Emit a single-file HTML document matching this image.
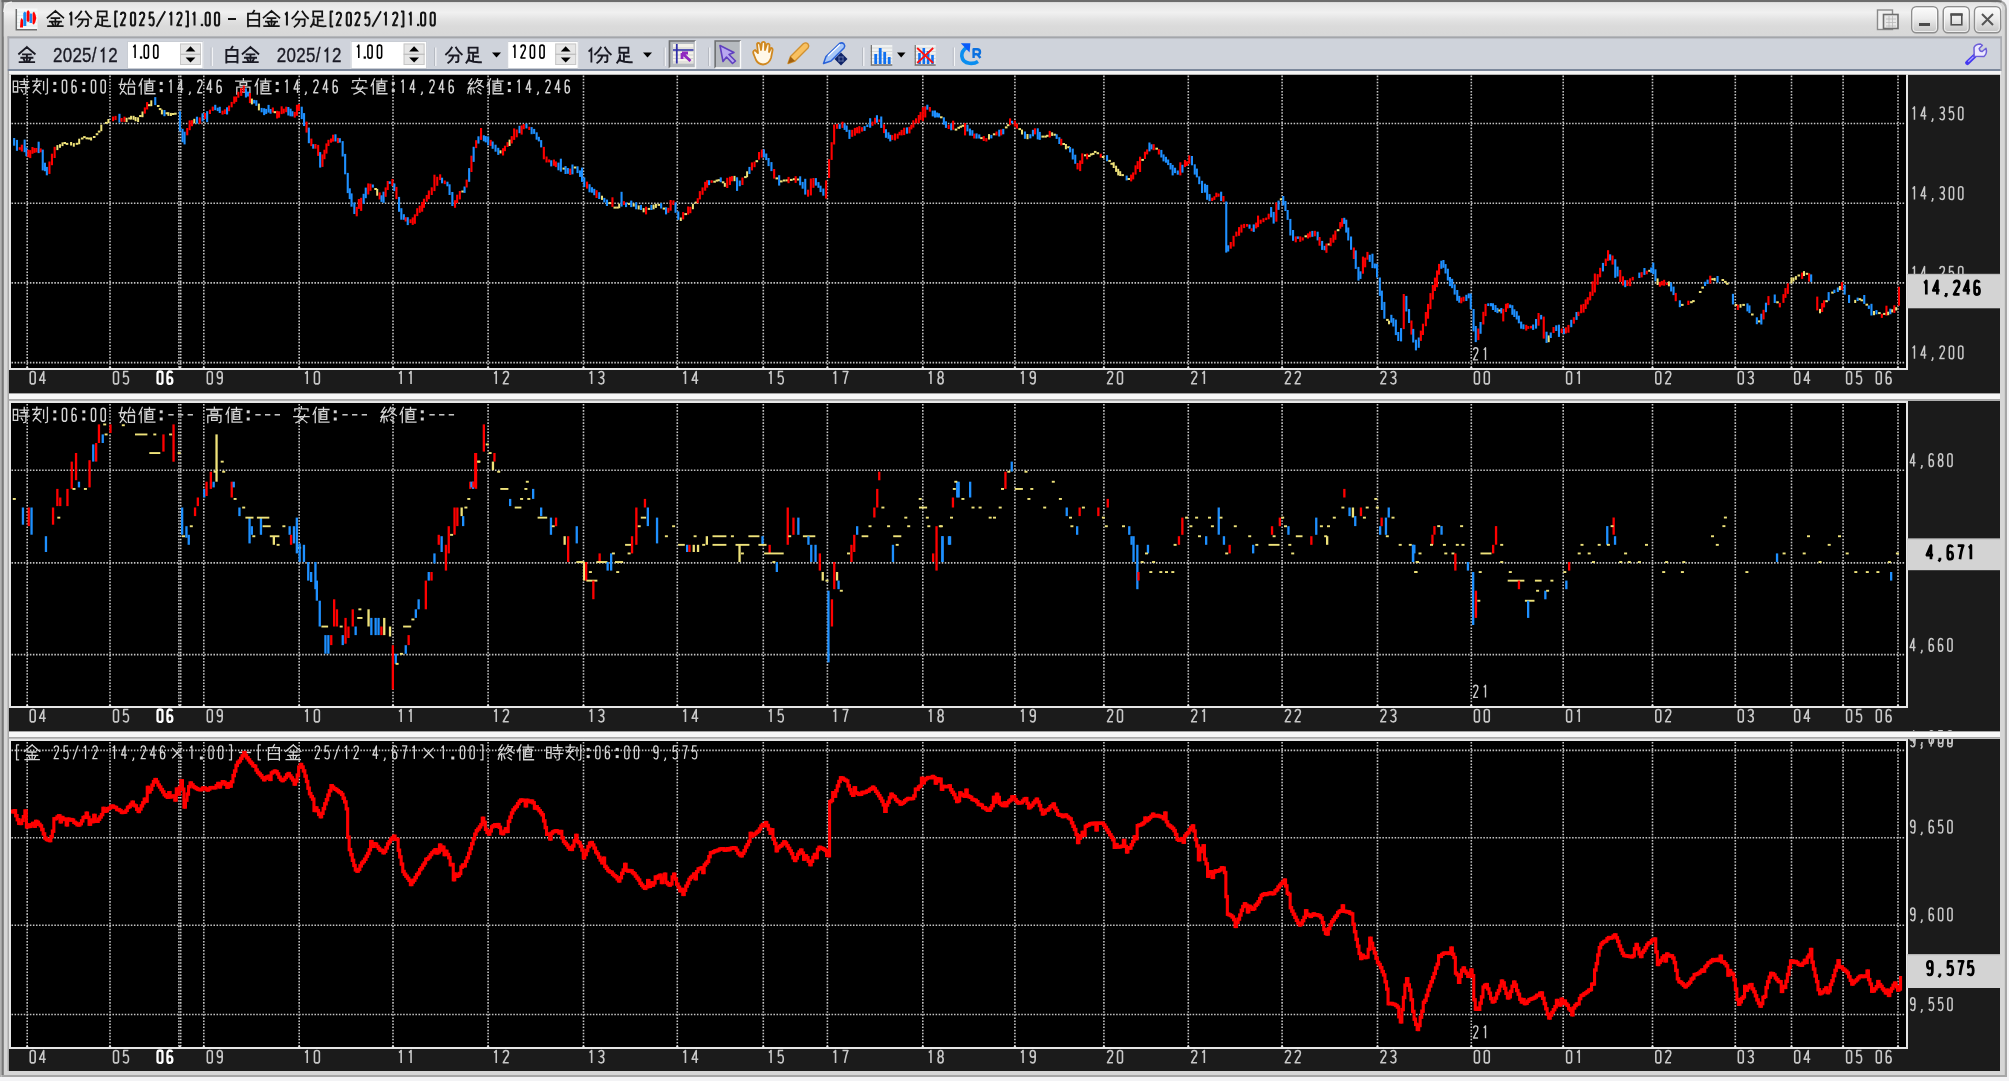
<!DOCTYPE html>
<html><head><meta charset="utf-8"><style>
html,body{margin:0;padding:0;background:#f6f6f6;overflow:hidden}
text{white-space:pre}
svg{display:block;will-change:transform}
</style></head><body>
<svg width="2009" height="1081" viewBox="0 0 2009 1081">
<rect x="0" y="0" width="2009" height="1081" fill="#f3f3f5"/>
<rect x="0" y="0" width="1.5" height="1077" fill="#b2b2b2"/>
<rect x="1.5" y="0" width="2005.5" height="1077" fill="#a6a6a6"/>
<rect x="1.5" y="0" width="2003.3" height="1075" fill="#d6d6d6"/>
<rect x="1.5" y="0" width="2.3" height="1075" fill="#797979"/>
<rect x="1.5" y="0" width="1997" height="2.2" fill="#6c6c6c"/>
<defs><linearGradient id="tg" x1="0" y1="0" x2="0" y2="1"><stop offset="0" stop-color="#e4e4e4"/><stop offset="0.3" stop-color="#f0f0f0"/><stop offset="0.52" stop-color="#e2e2e2"/><stop offset="0.7" stop-color="#dadada"/><stop offset="1" stop-color="#d8d8d8"/></linearGradient><linearGradient id="bg" x1="0" y1="0" x2="0" y2="1"><stop offset="0" stop-color="#fcfcfc"/><stop offset="0.45" stop-color="#ececec"/><stop offset="0.7" stop-color="#d8d8d8"/><stop offset="1" stop-color="#c4c4c4"/></linearGradient></defs>
<path d="M3.8,36.5 V9 Q3.8,2.2 10.5,2.2 H1990.5 V36.5 Z" fill="url(#tg)"/>
<path d="M3.8,12 Q3.8,2.2 12,2.2" fill="none" stroke="#f4f4f4" stroke-width="1.2"/>
<rect x="1996" y="0" width="13" height="10" fill="#f3f3f5"/>
<path d="M1996,0 H1997 Q2007,0 2007,9 V10 H2004.8 V9 Q2004.8,2.2 1997,2.2 H1996 Z" fill="#a6a6a6"/>
<path d="M1996,0 H1997 Q2000,0 2002,0.8 L2001,2.4 Q1999,2.2 1997,2.2 H1996 Z" fill="#6c6c6c"/>
<path d="M1996,2.2 H1997 Q2004.8,2.2 2004.8,9 V10 H2002 V9 Q2002,3.4 1997,3.4 H1996 Z" fill="#d6d6d6"/>
<path d="M1990,2.2 Q2002,2.2 2002,10 V36.5 H1990 Z" fill="url(#tg)"/>
<rect x="7.5" y="36.4" width="1.6" height="1034.6" fill="#a8a8a8"/>
<rect x="7.5" y="36.4" width="1994.5" height="1.2" fill="#a8a8a8"/>
<g><rect x="16" y="8.5" width="21.5" height="21" fill="#f6f8f8"/><path d="M17,12 H37 M17,15.5 H37 M17,19 H37 M17,22.5 H37 M17,26 H37" stroke="#dce8e8" stroke-width="0.7"/><path d="M16.3,9 V29.7 H37" fill="none" stroke="#6e6e6e" stroke-width="1.5"/><path d="M20,27.5 L20.6,20 L21.5,18 L23,20 V27.5 Z" fill="#ff0000"/><path d="M23.3,26 V13 L24.8,11.5 L26.3,13 V26 Z" fill="#1a88f0"/><path d="M26.7,21 V12 L28.1,10 L29.6,12 V21 L28.1,22 Z" fill="#ff0000"/><path d="M29.6,23 V14 L30.9,13.2 L32.2,14 V23 Z" fill="#1a88f0"/><path d="M32.6,24 V13 L34,11.5 L35.3,14 L36.3,18 L35.3,22 L34,24.5 Z" fill="#ff0000"/></g>
<path transform="translate(46.40,9.80) scale(1.1250)" d="M8,1 L1,7 M8,1 L15,7 M4.5,7.5 H11.5 M3,10.5 H13 M8,7.5 V14.5 M5,11.5 L6,13.5 M11,11.5 L10,13.5 M1.5,14.5 H14.5" fill="none" stroke="#141414" stroke-width="1.556" stroke-linecap="square" stroke-linejoin="miter"/>
<path transform="translate(74.50,9.80) scale(1.1250)" d="M6,1.5 Q4,5 1,7.5 M10,1.5 Q12,5 15,7.5 M4,8.5 H12 V13 Q12,14.5 10,14.5 M7.5,8.5 Q7,12.5 3,15" fill="none" stroke="#141414" stroke-width="1.556" stroke-linecap="square" stroke-linejoin="miter"/>
<path transform="translate(93.20,9.80) scale(1.1250)" d="M4,1.5 H12 V6 H4 Z M8,6 V13.2 M8,9.5 H12.5 M4.5,8.5 V13 M2,15 Q4.5,12 4.5,9 M4.5,13 Q9,15 15,14.6" fill="none" stroke="#141414" stroke-width="1.556" stroke-linecap="square" stroke-linejoin="miter"/>
<path transform="translate(244.60,9.80) scale(1.1250)" d="M8.5,0.8 L7.2,3 M3,3.5 H13 V14.8 M3,3.5 V14.8 M3,9 H13 M3,14.3 H13" fill="none" stroke="#141414" stroke-width="1.556" stroke-linecap="square" stroke-linejoin="miter"/>
<path transform="translate(262.50,9.80) scale(1.1250)" d="M8,1 L1,7 M8,1 L15,7 M4.5,7.5 H11.5 M3,10.5 H13 M8,7.5 V14.5 M5,11.5 L6,13.5 M11,11.5 L10,13.5 M1.5,14.5 H14.5" fill="none" stroke="#141414" stroke-width="1.556" stroke-linecap="square" stroke-linejoin="miter"/>
<path transform="translate(291.20,9.80) scale(1.1250)" d="M6,1.5 Q4,5 1,7.5 M10,1.5 Q12,5 15,7.5 M4,8.5 H12 V13 Q12,14.5 10,14.5 M7.5,8.5 Q7,12.5 3,15" fill="none" stroke="#141414" stroke-width="1.556" stroke-linecap="square" stroke-linejoin="miter"/>
<path transform="translate(308.70,9.80) scale(1.1250)" d="M4,1.5 H12 V6 H4 Z M8,6 V13.2 M8,9.5 H12.5 M4.5,8.5 V13 M2,15 Q4.5,12 4.5,9 M4.5,13 Q9,15 15,14.6" fill="none" stroke="#141414" stroke-width="1.556" stroke-linecap="square" stroke-linejoin="miter"/>
<path transform="translate(67.91,12.00) scale(1.0667,1.0000)" d="M1.4,2.6 Q2.6,1.8 3.2,0.5 V13.5" fill="none" stroke="#141414" stroke-width="2.0" vector-effect="non-scaling-stroke" stroke-linejoin="round"/><path transform="translate(113.07,12.00) scale(1.0667,1.0000)" d="M4.4,-0.5 H2 V14.5 H4.4" fill="none" stroke="#141414" stroke-width="2.0" vector-effect="non-scaling-stroke" stroke-linejoin="round"/><path transform="translate(119.84,12.00) scale(1.0667,1.0000)" d="M0.9,3 Q1.1,0.5 3,0.5 Q5.1,0.5 5.1,3.2 Q5.1,5.6 3.2,8 L0.9,13.3 H5.3" fill="none" stroke="#141414" stroke-width="2.0" vector-effect="non-scaling-stroke" stroke-linejoin="round"/><path transform="translate(129.83,12.00) scale(1.0667,1.0000)" d="M1,2.6 Q1,0.5 3,0.5 Q5,0.5 5,2.6 V11.4 Q5,13.5 3,13.5 Q1,13.5 1,11.4 Z" fill="none" stroke="#141414" stroke-width="2.0" vector-effect="non-scaling-stroke" stroke-linejoin="round"/><path transform="translate(138.84,12.00) scale(1.0667,1.0000)" d="M0.9,3 Q1.1,0.5 3,0.5 Q5.1,0.5 5.1,3.2 Q5.1,5.6 3.2,8 L0.9,13.3 H5.3" fill="none" stroke="#141414" stroke-width="2.0" vector-effect="non-scaling-stroke" stroke-linejoin="round"/><path transform="translate(148.35,12.00) scale(1.0667,1.0000)" d="M5,0.5 H1.3 L1.1,6.3 Q1.9,5.2 3,5.2 Q5.1,5.2 5.1,9.3 Q5.1,13.5 3,13.5 Q1.3,13.5 0.8,11.8" fill="none" stroke="#141414" stroke-width="2.0" vector-effect="non-scaling-stroke" stroke-linejoin="round"/><path d="M165.20,11.20 L156.50,26.80" stroke="#141414" stroke-width="1.80"/><path transform="translate(167.91,12.00) scale(1.0667,1.0000)" d="M1.4,2.6 Q2.6,1.8 3.2,0.5 V13.5" fill="none" stroke="#141414" stroke-width="2.0" vector-effect="non-scaling-stroke" stroke-linejoin="round"/><path transform="translate(176.24,12.00) scale(1.0667,1.0000)" d="M0.9,3 Q1.1,0.5 3,0.5 Q5.1,0.5 5.1,3.2 Q5.1,5.6 3.2,8 L0.9,13.3 H5.3" fill="none" stroke="#141414" stroke-width="2.0" vector-effect="non-scaling-stroke" stroke-linejoin="round"/><path transform="translate(183.69,12.00) scale(1.0667,1.0000)" d="M1.6,-0.5 H4 V14.5 H1.6" fill="none" stroke="#141414" stroke-width="2.0" vector-effect="non-scaling-stroke" stroke-linejoin="round"/><path transform="translate(191.11,12.00) scale(1.0667,1.0000)" d="M1.4,2.6 Q2.6,1.8 3.2,0.5 V13.5" fill="none" stroke="#141414" stroke-width="2.0" vector-effect="non-scaling-stroke" stroke-linejoin="round"/><rect x="200.80" y="23.80" width="2.3" height="2.3" fill="#141414"/><path transform="translate(204.53,12.00) scale(1.0667,1.0000)" d="M1,2.6 Q1,0.5 3,0.5 Q5,0.5 5,2.6 V11.4 Q5,13.5 3,13.5 Q1,13.5 1,11.4 Z" fill="none" stroke="#141414" stroke-width="2.0" vector-effect="non-scaling-stroke" stroke-linejoin="round"/><path transform="translate(213.83,12.00) scale(1.0667,1.0000)" d="M1,2.6 Q1,0.5 3,0.5 Q5,0.5 5,2.6 V11.4 Q5,13.5 3,13.5 Q1,13.5 1,11.4 Z" fill="none" stroke="#141414" stroke-width="2.0" vector-effect="non-scaling-stroke" stroke-linejoin="round"/><path d="M228.0,19.00 H236.0" stroke="#141414" stroke-width="2.0"/><path transform="translate(283.51,12.00) scale(1.0667,1.0000)" d="M1.4,2.6 Q2.6,1.8 3.2,0.5 V13.5" fill="none" stroke="#141414" stroke-width="2.0" vector-effect="non-scaling-stroke" stroke-linejoin="round"/><path transform="translate(328.47,12.00) scale(1.0667,1.0000)" d="M4.4,-0.5 H2 V14.5 H4.4" fill="none" stroke="#141414" stroke-width="2.0" vector-effect="non-scaling-stroke" stroke-linejoin="round"/><path transform="translate(335.64,12.00) scale(1.0667,1.0000)" d="M0.9,3 Q1.1,0.5 3,0.5 Q5.1,0.5 5.1,3.2 Q5.1,5.6 3.2,8 L0.9,13.3 H5.3" fill="none" stroke="#141414" stroke-width="2.0" vector-effect="non-scaling-stroke" stroke-linejoin="round"/><path transform="translate(345.63,12.00) scale(1.0667,1.0000)" d="M1,2.6 Q1,0.5 3,0.5 Q5,0.5 5,2.6 V11.4 Q5,13.5 3,13.5 Q1,13.5 1,11.4 Z" fill="none" stroke="#141414" stroke-width="2.0" vector-effect="non-scaling-stroke" stroke-linejoin="round"/><path transform="translate(354.34,12.00) scale(1.0667,1.0000)" d="M0.9,3 Q1.1,0.5 3,0.5 Q5.1,0.5 5.1,3.2 Q5.1,5.6 3.2,8 L0.9,13.3 H5.3" fill="none" stroke="#141414" stroke-width="2.0" vector-effect="non-scaling-stroke" stroke-linejoin="round"/><path transform="translate(364.15,12.00) scale(1.0667,1.0000)" d="M5,0.5 H1.3 L1.1,6.3 Q1.9,5.2 3,5.2 Q5.1,5.2 5.1,9.3 Q5.1,13.5 3,13.5 Q1.3,13.5 0.8,11.8" fill="none" stroke="#141414" stroke-width="2.0" vector-effect="non-scaling-stroke" stroke-linejoin="round"/><path d="M381.00,11.20 L372.30,26.80" stroke="#141414" stroke-width="1.80"/><path transform="translate(382.51,12.00) scale(1.0667,1.0000)" d="M1.4,2.6 Q2.6,1.8 3.2,0.5 V13.5" fill="none" stroke="#141414" stroke-width="2.0" vector-effect="non-scaling-stroke" stroke-linejoin="round"/><path transform="translate(392.04,12.00) scale(1.0667,1.0000)" d="M0.9,3 Q1.1,0.5 3,0.5 Q5.1,0.5 5.1,3.2 Q5.1,5.6 3.2,8 L0.9,13.3 H5.3" fill="none" stroke="#141414" stroke-width="2.0" vector-effect="non-scaling-stroke" stroke-linejoin="round"/><path transform="translate(399.19,12.00) scale(1.0667,1.0000)" d="M1.6,-0.5 H4 V14.5 H1.6" fill="none" stroke="#141414" stroke-width="2.0" vector-effect="non-scaling-stroke" stroke-linejoin="round"/><path transform="translate(407.41,12.00) scale(1.0667,1.0000)" d="M1.4,2.6 Q2.6,1.8 3.2,0.5 V13.5" fill="none" stroke="#141414" stroke-width="2.0" vector-effect="non-scaling-stroke" stroke-linejoin="round"/><rect x="417.00" y="23.80" width="2.3" height="2.3" fill="#141414"/><path transform="translate(419.93,12.00) scale(1.0667,1.0000)" d="M1,2.6 Q1,0.5 3,0.5 Q5,0.5 5,2.6 V11.4 Q5,13.5 3,13.5 Q1,13.5 1,11.4 Z" fill="none" stroke="#141414" stroke-width="2.0" vector-effect="non-scaling-stroke" stroke-linejoin="round"/><path transform="translate(429.53,12.00) scale(1.0667,1.0000)" d="M1,2.6 Q1,0.5 3,0.5 Q5,0.5 5,2.6 V11.4 Q5,13.5 3,13.5 Q1,13.5 1,11.4 Z" fill="none" stroke="#141414" stroke-width="2.0" vector-effect="non-scaling-stroke" stroke-linejoin="round"/>
<g><rect x="1877.5" y="10" width="15" height="19.5" fill="#f0f0f0" stroke="#8a8a8a" stroke-width="1.4"/><rect x="1883.5" y="14.5" width="14.5" height="14" fill="#e8e8e8" stroke="#6e6e6e" stroke-width="1.6"/><path d="M1886,19 H1896 M1886,22.5 H1896 M1886,26 H1896 M1889,16 V28 M1892.5,16 V28" stroke="#b8b8b8" stroke-width="0.8"/></g>
<rect x="1911.75" y="6.75" width="26.0" height="26.0" rx="4.5" fill="url(#bg)" stroke="#8e8e8e" stroke-width="1.5"/><rect x="1913" y="8" width="23.5" height="23.5" rx="3" fill="none" stroke="#ffffff" stroke-opacity="0.7" stroke-width="1"/>
<rect x="1919" y="23" width="11" height="3" fill="#4a4a4a"/>
<rect x="1943.25" y="6.75" width="26.0" height="26.0" rx="4.5" fill="url(#bg)" stroke="#8e8e8e" stroke-width="1.5"/><rect x="1944.5" y="8" width="23.5" height="23.5" rx="3" fill="none" stroke="#ffffff" stroke-opacity="0.7" stroke-width="1"/>
<rect x="1951.2" y="14.2" width="10.6" height="10.6" fill="none" stroke="#505050" stroke-width="1.6"/><rect x="1950.4" y="13.4" width="12.2" height="2.4" fill="#505050"/>
<rect x="1974.55" y="6.75" width="26.0" height="26.0" rx="4.5" fill="url(#bg)" stroke="#8e8e8e" stroke-width="1.5"/><rect x="1975.8" y="8" width="23.5" height="23.5" rx="3" fill="none" stroke="#ffffff" stroke-opacity="0.7" stroke-width="1"/>
<path d="M1982,14 L1993,25 M1993,14 L1982,25" stroke="#555555" stroke-width="2"/>
<rect x="7.8" y="36.6" width="1993.5" height="34" fill="#cfd3db"/>
<rect x="7.8" y="36.6" width="1993.5" height="1.8" fill="#a4a6aa"/>
<rect x="7.8" y="36.6" width="1.4" height="34" fill="#a8aab0"/>
<rect x="7.8" y="69" width="1993.5" height="2" fill="#7b879b"/>
<rect x="2000.3" y="36.6" width="1.6" height="34.4" fill="#a8aab0"/>
<path transform="translate(18.00,46.00) scale(1.1125)" d="M8,1 L1,7 M8,1 L15,7 M4.5,7.5 H11.5 M3,10.5 H13 M8,7.5 V14.5 M5,11.5 L6,13.5 M11,11.5 L10,13.5 M1.5,14.5 H14.5" fill="none" stroke="#1a1a24" stroke-width="1.708" stroke-linecap="square" stroke-linejoin="miter"/>
<text transform="scale(0.84,1)" x="63.07 74.74 86.29 97.74 109.34 128.91" y="62.4" font-family="'Liberation Sans', sans-serif" font-size="20.2" font-weight="normal" fill="#1a1a24" stroke="#1a1a24" stroke-width="0.35">2025/2</text><path d="M100.80,51.70 L103.60,48.90 V62.40" fill="none" stroke="#1a1a24" stroke-width="1.8"/>
<rect x="127" y="41" width="76.5" height="28" fill="#ffffff"/><rect x="127.5" y="41.5" width="75.5" height="27" fill="none" stroke="#c9cdd4" stroke-width="1"/><rect x="180.0" y="43.5" width="21" height="21.5" fill="#e6e6e6"/><rect x="180.5" y="44" width="20" height="20.5" fill="none" stroke="#c8c8c8" stroke-width="1"/><rect x="180.0" y="53.6" width="21" height="1.4" fill="#c0c0c0"/><path d="M185.6,51.5 L190.5,46.2 L195.4,51.5 Z" fill="#000"/><path d="M185.6,57.5 L190.5,62.6 L195.4,57.5 Z" fill="#000"/><path transform="translate(131.68,44.60) scale(1.0667,1.0000)" d="M1.4,2.6 Q2.6,1.8 3.2,0.5 V13.5" fill="none" stroke="#000" stroke-width="1.55" vector-effect="non-scaling-stroke" stroke-linejoin="round"/><rect x="139.90" y="56.40" width="2.3" height="2.3" fill="#000"/><path transform="translate(143.11,44.60) scale(1.0667,1.0000)" d="M1,2.6 Q1,0.5 3,0.5 Q5,0.5 5,2.6 V11.4 Q5,13.5 3,13.5 Q1,13.5 1,11.4 Z" fill="none" stroke="#000" stroke-width="1.55" vector-effect="non-scaling-stroke" stroke-linejoin="round"/><path transform="translate(152.61,44.60) scale(1.0667,1.0000)" d="M1,2.6 Q1,0.5 3,0.5 Q5,0.5 5,2.6 V11.4 Q5,13.5 3,13.5 Q1,13.5 1,11.4 Z" fill="none" stroke="#000" stroke-width="1.55" vector-effect="non-scaling-stroke" stroke-linejoin="round"/>
<rect x="210.7" y="47.5" width="1" height="18.5" fill="#b0b4bc"/><rect x="211.7" y="47.5" width="1.2" height="18.5" fill="#f4f6f8"/>
<path transform="translate(223.00,46.00) scale(1.1125)" d="M8.5,0.8 L7.2,3 M3,3.5 H13 V14.8 M3,3.5 V14.8 M3,9 H13 M3,14.3 H13" fill="none" stroke="#1a1a24" stroke-width="1.708" stroke-linecap="square" stroke-linejoin="miter"/>
<path transform="translate(241.60,46.00) scale(1.1125)" d="M8,1 L1,7 M8,1 L15,7 M4.5,7.5 H11.5 M3,10.5 H13 M8,7.5 V14.5 M5,11.5 L6,13.5 M11,11.5 L10,13.5 M1.5,14.5 H14.5" fill="none" stroke="#1a1a24" stroke-width="1.708" stroke-linecap="square" stroke-linejoin="miter"/>
<text transform="scale(0.84,1)" x="329.50 341.17 352.72 364.16 375.77 395.34" y="62.4" font-family="'Liberation Sans', sans-serif" font-size="20.2" font-weight="normal" fill="#1a1a24" stroke="#1a1a24" stroke-width="0.35">2025/2</text><path d="M324.60,51.70 L327.40,48.90 V62.40" fill="none" stroke="#1a1a24" stroke-width="1.8"/>
<rect x="350.6" y="41" width="76.5" height="28" fill="#ffffff"/><rect x="351.1" y="41.5" width="75.5" height="27" fill="none" stroke="#c9cdd4" stroke-width="1"/><rect x="403.6" y="43.5" width="21" height="21.5" fill="#e6e6e6"/><rect x="404.1" y="44" width="20" height="20.5" fill="none" stroke="#c8c8c8" stroke-width="1"/><rect x="403.6" y="53.6" width="21" height="1.4" fill="#c0c0c0"/><path d="M409.20000000000005,51.5 L414.1,46.2 L419.0,51.5 Z" fill="#000"/><path d="M409.20000000000005,57.5 L414.1,62.6 L419.0,57.5 Z" fill="#000"/><path transform="translate(355.38,44.60) scale(1.0667,1.0000)" d="M1.4,2.6 Q2.6,1.8 3.2,0.5 V13.5" fill="none" stroke="#000" stroke-width="1.55" vector-effect="non-scaling-stroke" stroke-linejoin="round"/><rect x="363.60" y="56.40" width="2.3" height="2.3" fill="#000"/><path transform="translate(366.81,44.60) scale(1.0667,1.0000)" d="M1,2.6 Q1,0.5 3,0.5 Q5,0.5 5,2.6 V11.4 Q5,13.5 3,13.5 Q1,13.5 1,11.4 Z" fill="none" stroke="#000" stroke-width="1.55" vector-effect="non-scaling-stroke" stroke-linejoin="round"/><path transform="translate(376.31,44.60) scale(1.0667,1.0000)" d="M1,2.6 Q1,0.5 3,0.5 Q5,0.5 5,2.6 V11.4 Q5,13.5 3,13.5 Q1,13.5 1,11.4 Z" fill="none" stroke="#000" stroke-width="1.55" vector-effect="non-scaling-stroke" stroke-linejoin="round"/>
<rect x="434.2" y="47.5" width="1" height="18.5" fill="#b0b4bc"/><rect x="435.2" y="47.5" width="1.2" height="18.5" fill="#f4f6f8"/>
<path transform="translate(445.00,46.00) scale(1.1125)" d="M6,1.5 Q4,5 1,7.5 M10,1.5 Q12,5 15,7.5 M4,8.5 H12 V13 Q12,14.5 10,14.5 M7.5,8.5 Q7,12.5 3,15" fill="none" stroke="#1a1a24" stroke-width="1.708" stroke-linecap="square" stroke-linejoin="miter"/>
<path transform="translate(464.20,46.00) scale(1.1125)" d="M4,1.5 H12 V6 H4 Z M8,6 V13.2 M8,9.5 H12.5 M4.5,8.5 V13 M2,15 Q4.5,12 4.5,9 M4.5,13 Q9,15 15,14.6" fill="none" stroke="#1a1a24" stroke-width="1.708" stroke-linecap="square" stroke-linejoin="miter"/>
<path d="M492,52.5 L501,52.5 L496.5,57.5 Z" fill="#000"/>
<rect x="507.2" y="41" width="71.50000000000006" height="28" fill="#ffffff"/><rect x="507.7" y="41.5" width="70.50000000000006" height="27" fill="none" stroke="#c9cdd4" stroke-width="1"/><rect x="555.2" y="43.5" width="21" height="21.5" fill="#e6e6e6"/><rect x="555.7" y="44" width="20" height="20.5" fill="none" stroke="#c8c8c8" stroke-width="1"/><rect x="555.2" y="53.6" width="21" height="1.4" fill="#c0c0c0"/><path d="M560.8000000000001,51.5 L565.7,46.2 L570.6,51.5 Z" fill="#000"/><path d="M560.8000000000001,57.5 L565.7,62.6 L570.6,57.5 Z" fill="#000"/><path transform="translate(511.48,44.60) scale(1.0667,1.0000)" d="M1.4,2.6 Q2.6,1.8 3.2,0.5 V13.5" fill="none" stroke="#000" stroke-width="1.55" vector-effect="non-scaling-stroke" stroke-linejoin="round"/><path transform="translate(519.92,44.60) scale(1.0667,1.0000)" d="M0.9,3 Q1.1,0.5 3,0.5 Q5.1,0.5 5.1,3.2 Q5.1,5.6 3.2,8 L0.9,13.3 H5.3" fill="none" stroke="#000" stroke-width="1.55" vector-effect="non-scaling-stroke" stroke-linejoin="round"/><path transform="translate(529.21,44.60) scale(1.0667,1.0000)" d="M1,2.6 Q1,0.5 3,0.5 Q5,0.5 5,2.6 V11.4 Q5,13.5 3,13.5 Q1,13.5 1,11.4 Z" fill="none" stroke="#000" stroke-width="1.55" vector-effect="non-scaling-stroke" stroke-linejoin="round"/><path transform="translate(538.81,44.60) scale(1.0667,1.0000)" d="M1,2.6 Q1,0.5 3,0.5 Q5,0.5 5,2.6 V11.4 Q5,13.5 3,13.5 Q1,13.5 1,11.4 Z" fill="none" stroke="#000" stroke-width="1.55" vector-effect="non-scaling-stroke" stroke-linejoin="round"/>
<path d="M588.60,51.70 L591.40,48.90 V62.40" fill="none" stroke="#1a1a24" stroke-width="1.8"/>
<path transform="translate(594.00,46.00) scale(1.1125)" d="M6,1.5 Q4,5 1,7.5 M10,1.5 Q12,5 15,7.5 M4,8.5 H12 V13 Q12,14.5 10,14.5 M7.5,8.5 Q7,12.5 3,15" fill="none" stroke="#1a1a24" stroke-width="1.708" stroke-linecap="square" stroke-linejoin="miter"/>
<path transform="translate(615.00,46.00) scale(1.1125)" d="M4,1.5 H12 V6 H4 Z M8,6 V13.2 M8,9.5 H12.5 M4.5,8.5 V13 M2,15 Q4.5,12 4.5,9 M4.5,13 Q9,15 15,14.6" fill="none" stroke="#1a1a24" stroke-width="1.708" stroke-linecap="square" stroke-linejoin="miter"/>
<path d="M643,52.5 L652,52.5 L647.5,57.5 Z" fill="#000"/>
<rect x="663.7" y="47.5" width="1" height="18.5" fill="#b0b4bc"/><rect x="664.7" y="47.5" width="1.2" height="18.5" fill="#f4f6f8"/>
<rect x="668.7" y="40.2" width="27" height="28" fill="#b6babf"/><path d="M669.5,68 V41 H695.5" fill="none" stroke="#707274" stroke-width="1.6"/><path d="M669.5,68 H695.5 V41" fill="none" stroke="#fafafa" stroke-width="1.4"/>
<g transform="translate(673,44)"><rect x="0" y="0" width="20.5" height="19.5" fill="#f4f2ea"/><path d="M0,4 H20.5 M0,7.5 H20.5 M0,11 H20.5 M0,14.5 H20.5 M0,18 H20.5" stroke="#c8c8c8" stroke-width="0.8"/><path d="M3.8,0 V19.5" stroke="#3030a8" stroke-width="1.8"/><path d="M0,6 H20.5" stroke="#3030a8" stroke-width="1.6"/><path d="M17.5,17 L10,10 M9,9 V15 M9,9 H15" stroke="#9028c0" stroke-width="2.8" fill="none"/></g>
<rect x="708.2" y="47.5" width="1" height="18.5" fill="#b0b4bc"/><rect x="709.2" y="47.5" width="1.2" height="18.5" fill="#f4f6f8"/>
<rect x="714.4" y="40.2" width="26.5" height="28" fill="#b6babf"/><path d="M715.2,68 V41 H740.5" fill="none" stroke="#707274" stroke-width="1.6"/><path d="M715.2,68 H740.5 V41" fill="none" stroke="#fafafa" stroke-width="1.4"/>
<path d="M720,45.5 L734,52.5 L729,54.5 L735.5,61 L732.5,63.5 L726.5,57 L723,61.5 Z" fill="#b8a8f0" stroke="#6040c0" stroke-width="1.6" stroke-linejoin="round"/>
<path d="M754,55 Q752,51 755,50 L758,53 L757,44 Q758,42 760,44 L761,50 L762,42.5 Q764,41 765,43 L765,50 L767,44 Q769,43 769.5,45 L769,52 L771,48 Q773,48 772.5,50.5 L771,58 Q769,64 763,64.5 Q758,64 756,60 Z" fill="#fff8e8" stroke="#d08820" stroke-width="1.8" stroke-linejoin="round"/>
<path d="M788,63.5 L790.5,56.5 L803.5,43.5 Q806,42 808,44 Q809.5,46 808,48 L795,61 Z" fill="#f8c060" stroke="#d09030" stroke-width="1.4" stroke-linejoin="round"/><path d="M788,63.5 L790.5,56.5 L795,61 Z" fill="#a06010"/>
<path d="M823.5,63.5 L826,56.5 L839.5,43.5 Q842,42 844,44 Q845.5,46 844,48 L831,61 Z" fill="#a8c8f8" stroke="#2a62d8" stroke-width="1.5" stroke-linejoin="round"/><path d="M828,56 L840,44.5" stroke="#ffffff" stroke-width="1.3"/><path d="M841,52.5 L847.5,59 L841,65.5 L834.5,59 Z" fill="#102468"/><path d="M838.5,57 H843.5 M838.5,61 H843.5 M839,56.5 V61.5 M843,56.5 V61.5" stroke="#8090c0" stroke-width="0.7"/>
<rect x="862.2" y="47.5" width="1" height="18.5" fill="#b0b4bc"/><rect x="863.2" y="47.5" width="1.2" height="18.5" fill="#f4f6f8"/>
<g transform="translate(870.3,45)"><rect x="0" y="0" width="22" height="20" fill="#f0f2f2"/><path d="M0,3 H22 M0,6.5 H22 M0,10 H22 M0,13.5 H22 M0,17 H22" stroke="#c8cccc" stroke-width="0.7"/><path d="M1,0 V20 H22" fill="none" stroke="#707070" stroke-width="1.3"/><rect x="4" y="9" width="2.8" height="10" fill="#1070f0"/><rect x="8.5" y="3" width="2.8" height="16" fill="#1070f0"/><rect x="13" y="7" width="2.8" height="12" fill="#1070f0"/><rect x="17.5" y="12" width="2.8" height="7" fill="#1070f0"/></g>
<path d="M897,52.5 L905.5,52.5 L901.2,57.5 Z" fill="#000"/>
<g transform="translate(914.2,45)"><rect x="0" y="0" width="21.5" height="20" fill="#f0f2f2"/><path d="M0,3 H21.5 M0,6.5 H21.5 M0,10 H21.5 M0,13.5 H21.5 M0,17 H21.5" stroke="#c8cccc" stroke-width="0.7"/><path d="M1,0 V20 H21.5" fill="none" stroke="#707070" stroke-width="1.3"/><rect x="4" y="8" width="2.6" height="11" fill="#1070f0"/><rect x="8.3" y="3" width="2.6" height="16" fill="#1070f0"/><rect x="12.6" y="6" width="2.6" height="13" fill="#1070f0"/><rect x="17" y="10" width="2.6" height="9" fill="#1070f0"/><path d="M3,3 L19,18 M19,3 L3,18" stroke="#ff1010" stroke-width="1.8"/></g>
<rect x="952.8000000000001" y="47.5" width="1" height="18.5" fill="#b0b4bc"/><rect x="953.8000000000001" y="47.5" width="1.2" height="18.5" fill="#f4f6f8"/>
<path d="M966.5,47.5 Q961.5,51 961.8,56 Q962.5,62.5 969.5,63.3 Q974.5,63.8 978,61.5" fill="none" stroke="#0a8ef0" stroke-width="3.6"/><path d="M960.8,43.2 H970.4 L969.6,52.4 Z" fill="#0a5cf8"/><path d="M973.6,58 V49.2 H977.2 Q980,49.2 980,51.9 Q980,54.2 977.6,54.4 L980.4,58 M973.6,54.3 H977" fill="none" stroke="#0a70e0" stroke-width="2.4" stroke-linejoin="round"/>
<path d="M1967.3,62.8 L1975,55.5" stroke="#4438f0" stroke-width="4.4" stroke-linecap="round"/><path d="M1968.2,61.8 L1973.5,56.8" stroke="#a8a0ff" stroke-width="1.3"/><path d="M1974.2,56.2 L1974,47.5 Q1975.5,44 1980.5,44 L1982.4,45.3 L1979.2,48.6 Q1979.8,51.6 1982.2,51.5 L1986,48.2 Q1987.5,53.5 1984,56.5 Z" fill="#ece8ff" stroke="#6c5ed8" stroke-width="1.5" stroke-linejoin="round"/>
<rect x="9" y="74.6" width="1991" height="318.4" fill="#1b1b1b"/>
<rect x="11" y="74.6" width="1895" height="293.4" fill="#000"/>
<path transform="translate(12.22,77.80) scale(1.0938)" d="M1,3 H5 V13 H1 Z M1,8 H5 M7,3.5 H15 M11,1 V6 M8,6 H14 M6.5,9 H15.5 M12.5,7 V14 Q12.5,15 10.5,15 M8.3,11 L9.5,12.8" fill="none" stroke="#d4d4d4" stroke-width="1.189" stroke-linecap="square" stroke-linejoin="miter"/>
<path transform="translate(31.56,77.80) scale(1.0938)" d="M4.8,0.8 V2.5 M1,3 H9 M5.5,3.2 L2,7.5 L7.5,7 M7.5,5.2 L1.5,13.5 M4,10.5 L8.5,14.5 M11,3.5 V11 M14.5,1 V14 Q14.5,15 12.8,15" fill="none" stroke="#d4d4d4" stroke-width="1.189" stroke-linecap="square" stroke-linejoin="miter"/>
<rect x="53.32" y="81.90" width="3.0" height="3.0" fill="#d4d4d4"/><rect x="53.32" y="89.10" width="3.0" height="3.0" fill="#d4d4d4"/>
<path transform="translate(61.29,79.40) scale(1.0667,1.0000)" d="M1,2.6 Q1,0.5 3,0.5 Q5,0.5 5,2.6 V11.4 Q5,13.5 3,13.5 Q1,13.5 1,11.4 Z" fill="none" stroke="#d4d4d4" stroke-width="1.45" vector-effect="non-scaling-stroke" stroke-linejoin="round"/>
<path transform="translate(70.96,79.40) scale(1.0667,1.0000)" d="M4.9,2.3 Q4.4,0.5 3,0.5 Q1,0.5 1,4 V10.6 Q1,13.5 3,13.5 Q5,13.5 5,10.2 Q5,6.6 3,6.6 Q1.6,6.6 1,8.4" fill="none" stroke="#d4d4d4" stroke-width="1.45" vector-effect="non-scaling-stroke" stroke-linejoin="round"/>
<rect x="82.33" y="81.90" width="3.0" height="3.0" fill="#d4d4d4"/><rect x="82.33" y="89.10" width="3.0" height="3.0" fill="#d4d4d4"/>
<path transform="translate(90.30,79.40) scale(1.0667,1.0000)" d="M1,2.6 Q1,0.5 3,0.5 Q5,0.5 5,2.6 V11.4 Q5,13.5 3,13.5 Q1,13.5 1,11.4 Z" fill="none" stroke="#d4d4d4" stroke-width="1.45" vector-effect="non-scaling-stroke" stroke-linejoin="round"/>
<path transform="translate(99.97,79.40) scale(1.0667,1.0000)" d="M1,2.6 Q1,0.5 3,0.5 Q5,0.5 5,2.6 V11.4 Q5,13.5 3,13.5 Q1,13.5 1,11.4 Z" fill="none" stroke="#d4d4d4" stroke-width="1.45" vector-effect="non-scaling-stroke" stroke-linejoin="round"/>
<path transform="translate(118.59,77.80) scale(1.0938)" d="M3.2,1 L1.5,9 L7,14.8 M5.8,5 Q5,11 1.5,14.8 M0.5,6 H7.2 M10.5,1 L8.7,6 L14.5,5.5 M13,3 L14.8,6 M9,8.5 H14.5 V14.8 H9 Z" fill="none" stroke="#d4d4d4" stroke-width="1.189" stroke-linecap="square" stroke-linejoin="miter"/>
<path transform="translate(137.93,77.80) scale(1.0938)" d="M4,1 L1,7.5 M3,5 V15 M6,3 H15.5 M10.5,1 V5 M8,5 H13.5 V12 H8 Z M8,7.4 H13.5 M8,9.7 H13.5 M6.5,5 V14.6 H15.5" fill="none" stroke="#d4d4d4" stroke-width="1.189" stroke-linecap="square" stroke-linejoin="miter"/>
<rect x="159.69" y="81.90" width="3.0" height="3.0" fill="#d4d4d4"/><rect x="159.69" y="89.10" width="3.0" height="3.0" fill="#d4d4d4"/>
<path transform="translate(167.66,79.40) scale(1.0667,1.0000)" d="M1.4,2.6 Q2.6,1.8 3.2,0.5 V13.5" fill="none" stroke="#d4d4d4" stroke-width="1.45" vector-effect="non-scaling-stroke" stroke-linejoin="round"/>
<path transform="translate(177.32,79.40) scale(1.0667,1.0000)" d="M3.9,13.5 V0.5 L0.6,9.6 H5.6" fill="none" stroke="#d4d4d4" stroke-width="1.45" vector-effect="non-scaling-stroke" stroke-linejoin="round"/>
<path transform="translate(186.99,79.40) scale(1.0667,1.0000)" d="M2.9,12 V13.8 L1.9,15.6" fill="none" stroke="#d4d4d4" stroke-width="1.45" vector-effect="non-scaling-stroke" stroke-linejoin="round"/>
<path transform="translate(196.66,79.40) scale(1.0667,1.0000)" d="M0.9,3 Q1.1,0.5 3,0.5 Q5.1,0.5 5.1,3.2 Q5.1,5.6 3.2,8 L0.9,13.3 H5.3" fill="none" stroke="#d4d4d4" stroke-width="1.45" vector-effect="non-scaling-stroke" stroke-linejoin="round"/>
<path transform="translate(206.33,79.40) scale(1.0667,1.0000)" d="M3.9,13.5 V0.5 L0.6,9.6 H5.6" fill="none" stroke="#d4d4d4" stroke-width="1.45" vector-effect="non-scaling-stroke" stroke-linejoin="round"/>
<path transform="translate(216.00,79.40) scale(1.0667,1.0000)" d="M4.9,2.3 Q4.4,0.5 3,0.5 Q1,0.5 1,4 V10.6 Q1,13.5 3,13.5 Q5,13.5 5,10.2 Q5,6.6 3,6.6 Q1.6,6.6 1,8.4" fill="none" stroke="#d4d4d4" stroke-width="1.45" vector-effect="non-scaling-stroke" stroke-linejoin="round"/>
<path transform="translate(234.63,77.80) scale(1.0938)" d="M8,0.8 V2.5 M1,3 H15 M5,4.5 H11 V7 H5 Z M2,15 V8.5 H14 V14 Q14,15 12.5,15 M5.5,10.5 H10.5 V13 H5.5 Z" fill="none" stroke="#d4d4d4" stroke-width="1.189" stroke-linecap="square" stroke-linejoin="miter"/>
<path transform="translate(253.97,77.80) scale(1.0938)" d="M4,1 L1,7.5 M3,5 V15 M6,3 H15.5 M10.5,1 V5 M8,5 H13.5 V12 H8 Z M8,7.4 H13.5 M8,9.7 H13.5 M6.5,5 V14.6 H15.5" fill="none" stroke="#d4d4d4" stroke-width="1.189" stroke-linecap="square" stroke-linejoin="miter"/>
<rect x="275.72" y="81.90" width="3.0" height="3.0" fill="#d4d4d4"/><rect x="275.72" y="89.10" width="3.0" height="3.0" fill="#d4d4d4"/>
<path transform="translate(283.69,79.40) scale(1.0667,1.0000)" d="M1.4,2.6 Q2.6,1.8 3.2,0.5 V13.5" fill="none" stroke="#d4d4d4" stroke-width="1.45" vector-effect="non-scaling-stroke" stroke-linejoin="round"/>
<path transform="translate(293.36,79.40) scale(1.0667,1.0000)" d="M3.9,13.5 V0.5 L0.6,9.6 H5.6" fill="none" stroke="#d4d4d4" stroke-width="1.45" vector-effect="non-scaling-stroke" stroke-linejoin="round"/>
<path transform="translate(303.03,79.40) scale(1.0667,1.0000)" d="M2.9,12 V13.8 L1.9,15.6" fill="none" stroke="#d4d4d4" stroke-width="1.45" vector-effect="non-scaling-stroke" stroke-linejoin="round"/>
<path transform="translate(312.70,79.40) scale(1.0667,1.0000)" d="M0.9,3 Q1.1,0.5 3,0.5 Q5.1,0.5 5.1,3.2 Q5.1,5.6 3.2,8 L0.9,13.3 H5.3" fill="none" stroke="#d4d4d4" stroke-width="1.45" vector-effect="non-scaling-stroke" stroke-linejoin="round"/>
<path transform="translate(322.38,79.40) scale(1.0667,1.0000)" d="M3.9,13.5 V0.5 L0.6,9.6 H5.6" fill="none" stroke="#d4d4d4" stroke-width="1.45" vector-effect="non-scaling-stroke" stroke-linejoin="round"/>
<path transform="translate(332.05,79.40) scale(1.0667,1.0000)" d="M4.9,2.3 Q4.4,0.5 3,0.5 Q1,0.5 1,4 V10.6 Q1,13.5 3,13.5 Q5,13.5 5,10.2 Q5,6.6 3,6.6 Q1.6,6.6 1,8.4" fill="none" stroke="#d4d4d4" stroke-width="1.45" vector-effect="non-scaling-stroke" stroke-linejoin="round"/>
<path transform="translate(350.67,77.80) scale(1.0938)" d="M8,0.5 V2 M2,4.2 V2.5 H14 V4.2 M7,4.5 Q6,7.5 4.8,9.5 Q9,11 13,15 M11,8 Q9,13 3,15 M1,9.5 H15" fill="none" stroke="#d4d4d4" stroke-width="1.189" stroke-linecap="square" stroke-linejoin="miter"/>
<path transform="translate(370.01,77.80) scale(1.0938)" d="M4,1 L1,7.5 M3,5 V15 M6,3 H15.5 M10.5,1 V5 M8,5 H13.5 V12 H8 Z M8,7.4 H13.5 M8,9.7 H13.5 M6.5,5 V14.6 H15.5" fill="none" stroke="#d4d4d4" stroke-width="1.189" stroke-linecap="square" stroke-linejoin="miter"/>
<rect x="391.76" y="81.90" width="3.0" height="3.0" fill="#d4d4d4"/><rect x="391.76" y="89.10" width="3.0" height="3.0" fill="#d4d4d4"/>
<path transform="translate(399.74,79.40) scale(1.0667,1.0000)" d="M1.4,2.6 Q2.6,1.8 3.2,0.5 V13.5" fill="none" stroke="#d4d4d4" stroke-width="1.45" vector-effect="non-scaling-stroke" stroke-linejoin="round"/>
<path transform="translate(409.41,79.40) scale(1.0667,1.0000)" d="M3.9,13.5 V0.5 L0.6,9.6 H5.6" fill="none" stroke="#d4d4d4" stroke-width="1.45" vector-effect="non-scaling-stroke" stroke-linejoin="round"/>
<path transform="translate(419.08,79.40) scale(1.0667,1.0000)" d="M2.9,12 V13.8 L1.9,15.6" fill="none" stroke="#d4d4d4" stroke-width="1.45" vector-effect="non-scaling-stroke" stroke-linejoin="round"/>
<path transform="translate(428.75,79.40) scale(1.0667,1.0000)" d="M0.9,3 Q1.1,0.5 3,0.5 Q5.1,0.5 5.1,3.2 Q5.1,5.6 3.2,8 L0.9,13.3 H5.3" fill="none" stroke="#d4d4d4" stroke-width="1.45" vector-effect="non-scaling-stroke" stroke-linejoin="round"/>
<path transform="translate(438.42,79.40) scale(1.0667,1.0000)" d="M3.9,13.5 V0.5 L0.6,9.6 H5.6" fill="none" stroke="#d4d4d4" stroke-width="1.45" vector-effect="non-scaling-stroke" stroke-linejoin="round"/>
<path transform="translate(448.09,79.40) scale(1.0667,1.0000)" d="M4.9,2.3 Q4.4,0.5 3,0.5 Q1,0.5 1,4 V10.6 Q1,13.5 3,13.5 Q5,13.5 5,10.2 Q5,6.6 3,6.6 Q1.6,6.6 1,8.4" fill="none" stroke="#d4d4d4" stroke-width="1.45" vector-effect="non-scaling-stroke" stroke-linejoin="round"/>
<path transform="translate(466.71,77.80) scale(1.0938)" d="M4.5,1 L1.7,5.3 L5.2,5.3 M6,3.5 L1.5,10 L7,9.2 M4,9.2 V15 M2,11 L1,14 M6,11 L7,13.5 M10,1 Q9,4 7.5,5.5 M10,2.5 H14 Q12,6.5 8.5,8.8 M10.3,4.5 Q12,7 15.3,8.5 M11,10 L12.8,11.2 M10,12.5 L13,14.6" fill="none" stroke="#d4d4d4" stroke-width="1.189" stroke-linecap="square" stroke-linejoin="miter"/>
<path transform="translate(486.05,77.80) scale(1.0938)" d="M4,1 L1,7.5 M3,5 V15 M6,3 H15.5 M10.5,1 V5 M8,5 H13.5 V12 H8 Z M8,7.4 H13.5 M8,9.7 H13.5 M6.5,5 V14.6 H15.5" fill="none" stroke="#d4d4d4" stroke-width="1.189" stroke-linecap="square" stroke-linejoin="miter"/>
<rect x="507.81" y="81.90" width="3.0" height="3.0" fill="#d4d4d4"/><rect x="507.81" y="89.10" width="3.0" height="3.0" fill="#d4d4d4"/>
<path transform="translate(515.78,79.40) scale(1.0667,1.0000)" d="M1.4,2.6 Q2.6,1.8 3.2,0.5 V13.5" fill="none" stroke="#d4d4d4" stroke-width="1.45" vector-effect="non-scaling-stroke" stroke-linejoin="round"/>
<path transform="translate(525.45,79.40) scale(1.0667,1.0000)" d="M3.9,13.5 V0.5 L0.6,9.6 H5.6" fill="none" stroke="#d4d4d4" stroke-width="1.45" vector-effect="non-scaling-stroke" stroke-linejoin="round"/>
<path transform="translate(535.12,79.40) scale(1.0667,1.0000)" d="M2.9,12 V13.8 L1.9,15.6" fill="none" stroke="#d4d4d4" stroke-width="1.45" vector-effect="non-scaling-stroke" stroke-linejoin="round"/>
<path transform="translate(544.78,79.40) scale(1.0667,1.0000)" d="M0.9,3 Q1.1,0.5 3,0.5 Q5.1,0.5 5.1,3.2 Q5.1,5.6 3.2,8 L0.9,13.3 H5.3" fill="none" stroke="#d4d4d4" stroke-width="1.45" vector-effect="non-scaling-stroke" stroke-linejoin="round"/>
<path transform="translate(554.45,79.40) scale(1.0667,1.0000)" d="M3.9,13.5 V0.5 L0.6,9.6 H5.6" fill="none" stroke="#d4d4d4" stroke-width="1.45" vector-effect="non-scaling-stroke" stroke-linejoin="round"/>
<path transform="translate(564.12,79.40) scale(1.0667,1.0000)" d="M4.9,2.3 Q4.4,0.5 3,0.5 Q1,0.5 1,4 V10.6 Q1,13.5 3,13.5 Q5,13.5 5,10.2 Q5,6.6 3,6.6 Q1.6,6.6 1,8.4" fill="none" stroke="#d4d4d4" stroke-width="1.45" vector-effect="non-scaling-stroke" stroke-linejoin="round"/>
<g stroke="#c4c4c4" stroke-width="1.6" stroke-dasharray="1.53 1.53" fill="none">
<line x1="27.2" y1="75.6" x2="27.2" y2="367.5"/>
<line x1="110.0" y1="75.6" x2="110.0" y2="367.5"/>
<line x1="178.9" y1="75.6" x2="178.9" y2="367.5"/>
<line x1="180.7" y1="75.6" x2="180.7" y2="367.5"/>
<line x1="203.8" y1="75.6" x2="203.8" y2="367.5"/>
<line x1="299.2" y1="75.6" x2="299.2" y2="367.5"/>
<line x1="393.0" y1="75.6" x2="393.0" y2="367.5"/>
<line x1="488.1" y1="75.6" x2="488.1" y2="367.5"/>
<line x1="583.5" y1="75.6" x2="583.5" y2="367.5"/>
<line x1="677.3" y1="75.6" x2="677.3" y2="367.5"/>
<line x1="763.3" y1="75.6" x2="763.3" y2="367.5"/>
<line x1="827.4" y1="75.6" x2="827.4" y2="367.5"/>
<line x1="922.8" y1="75.6" x2="922.8" y2="367.5"/>
<line x1="1014.9" y1="75.6" x2="1014.9" y2="367.5"/>
<line x1="1103.9" y1="75.6" x2="1103.9" y2="367.5"/>
<line x1="1188.3" y1="75.6" x2="1188.3" y2="367.5"/>
<line x1="1282.1" y1="75.6" x2="1282.1" y2="367.5"/>
<line x1="1377.5" y1="75.6" x2="1377.5" y2="367.5"/>
<line x1="1471.3" y1="75.6" x2="1471.3" y2="367.5"/>
<line x1="1563.2" y1="75.6" x2="1563.2" y2="367.5"/>
<line x1="1652.5" y1="75.6" x2="1652.5" y2="367.5"/>
<line x1="1735.3" y1="75.6" x2="1735.3" y2="367.5"/>
<line x1="1791.5" y1="75.6" x2="1791.5" y2="367.5"/>
<line x1="1843.1" y1="75.6" x2="1843.1" y2="367.5"/>
<line x1="1898.0" y1="75.6" x2="1898.0" y2="367.5"/>
<line x1="11.5" y1="123.5" x2="1905.5" y2="123.5"/>
<line x1="11.5" y1="203.2" x2="1905.5" y2="203.2"/>
<line x1="11.5" y1="282.9" x2="1905.5" y2="282.9"/>
<line x1="11.5" y1="362.6" x2="1905.5" y2="362.6"/>
</g>
<clipPath id="cp0"><rect x="11" y="74.6" width="1895" height="293.4"/></clipPath>
<rect x="9" y="400.5" width="1991" height="330.5" fill="#1b1b1b"/>
<rect x="11" y="403" width="1895" height="303" fill="#000"/>
<path transform="translate(12.22,406.20) scale(1.0938)" d="M1,3 H5 V13 H1 Z M1,8 H5 M7,3.5 H15 M11,1 V6 M8,6 H14 M6.5,9 H15.5 M12.5,7 V14 Q12.5,15 10.5,15 M8.3,11 L9.5,12.8" fill="none" stroke="#d4d4d4" stroke-width="1.189" stroke-linecap="square" stroke-linejoin="miter"/>
<path transform="translate(31.56,406.20) scale(1.0938)" d="M4.8,0.8 V2.5 M1,3 H9 M5.5,3.2 L2,7.5 L7.5,7 M7.5,5.2 L1.5,13.5 M4,10.5 L8.5,14.5 M11,3.5 V11 M14.5,1 V14 Q14.5,15 12.8,15" fill="none" stroke="#d4d4d4" stroke-width="1.189" stroke-linecap="square" stroke-linejoin="miter"/>
<rect x="53.32" y="410.30" width="3.0" height="3.0" fill="#d4d4d4"/><rect x="53.32" y="417.50" width="3.0" height="3.0" fill="#d4d4d4"/>
<path transform="translate(61.29,407.80) scale(1.0667,1.0000)" d="M1,2.6 Q1,0.5 3,0.5 Q5,0.5 5,2.6 V11.4 Q5,13.5 3,13.5 Q1,13.5 1,11.4 Z" fill="none" stroke="#d4d4d4" stroke-width="1.45" vector-effect="non-scaling-stroke" stroke-linejoin="round"/>
<path transform="translate(70.96,407.80) scale(1.0667,1.0000)" d="M4.9,2.3 Q4.4,0.5 3,0.5 Q1,0.5 1,4 V10.6 Q1,13.5 3,13.5 Q5,13.5 5,10.2 Q5,6.6 3,6.6 Q1.6,6.6 1,8.4" fill="none" stroke="#d4d4d4" stroke-width="1.45" vector-effect="non-scaling-stroke" stroke-linejoin="round"/>
<rect x="82.33" y="410.30" width="3.0" height="3.0" fill="#d4d4d4"/><rect x="82.33" y="417.50" width="3.0" height="3.0" fill="#d4d4d4"/>
<path transform="translate(90.30,407.80) scale(1.0667,1.0000)" d="M1,2.6 Q1,0.5 3,0.5 Q5,0.5 5,2.6 V11.4 Q5,13.5 3,13.5 Q1,13.5 1,11.4 Z" fill="none" stroke="#d4d4d4" stroke-width="1.45" vector-effect="non-scaling-stroke" stroke-linejoin="round"/>
<path transform="translate(99.97,407.80) scale(1.0667,1.0000)" d="M1,2.6 Q1,0.5 3,0.5 Q5,0.5 5,2.6 V11.4 Q5,13.5 3,13.5 Q1,13.5 1,11.4 Z" fill="none" stroke="#d4d4d4" stroke-width="1.45" vector-effect="non-scaling-stroke" stroke-linejoin="round"/>
<path transform="translate(118.59,406.20) scale(1.0938)" d="M3.2,1 L1.5,9 L7,14.8 M5.8,5 Q5,11 1.5,14.8 M0.5,6 H7.2 M10.5,1 L8.7,6 L14.5,5.5 M13,3 L14.8,6 M9,8.5 H14.5 V14.8 H9 Z" fill="none" stroke="#d4d4d4" stroke-width="1.189" stroke-linecap="square" stroke-linejoin="miter"/>
<path transform="translate(137.93,406.20) scale(1.0938)" d="M4,1 L1,7.5 M3,5 V15 M6,3 H15.5 M10.5,1 V5 M8,5 H13.5 V12 H8 Z M8,7.4 H13.5 M8,9.7 H13.5 M6.5,5 V14.6 H15.5" fill="none" stroke="#d4d4d4" stroke-width="1.189" stroke-linecap="square" stroke-linejoin="miter"/>
<rect x="159.69" y="410.30" width="3.0" height="3.0" fill="#d4d4d4"/><rect x="159.69" y="417.50" width="3.0" height="3.0" fill="#d4d4d4"/>
<path transform="translate(167.66,407.80) scale(1.0667,1.0000)" d="M0.6,7 H5.6" fill="none" stroke="#d4d4d4" stroke-width="1.45" vector-effect="non-scaling-stroke" stroke-linejoin="round"/>
<path transform="translate(177.32,407.80) scale(1.0667,1.0000)" d="M0.6,7 H5.6" fill="none" stroke="#d4d4d4" stroke-width="1.45" vector-effect="non-scaling-stroke" stroke-linejoin="round"/>
<path transform="translate(186.99,407.80) scale(1.0667,1.0000)" d="M0.6,7 H5.6" fill="none" stroke="#d4d4d4" stroke-width="1.45" vector-effect="non-scaling-stroke" stroke-linejoin="round"/>
<path transform="translate(205.62,406.20) scale(1.0938)" d="M8,0.8 V2.5 M1,3 H15 M5,4.5 H11 V7 H5 Z M2,15 V8.5 H14 V14 Q14,15 12.5,15 M5.5,10.5 H10.5 V13 H5.5 Z" fill="none" stroke="#d4d4d4" stroke-width="1.189" stroke-linecap="square" stroke-linejoin="miter"/>
<path transform="translate(224.96,406.20) scale(1.0938)" d="M4,1 L1,7.5 M3,5 V15 M6,3 H15.5 M10.5,1 V5 M8,5 H13.5 V12 H8 Z M8,7.4 H13.5 M8,9.7 H13.5 M6.5,5 V14.6 H15.5" fill="none" stroke="#d4d4d4" stroke-width="1.189" stroke-linecap="square" stroke-linejoin="miter"/>
<rect x="246.71" y="410.30" width="3.0" height="3.0" fill="#d4d4d4"/><rect x="246.71" y="417.50" width="3.0" height="3.0" fill="#d4d4d4"/>
<path transform="translate(254.68,407.80) scale(1.0667,1.0000)" d="M0.6,7 H5.6" fill="none" stroke="#d4d4d4" stroke-width="1.45" vector-effect="non-scaling-stroke" stroke-linejoin="round"/>
<path transform="translate(264.35,407.80) scale(1.0667,1.0000)" d="M0.6,7 H5.6" fill="none" stroke="#d4d4d4" stroke-width="1.45" vector-effect="non-scaling-stroke" stroke-linejoin="round"/>
<path transform="translate(274.02,407.80) scale(1.0667,1.0000)" d="M0.6,7 H5.6" fill="none" stroke="#d4d4d4" stroke-width="1.45" vector-effect="non-scaling-stroke" stroke-linejoin="round"/>
<path transform="translate(292.65,406.20) scale(1.0938)" d="M8,0.5 V2 M2,4.2 V2.5 H14 V4.2 M7,4.5 Q6,7.5 4.8,9.5 Q9,11 13,15 M11,8 Q9,13 3,15 M1,9.5 H15" fill="none" stroke="#d4d4d4" stroke-width="1.189" stroke-linecap="square" stroke-linejoin="miter"/>
<path transform="translate(311.99,406.20) scale(1.0938)" d="M4,1 L1,7.5 M3,5 V15 M6,3 H15.5 M10.5,1 V5 M8,5 H13.5 V12 H8 Z M8,7.4 H13.5 M8,9.7 H13.5 M6.5,5 V14.6 H15.5" fill="none" stroke="#d4d4d4" stroke-width="1.189" stroke-linecap="square" stroke-linejoin="miter"/>
<rect x="333.74" y="410.30" width="3.0" height="3.0" fill="#d4d4d4"/><rect x="333.74" y="417.50" width="3.0" height="3.0" fill="#d4d4d4"/>
<path transform="translate(341.71,407.80) scale(1.0667,1.0000)" d="M0.6,7 H5.6" fill="none" stroke="#d4d4d4" stroke-width="1.45" vector-effect="non-scaling-stroke" stroke-linejoin="round"/>
<path transform="translate(351.38,407.80) scale(1.0667,1.0000)" d="M0.6,7 H5.6" fill="none" stroke="#d4d4d4" stroke-width="1.45" vector-effect="non-scaling-stroke" stroke-linejoin="round"/>
<path transform="translate(361.06,407.80) scale(1.0667,1.0000)" d="M0.6,7 H5.6" fill="none" stroke="#d4d4d4" stroke-width="1.45" vector-effect="non-scaling-stroke" stroke-linejoin="round"/>
<path transform="translate(379.68,406.20) scale(1.0938)" d="M4.5,1 L1.7,5.3 L5.2,5.3 M6,3.5 L1.5,10 L7,9.2 M4,9.2 V15 M2,11 L1,14 M6,11 L7,13.5 M10,1 Q9,4 7.5,5.5 M10,2.5 H14 Q12,6.5 8.5,8.8 M10.3,4.5 Q12,7 15.3,8.5 M11,10 L12.8,11.2 M10,12.5 L13,14.6" fill="none" stroke="#d4d4d4" stroke-width="1.189" stroke-linecap="square" stroke-linejoin="miter"/>
<path transform="translate(399.02,406.20) scale(1.0938)" d="M4,1 L1,7.5 M3,5 V15 M6,3 H15.5 M10.5,1 V5 M8,5 H13.5 V12 H8 Z M8,7.4 H13.5 M8,9.7 H13.5 M6.5,5 V14.6 H15.5" fill="none" stroke="#d4d4d4" stroke-width="1.189" stroke-linecap="square" stroke-linejoin="miter"/>
<rect x="420.77" y="410.30" width="3.0" height="3.0" fill="#d4d4d4"/><rect x="420.77" y="417.50" width="3.0" height="3.0" fill="#d4d4d4"/>
<path transform="translate(428.75,407.80) scale(1.0667,1.0000)" d="M0.6,7 H5.6" fill="none" stroke="#d4d4d4" stroke-width="1.45" vector-effect="non-scaling-stroke" stroke-linejoin="round"/>
<path transform="translate(438.42,407.80) scale(1.0667,1.0000)" d="M0.6,7 H5.6" fill="none" stroke="#d4d4d4" stroke-width="1.45" vector-effect="non-scaling-stroke" stroke-linejoin="round"/>
<path transform="translate(448.09,407.80) scale(1.0667,1.0000)" d="M0.6,7 H5.6" fill="none" stroke="#d4d4d4" stroke-width="1.45" vector-effect="non-scaling-stroke" stroke-linejoin="round"/>
<g stroke="#c4c4c4" stroke-width="1.6" stroke-dasharray="1.53 1.53" fill="none">
<line x1="27.2" y1="404" x2="27.2" y2="705.5"/>
<line x1="110.0" y1="404" x2="110.0" y2="705.5"/>
<line x1="178.9" y1="404" x2="178.9" y2="705.5"/>
<line x1="180.7" y1="404" x2="180.7" y2="705.5"/>
<line x1="203.8" y1="404" x2="203.8" y2="705.5"/>
<line x1="299.2" y1="404" x2="299.2" y2="705.5"/>
<line x1="393.0" y1="404" x2="393.0" y2="705.5"/>
<line x1="488.1" y1="404" x2="488.1" y2="705.5"/>
<line x1="583.5" y1="404" x2="583.5" y2="705.5"/>
<line x1="677.3" y1="404" x2="677.3" y2="705.5"/>
<line x1="763.3" y1="404" x2="763.3" y2="705.5"/>
<line x1="827.4" y1="404" x2="827.4" y2="705.5"/>
<line x1="922.8" y1="404" x2="922.8" y2="705.5"/>
<line x1="1014.9" y1="404" x2="1014.9" y2="705.5"/>
<line x1="1103.9" y1="404" x2="1103.9" y2="705.5"/>
<line x1="1188.3" y1="404" x2="1188.3" y2="705.5"/>
<line x1="1282.1" y1="404" x2="1282.1" y2="705.5"/>
<line x1="1377.5" y1="404" x2="1377.5" y2="705.5"/>
<line x1="1471.3" y1="404" x2="1471.3" y2="705.5"/>
<line x1="1563.2" y1="404" x2="1563.2" y2="705.5"/>
<line x1="1652.5" y1="404" x2="1652.5" y2="705.5"/>
<line x1="1735.3" y1="404" x2="1735.3" y2="705.5"/>
<line x1="1791.5" y1="404" x2="1791.5" y2="705.5"/>
<line x1="1843.1" y1="404" x2="1843.1" y2="705.5"/>
<line x1="1898.0" y1="404" x2="1898.0" y2="705.5"/>
<line x1="11.5" y1="470.3" x2="1905.5" y2="470.3"/>
<line x1="11.5" y1="562.9" x2="1905.5" y2="562.9"/>
<line x1="11.5" y1="654.6" x2="1905.5" y2="654.6"/>
</g>
<clipPath id="cp1"><rect x="11" y="403" width="1895" height="303"/></clipPath>
<rect x="9" y="738.5" width="1991" height="332.5" fill="#1b1b1b"/>
<rect x="11" y="741" width="1895" height="306" fill="#000"/>
<path transform="translate(14.44,745.40) scale(1.0667,1.0000)" d="M4.4,-0.5 H2 V14.5 H4.4" fill="none" stroke="#d4d4d4" stroke-width="1.3" vector-effect="non-scaling-stroke" stroke-linejoin="round"/>
<path transform="translate(23.39,743.80) scale(1.0938)" d="M8,1 L1,7 M8,1 L15,7 M4.5,7.5 H11.5 M3,10.5 H13 M8,7.5 V14.5 M5,11.5 L6,13.5 M11,11.5 L10,13.5 M1.5,14.5 H14.5" fill="none" stroke="#d4d4d4" stroke-width="1.189" stroke-linecap="square" stroke-linejoin="miter"/>
<path transform="translate(53.12,745.40) scale(1.0667,1.0000)" d="M0.9,3 Q1.1,0.5 3,0.5 Q5.1,0.5 5.1,3.2 Q5.1,5.6 3.2,8 L0.9,13.3 H5.3" fill="none" stroke="#d4d4d4" stroke-width="1.3" vector-effect="non-scaling-stroke" stroke-linejoin="round"/>
<path transform="translate(62.79,745.40) scale(1.0667,1.0000)" d="M5,0.5 H1.3 L1.1,6.3 Q1.9,5.2 3,5.2 Q5.1,5.2 5.1,9.3 Q5.1,13.5 3,13.5 Q1.3,13.5 0.8,11.8" fill="none" stroke="#d4d4d4" stroke-width="1.3" vector-effect="non-scaling-stroke" stroke-linejoin="round"/>
<path transform="translate(72.46,745.40) scale(1.0667,1.0000)" d="M5.3,0 L0.7,14" fill="none" stroke="#d4d4d4" stroke-width="1.3" vector-effect="non-scaling-stroke" stroke-linejoin="round"/>
<path transform="translate(82.13,745.40) scale(1.0667,1.0000)" d="M1.4,2.6 Q2.6,1.8 3.2,0.5 V13.5" fill="none" stroke="#d4d4d4" stroke-width="1.3" vector-effect="non-scaling-stroke" stroke-linejoin="round"/>
<path transform="translate(91.80,745.40) scale(1.0667,1.0000)" d="M0.9,3 Q1.1,0.5 3,0.5 Q5.1,0.5 5.1,3.2 Q5.1,5.6 3.2,8 L0.9,13.3 H5.3" fill="none" stroke="#d4d4d4" stroke-width="1.3" vector-effect="non-scaling-stroke" stroke-linejoin="round"/>
<path transform="translate(111.14,745.40) scale(1.0667,1.0000)" d="M1.4,2.6 Q2.6,1.8 3.2,0.5 V13.5" fill="none" stroke="#d4d4d4" stroke-width="1.3" vector-effect="non-scaling-stroke" stroke-linejoin="round"/>
<path transform="translate(120.81,745.40) scale(1.0667,1.0000)" d="M3.9,13.5 V0.5 L0.6,9.6 H5.6" fill="none" stroke="#d4d4d4" stroke-width="1.3" vector-effect="non-scaling-stroke" stroke-linejoin="round"/>
<path transform="translate(130.47,745.40) scale(1.0667,1.0000)" d="M2.9,12 V13.8 L1.9,15.6" fill="none" stroke="#d4d4d4" stroke-width="1.3" vector-effect="non-scaling-stroke" stroke-linejoin="round"/>
<path transform="translate(140.14,745.40) scale(1.0667,1.0000)" d="M0.9,3 Q1.1,0.5 3,0.5 Q5.1,0.5 5.1,3.2 Q5.1,5.6 3.2,8 L0.9,13.3 H5.3" fill="none" stroke="#d4d4d4" stroke-width="1.3" vector-effect="non-scaling-stroke" stroke-linejoin="round"/>
<path transform="translate(149.81,745.40) scale(1.0667,1.0000)" d="M3.9,13.5 V0.5 L0.6,9.6 H5.6" fill="none" stroke="#d4d4d4" stroke-width="1.3" vector-effect="non-scaling-stroke" stroke-linejoin="round"/>
<path transform="translate(159.48,745.40) scale(1.0667,1.0000)" d="M4.9,2.3 Q4.4,0.5 3,0.5 Q1,0.5 1,4 V10.6 Q1,13.5 3,13.5 Q5,13.5 5,10.2 Q5,6.6 3,6.6 Q1.6,6.6 1,8.4" fill="none" stroke="#d4d4d4" stroke-width="1.3" vector-effect="non-scaling-stroke" stroke-linejoin="round"/>
<path d="M172.18999999999994,747.9 L182.18999999999994,758.3000000000001 M182.18999999999994,747.9 L172.18999999999994,758.3000000000001" stroke="#d4d4d4" stroke-width="1.3"/>
<path transform="translate(188.49,745.40) scale(1.0667,1.0000)" d="M1.4,2.6 Q2.6,1.8 3.2,0.5 V13.5" fill="none" stroke="#d4d4d4" stroke-width="1.3" vector-effect="non-scaling-stroke" stroke-linejoin="round"/>
<rect x="199.86" y="756.50" width="3.0" height="3.0" fill="#d4d4d4"/>
<path transform="translate(207.83,745.40) scale(1.0667,1.0000)" d="M1,2.6 Q1,0.5 3,0.5 Q5,0.5 5,2.6 V11.4 Q5,13.5 3,13.5 Q1,13.5 1,11.4 Z" fill="none" stroke="#d4d4d4" stroke-width="1.3" vector-effect="non-scaling-stroke" stroke-linejoin="round"/>
<path transform="translate(217.50,745.40) scale(1.0667,1.0000)" d="M1,2.6 Q1,0.5 3,0.5 Q5,0.5 5,2.6 V11.4 Q5,13.5 3,13.5 Q1,13.5 1,11.4 Z" fill="none" stroke="#d4d4d4" stroke-width="1.3" vector-effect="non-scaling-stroke" stroke-linejoin="round"/>
<path transform="translate(227.17,745.40) scale(1.0667,1.0000)" d="M1.6,-0.5 H4 V14.5 H1.6" fill="none" stroke="#d4d4d4" stroke-width="1.3" vector-effect="non-scaling-stroke" stroke-linejoin="round"/>
<path d="M238.87999999999988,752.4 H250.87999999999988" stroke="#d4d4d4" stroke-width="1.5"/>
<path transform="translate(256.18,745.40) scale(1.0667,1.0000)" d="M4.4,-0.5 H2 V14.5 H4.4" fill="none" stroke="#d4d4d4" stroke-width="1.3" vector-effect="non-scaling-stroke" stroke-linejoin="round"/>
<path transform="translate(265.14,743.80) scale(1.0938)" d="M8.5,0.8 L7.2,3 M3,3.5 H13 V14.8 M3,3.5 V14.8 M3,9 H13 M3,14.3 H13" fill="none" stroke="#d4d4d4" stroke-width="1.189" stroke-linecap="square" stroke-linejoin="miter"/>
<path transform="translate(284.48,743.80) scale(1.0938)" d="M8,1 L1,7 M8,1 L15,7 M4.5,7.5 H11.5 M3,10.5 H13 M8,7.5 V14.5 M5,11.5 L6,13.5 M11,11.5 L10,13.5 M1.5,14.5 H14.5" fill="none" stroke="#d4d4d4" stroke-width="1.189" stroke-linecap="square" stroke-linejoin="miter"/>
<path transform="translate(314.20,745.40) scale(1.0667,1.0000)" d="M0.9,3 Q1.1,0.5 3,0.5 Q5.1,0.5 5.1,3.2 Q5.1,5.6 3.2,8 L0.9,13.3 H5.3" fill="none" stroke="#d4d4d4" stroke-width="1.3" vector-effect="non-scaling-stroke" stroke-linejoin="round"/>
<path transform="translate(323.87,745.40) scale(1.0667,1.0000)" d="M5,0.5 H1.3 L1.1,6.3 Q1.9,5.2 3,5.2 Q5.1,5.2 5.1,9.3 Q5.1,13.5 3,13.5 Q1.3,13.5 0.8,11.8" fill="none" stroke="#d4d4d4" stroke-width="1.3" vector-effect="non-scaling-stroke" stroke-linejoin="round"/>
<path transform="translate(333.54,745.40) scale(1.0667,1.0000)" d="M5.3,0 L0.7,14" fill="none" stroke="#d4d4d4" stroke-width="1.3" vector-effect="non-scaling-stroke" stroke-linejoin="round"/>
<path transform="translate(343.21,745.40) scale(1.0667,1.0000)" d="M1.4,2.6 Q2.6,1.8 3.2,0.5 V13.5" fill="none" stroke="#d4d4d4" stroke-width="1.3" vector-effect="non-scaling-stroke" stroke-linejoin="round"/>
<path transform="translate(352.88,745.40) scale(1.0667,1.0000)" d="M0.9,3 Q1.1,0.5 3,0.5 Q5.1,0.5 5.1,3.2 Q5.1,5.6 3.2,8 L0.9,13.3 H5.3" fill="none" stroke="#d4d4d4" stroke-width="1.3" vector-effect="non-scaling-stroke" stroke-linejoin="round"/>
<path transform="translate(372.22,745.40) scale(1.0667,1.0000)" d="M3.9,13.5 V0.5 L0.6,9.6 H5.6" fill="none" stroke="#d4d4d4" stroke-width="1.3" vector-effect="non-scaling-stroke" stroke-linejoin="round"/>
<path transform="translate(381.89,745.40) scale(1.0667,1.0000)" d="M2.9,12 V13.8 L1.9,15.6" fill="none" stroke="#d4d4d4" stroke-width="1.3" vector-effect="non-scaling-stroke" stroke-linejoin="round"/>
<path transform="translate(391.56,745.40) scale(1.0667,1.0000)" d="M4.9,2.3 Q4.4,0.5 3,0.5 Q1,0.5 1,4 V10.6 Q1,13.5 3,13.5 Q5,13.5 5,10.2 Q5,6.6 3,6.6 Q1.6,6.6 1,8.4" fill="none" stroke="#d4d4d4" stroke-width="1.3" vector-effect="non-scaling-stroke" stroke-linejoin="round"/>
<path transform="translate(401.24,745.40) scale(1.0667,1.0000)" d="M0.8,0.5 H5.2 Q3.6,5 2.6,13.5" fill="none" stroke="#d4d4d4" stroke-width="1.3" vector-effect="non-scaling-stroke" stroke-linejoin="round"/>
<path transform="translate(410.91,745.40) scale(1.0667,1.0000)" d="M1.4,2.6 Q2.6,1.8 3.2,0.5 V13.5" fill="none" stroke="#d4d4d4" stroke-width="1.3" vector-effect="non-scaling-stroke" stroke-linejoin="round"/>
<path d="M423.61000000000007,747.9 L433.61000000000007,758.3000000000001 M433.61000000000007,747.9 L423.61000000000007,758.3000000000001" stroke="#d4d4d4" stroke-width="1.3"/>
<path transform="translate(439.92,745.40) scale(1.0667,1.0000)" d="M1.4,2.6 Q2.6,1.8 3.2,0.5 V13.5" fill="none" stroke="#d4d4d4" stroke-width="1.3" vector-effect="non-scaling-stroke" stroke-linejoin="round"/>
<rect x="451.29" y="756.50" width="3.0" height="3.0" fill="#d4d4d4"/>
<path transform="translate(459.26,745.40) scale(1.0667,1.0000)" d="M1,2.6 Q1,0.5 3,0.5 Q5,0.5 5,2.6 V11.4 Q5,13.5 3,13.5 Q1,13.5 1,11.4 Z" fill="none" stroke="#d4d4d4" stroke-width="1.3" vector-effect="non-scaling-stroke" stroke-linejoin="round"/>
<path transform="translate(468.93,745.40) scale(1.0667,1.0000)" d="M1,2.6 Q1,0.5 3,0.5 Q5,0.5 5,2.6 V11.4 Q5,13.5 3,13.5 Q1,13.5 1,11.4 Z" fill="none" stroke="#d4d4d4" stroke-width="1.3" vector-effect="non-scaling-stroke" stroke-linejoin="round"/>
<path transform="translate(478.60,745.40) scale(1.0667,1.0000)" d="M1.6,-0.5 H4 V14.5 H1.6" fill="none" stroke="#d4d4d4" stroke-width="1.3" vector-effect="non-scaling-stroke" stroke-linejoin="round"/>
<path transform="translate(497.22,743.80) scale(1.0938)" d="M4.5,1 L1.7,5.3 L5.2,5.3 M6,3.5 L1.5,10 L7,9.2 M4,9.2 V15 M2,11 L1,14 M6,11 L7,13.5 M10,1 Q9,4 7.5,5.5 M10,2.5 H14 Q12,6.5 8.5,8.8 M10.3,4.5 Q12,7 15.3,8.5 M11,10 L12.8,11.2 M10,12.5 L13,14.6" fill="none" stroke="#d4d4d4" stroke-width="1.189" stroke-linecap="square" stroke-linejoin="miter"/>
<path transform="translate(516.56,743.80) scale(1.0938)" d="M4,1 L1,7.5 M3,5 V15 M6,3 H15.5 M10.5,1 V5 M8,5 H13.5 V12 H8 Z M8,7.4 H13.5 M8,9.7 H13.5 M6.5,5 V14.6 H15.5" fill="none" stroke="#d4d4d4" stroke-width="1.189" stroke-linecap="square" stroke-linejoin="miter"/>
<path transform="translate(545.57,743.80) scale(1.0938)" d="M1,3 H5 V13 H1 Z M1,8 H5 M7,3.5 H15 M11,1 V6 M8,6 H14 M6.5,9 H15.5 M12.5,7 V14 Q12.5,15 10.5,15 M8.3,11 L9.5,12.8" fill="none" stroke="#d4d4d4" stroke-width="1.189" stroke-linecap="square" stroke-linejoin="miter"/>
<path transform="translate(564.91,743.80) scale(1.0938)" d="M4.8,0.8 V2.5 M1,3 H9 M5.5,3.2 L2,7.5 L7.5,7 M7.5,5.2 L1.5,13.5 M4,10.5 L8.5,14.5 M11,3.5 V11 M14.5,1 V14 Q14.5,15 12.8,15" fill="none" stroke="#d4d4d4" stroke-width="1.189" stroke-linecap="square" stroke-linejoin="miter"/>
<rect x="586.67" y="747.90" width="3.0" height="3.0" fill="#d4d4d4"/><rect x="586.67" y="755.10" width="3.0" height="3.0" fill="#d4d4d4"/>
<path transform="translate(594.64,745.40) scale(1.0667,1.0000)" d="M1,2.6 Q1,0.5 3,0.5 Q5,0.5 5,2.6 V11.4 Q5,13.5 3,13.5 Q1,13.5 1,11.4 Z" fill="none" stroke="#d4d4d4" stroke-width="1.3" vector-effect="non-scaling-stroke" stroke-linejoin="round"/>
<path transform="translate(604.31,745.40) scale(1.0667,1.0000)" d="M4.9,2.3 Q4.4,0.5 3,0.5 Q1,0.5 1,4 V10.6 Q1,13.5 3,13.5 Q5,13.5 5,10.2 Q5,6.6 3,6.6 Q1.6,6.6 1,8.4" fill="none" stroke="#d4d4d4" stroke-width="1.3" vector-effect="non-scaling-stroke" stroke-linejoin="round"/>
<rect x="615.68" y="747.90" width="3.0" height="3.0" fill="#d4d4d4"/><rect x="615.68" y="755.10" width="3.0" height="3.0" fill="#d4d4d4"/>
<path transform="translate(623.64,745.40) scale(1.0667,1.0000)" d="M1,2.6 Q1,0.5 3,0.5 Q5,0.5 5,2.6 V11.4 Q5,13.5 3,13.5 Q1,13.5 1,11.4 Z" fill="none" stroke="#d4d4d4" stroke-width="1.3" vector-effect="non-scaling-stroke" stroke-linejoin="round"/>
<path transform="translate(633.31,745.40) scale(1.0667,1.0000)" d="M1,2.6 Q1,0.5 3,0.5 Q5,0.5 5,2.6 V11.4 Q5,13.5 3,13.5 Q1,13.5 1,11.4 Z" fill="none" stroke="#d4d4d4" stroke-width="1.3" vector-effect="non-scaling-stroke" stroke-linejoin="round"/>
<path transform="translate(652.65,745.40) scale(1.0667,1.0000)" d="M1.1,11.7 Q1.6,13.5 3,13.5 Q5,13.5 5,10 V3.4 Q5,0.5 3,0.5 Q1,0.5 1,3.8 Q1,7.4 3,7.4 Q4.4,7.4 5,5.6" fill="none" stroke="#d4d4d4" stroke-width="1.3" vector-effect="non-scaling-stroke" stroke-linejoin="round"/>
<path transform="translate(662.32,745.40) scale(1.0667,1.0000)" d="M2.9,12 V13.8 L1.9,15.6" fill="none" stroke="#d4d4d4" stroke-width="1.3" vector-effect="non-scaling-stroke" stroke-linejoin="round"/>
<path transform="translate(671.99,745.40) scale(1.0667,1.0000)" d="M5,0.5 H1.3 L1.1,6.3 Q1.9,5.2 3,5.2 Q5.1,5.2 5.1,9.3 Q5.1,13.5 3,13.5 Q1.3,13.5 0.8,11.8" fill="none" stroke="#d4d4d4" stroke-width="1.3" vector-effect="non-scaling-stroke" stroke-linejoin="round"/>
<path transform="translate(681.66,745.40) scale(1.0667,1.0000)" d="M0.8,0.5 H5.2 Q3.6,5 2.6,13.5" fill="none" stroke="#d4d4d4" stroke-width="1.3" vector-effect="non-scaling-stroke" stroke-linejoin="round"/>
<path transform="translate(691.33,745.40) scale(1.0667,1.0000)" d="M5,0.5 H1.3 L1.1,6.3 Q1.9,5.2 3,5.2 Q5.1,5.2 5.1,9.3 Q5.1,13.5 3,13.5 Q1.3,13.5 0.8,11.8" fill="none" stroke="#d4d4d4" stroke-width="1.3" vector-effect="non-scaling-stroke" stroke-linejoin="round"/>
<g stroke="#c4c4c4" stroke-width="1.6" stroke-dasharray="1.53 1.53" fill="none">
<line x1="27.2" y1="742" x2="27.2" y2="1046.5"/>
<line x1="110.0" y1="742" x2="110.0" y2="1046.5"/>
<line x1="178.9" y1="742" x2="178.9" y2="1046.5"/>
<line x1="180.7" y1="742" x2="180.7" y2="1046.5"/>
<line x1="203.8" y1="742" x2="203.8" y2="1046.5"/>
<line x1="299.2" y1="742" x2="299.2" y2="1046.5"/>
<line x1="393.0" y1="742" x2="393.0" y2="1046.5"/>
<line x1="488.1" y1="742" x2="488.1" y2="1046.5"/>
<line x1="583.5" y1="742" x2="583.5" y2="1046.5"/>
<line x1="677.3" y1="742" x2="677.3" y2="1046.5"/>
<line x1="763.3" y1="742" x2="763.3" y2="1046.5"/>
<line x1="827.4" y1="742" x2="827.4" y2="1046.5"/>
<line x1="922.8" y1="742" x2="922.8" y2="1046.5"/>
<line x1="1014.9" y1="742" x2="1014.9" y2="1046.5"/>
<line x1="1103.9" y1="742" x2="1103.9" y2="1046.5"/>
<line x1="1188.3" y1="742" x2="1188.3" y2="1046.5"/>
<line x1="1282.1" y1="742" x2="1282.1" y2="1046.5"/>
<line x1="1377.5" y1="742" x2="1377.5" y2="1046.5"/>
<line x1="1471.3" y1="742" x2="1471.3" y2="1046.5"/>
<line x1="1563.2" y1="742" x2="1563.2" y2="1046.5"/>
<line x1="1652.5" y1="742" x2="1652.5" y2="1046.5"/>
<line x1="1735.3" y1="742" x2="1735.3" y2="1046.5"/>
<line x1="1791.5" y1="742" x2="1791.5" y2="1046.5"/>
<line x1="1843.1" y1="742" x2="1843.1" y2="1046.5"/>
<line x1="1898.0" y1="742" x2="1898.0" y2="1046.5"/>
<line x1="11.5" y1="750.4" x2="1905.5" y2="750.4"/>
<line x1="11.5" y1="837.8" x2="1905.5" y2="837.8"/>
<line x1="11.5" y1="925.3" x2="1905.5" y2="925.3"/>
<line x1="11.5" y1="1014.5" x2="1905.5" y2="1014.5"/>
</g>
<clipPath id="cp2"><rect x="11" y="741" width="1895" height="306"/></clipPath>
<rect x="9" y="71" width="1992" height="3.6" fill="#f4f4f4"/>
<g clip-path="url(#cp0)">
<rect x="13.1" y="138.0" width="2.1" height="7.7" fill="#1e90ff"/>
<rect x="15.9" y="139.9" width="2.1" height="10.9" fill="#1e90ff"/>
<rect x="18.7" y="147.2" width="2.1" height="2.6" fill="#ff0000"/>
<rect x="20.8" y="144.7" width="2.1" height="6.8" fill="#ff0000"/>
<rect x="23.6" y="139.6" width="2.1" height="12.6" fill="#1e90ff"/>
<rect x="25.4" y="147.5" width="2.1" height="8.7" fill="#1e90ff"/>
<rect x="27.3" y="149.7" width="2.1" height="7.5" fill="#ff0000"/>
<rect x="29.2" y="150.1" width="2.1" height="8.0" fill="#ff0000"/>
<rect x="31.4" y="147.0" width="2.1" height="6.8" fill="#ff0000"/>
<rect x="33.3" y="147.9" width="2.1" height="5.0" fill="#ff0000"/>
<rect x="35.3" y="148.0" width="2.1" height="4.4" fill="#ff0000"/>
<rect x="37.6" y="141.7" width="2.1" height="11.4" fill="#1e90ff"/>
<rect x="39.6" y="148.4" width="2.1" height="3.9" fill="#ff0000"/>
<rect x="41.7" y="149.6" width="2.1" height="20.8" fill="#1e90ff"/>
<rect x="43.9" y="162.7" width="2.1" height="8.5" fill="#1e90ff"/>
<rect x="45.8" y="166.9" width="2.1" height="8.4" fill="#1e90ff"/>
<rect x="48.4" y="161.5" width="2.1" height="12.4" fill="#ff0000"/>
<rect x="50.9" y="153.7" width="2.1" height="11.5" fill="#ff0000"/>
<rect x="53.6" y="146.8" width="2.1" height="11.2" fill="#ff0000"/>
<rect x="56.4" y="145.1" width="2" height="5.0" fill="#eee27a"/>
<rect x="59.0" y="144.2" width="2" height="3.6" fill="#eee27a"/>
<rect x="61.5" y="142.4" width="2" height="3.7" fill="#eee27a"/>
<rect x="63.4" y="142.0" width="2.6" height="2" fill="#eee27a"/>
<rect x="65.7" y="142.9" width="2.6" height="2" fill="#eee27a"/>
<rect x="70.1" y="142.0" width="2" height="3.5" fill="#eee27a"/>
<rect x="72.8" y="143.1" width="2" height="3.6" fill="#eee27a"/>
<rect x="75.7" y="142.8" width="2.6" height="2" fill="#eee27a"/>
<rect x="78.2" y="138.7" width="2" height="5.5" fill="#eee27a"/>
<rect x="80.9" y="137.5" width="2.6" height="2" fill="#eee27a"/>
<rect x="83.1" y="136.1" width="2.6" height="2" fill="#eee27a"/>
<rect x="85.5" y="137.3" width="2.6" height="2" fill="#eee27a"/>
<rect x="87.9" y="137.5" width="2.6" height="2" fill="#eee27a"/>
<rect x="90.1" y="137.4" width="2" height="3.1" fill="#eee27a"/>
<rect x="92.9" y="136.0" width="2.6" height="2" fill="#eee27a"/>
<rect x="95.7" y="133.2" width="2.6" height="2" fill="#eee27a"/>
<rect x="97.8" y="130.6" width="2.6" height="2" fill="#eee27a"/>
<rect x="100.3" y="124.6" width="2" height="6.6" fill="#eee27a"/>
<rect x="105.0" y="121.9" width="2.6" height="2" fill="#eee27a"/>
<rect x="107.4" y="119.0" width="2" height="4.2" fill="#eee27a"/>
<rect x="112.0" y="116.5" width="2.1" height="4.7" fill="#ff0000"/>
<rect x="114.5" y="115.9" width="2.1" height="4.2" fill="#ff0000"/>
<rect x="118.4" y="113.8" width="2.1" height="8.9" fill="#1e90ff"/>
<rect x="120.5" y="118.0" width="2.1" height="3.8" fill="#ff0000"/>
<rect x="123.4" y="116.7" width="2.1" height="5.2" fill="#ff0000"/>
<rect x="125.6" y="117.8" width="2" height="4.3" fill="#eee27a"/>
<rect x="128.2" y="117.4" width="2.6" height="2" fill="#eee27a"/>
<rect x="130.1" y="115.8" width="2" height="3.7" fill="#eee27a"/>
<rect x="132.6" y="115.8" width="2" height="4.0" fill="#eee27a"/>
<rect x="134.6" y="117.0" width="2" height="4.2" fill="#eee27a"/>
<rect x="137.1" y="117.3" width="2" height="4.7" fill="#eee27a"/>
<rect x="139.1" y="115.0" width="2.6" height="2" fill="#eee27a"/>
<rect x="141.5" y="111.5" width="2" height="5.7" fill="#eee27a"/>
<rect x="143.8" y="107.4" width="2.1" height="6.2" fill="#ff0000"/>
<rect x="146.1" y="102.1" width="2.1" height="7.4" fill="#ff0000"/>
<rect x="148.0" y="104.2" width="2.6" height="2" fill="#eee27a"/>
<rect x="150.3" y="100.3" width="2" height="5.9" fill="#eee27a"/>
<rect x="154.2" y="97.1" width="2.1" height="8.0" fill="#1e90ff"/>
<rect x="156.9" y="105.0" width="2.6" height="2" fill="#eee27a"/>
<rect x="158.8" y="108.1" width="2.6" height="2" fill="#eee27a"/>
<rect x="160.9" y="109.6" width="2" height="4.8" fill="#eee27a"/>
<rect x="163.4" y="110.0" width="2.1" height="6.2" fill="#1e90ff"/>
<rect x="165.5" y="112.3" width="2.6" height="2" fill="#eee27a"/>
<rect x="167.4" y="112.2" width="2" height="3.7" fill="#eee27a"/>
<rect x="169.9" y="112.9" width="2" height="3.1" fill="#eee27a"/>
<rect x="171.8" y="113.0" width="2.6" height="2" fill="#eee27a"/>
<rect x="174.1" y="112.7" width="2.6" height="2" fill="#eee27a"/>
<rect x="178.9" y="111.3" width="2.1" height="20.1" fill="#1e90ff"/>
<rect x="181.5" y="128.8" width="2.1" height="13.5" fill="#1e90ff"/>
<rect x="183.5" y="131.7" width="2.1" height="12.7" fill="#1e90ff"/>
<rect x="186.2" y="128.0" width="2.1" height="7.3" fill="#ff0000"/>
<rect x="188.6" y="120.4" width="2.1" height="9.8" fill="#ff0000"/>
<rect x="190.9" y="120.2" width="2.1" height="6.0" fill="#ff0000"/>
<rect x="193.3" y="118.8" width="2" height="4.6" fill="#eee27a"/>
<rect x="195.9" y="116.7" width="2.1" height="6.9" fill="#1e90ff"/>
<rect x="198.7" y="117.4" width="2.1" height="6.3" fill="#ff0000"/>
<rect x="201.5" y="113.3" width="2.1" height="8.2" fill="#1e90ff"/>
<rect x="204.0" y="113.0" width="2.1" height="5.9" fill="#ff0000"/>
<rect x="206.1" y="111.2" width="2.1" height="10.9" fill="#1e90ff"/>
<rect x="208.9" y="109.7" width="2.1" height="4.3" fill="#ff0000"/>
<rect x="211.7" y="106.6" width="2.1" height="4.3" fill="#ff0000"/>
<rect x="214.2" y="104.8" width="2.1" height="5.4" fill="#1e90ff"/>
<rect x="216.7" y="107.7" width="2.1" height="3.4" fill="#1e90ff"/>
<rect x="218.7" y="106.8" width="2.1" height="6.2" fill="#1e90ff"/>
<rect x="221.5" y="110.7" width="2.1" height="3.9" fill="#ff0000"/>
<rect x="223.8" y="109.3" width="2.1" height="4.7" fill="#ff0000"/>
<rect x="226.0" y="107.3" width="2.1" height="7.2" fill="#1e90ff"/>
<rect x="228.0" y="105.6" width="2.1" height="5.6" fill="#ff0000"/>
<rect x="230.6" y="101.9" width="2.1" height="5.4" fill="#ff0000"/>
<rect x="233.2" y="96.5" width="2.1" height="7.2" fill="#ff0000"/>
<rect x="235.1" y="96.5" width="2.1" height="5.4" fill="#ff0000"/>
<rect x="237.3" y="91.8" width="2.1" height="5.9" fill="#ff0000"/>
<rect x="240.2" y="88.0" width="2.1" height="7.9" fill="#ff0000"/>
<rect x="242.7" y="85.6" width="2.1" height="6.7" fill="#ff0000"/>
<rect x="244.9" y="88.5" width="2.1" height="9.0" fill="#1e90ff"/>
<rect x="247.0" y="91.6" width="2.1" height="4.9" fill="#1e90ff"/>
<rect x="248.9" y="93.0" width="2.1" height="10.1" fill="#ff0000"/>
<rect x="250.9" y="98.6" width="2" height="5.8" fill="#eee27a"/>
<rect x="253.1" y="99.9" width="2.1" height="3.6" fill="#1e90ff"/>
<rect x="255.3" y="100.2" width="2.1" height="5.6" fill="#1e90ff"/>
<rect x="257.9" y="103.6" width="2" height="6.8" fill="#eee27a"/>
<rect x="260.6" y="107.9" width="2.1" height="4.4" fill="#1e90ff"/>
<rect x="263.1" y="108.2" width="2.1" height="6.9" fill="#1e90ff"/>
<rect x="265.1" y="108.9" width="2.1" height="5.0" fill="#1e90ff"/>
<rect x="267.5" y="104.9" width="2.1" height="7.7" fill="#1e90ff"/>
<rect x="269.5" y="109.0" width="2.1" height="4.7" fill="#1e90ff"/>
<rect x="271.8" y="107.5" width="2.1" height="5.0" fill="#ff0000"/>
<rect x="273.6" y="111.2" width="2.6" height="2" fill="#eee27a"/>
<rect x="276.1" y="110.8" width="2.1" height="7.7" fill="#ff0000"/>
<rect x="278.0" y="111.3" width="2.1" height="6.4" fill="#ff0000"/>
<rect x="280.6" y="106.3" width="2.1" height="7.8" fill="#ff0000"/>
<rect x="282.7" y="108.7" width="2.1" height="4.8" fill="#ff0000"/>
<rect x="285.2" y="106.7" width="2.1" height="5.5" fill="#ff0000"/>
<rect x="287.3" y="107.0" width="2.1" height="8.5" fill="#1e90ff"/>
<rect x="289.5" y="108.7" width="2.1" height="7.6" fill="#1e90ff"/>
<rect x="291.4" y="111.2" width="2.1" height="5.2" fill="#1e90ff"/>
<rect x="293.7" y="111.9" width="2.1" height="5.7" fill="#ff0000"/>
<rect x="295.9" y="104.8" width="2.1" height="11.0" fill="#ff0000"/>
<rect x="297.9" y="104.0" width="2.1" height="6.9" fill="#ff0000"/>
<rect x="300.7" y="106.7" width="2.1" height="12.4" fill="#1e90ff"/>
<rect x="303.0" y="113.1" width="2.1" height="12.9" fill="#1e90ff"/>
<rect x="305.5" y="121.6" width="2.1" height="11.0" fill="#ff0000"/>
<rect x="307.8" y="127.6" width="2.1" height="15.6" fill="#1e90ff"/>
<rect x="310.3" y="138.6" width="2.1" height="7.5" fill="#ff0000"/>
<rect x="312.2" y="144.2" width="2.1" height="4.5" fill="#1e90ff"/>
<rect x="314.4" y="144.0" width="2.1" height="4.7" fill="#ff0000"/>
<rect x="317.1" y="144.9" width="2.1" height="11.0" fill="#ff0000"/>
<rect x="319.1" y="152.1" width="2.1" height="15.5" fill="#1e90ff"/>
<rect x="321.4" y="154.4" width="2.1" height="12.5" fill="#ff0000"/>
<rect x="323.4" y="149.7" width="2.1" height="9.5" fill="#ff0000"/>
<rect x="325.4" y="143.4" width="2.1" height="10.2" fill="#ff0000"/>
<rect x="327.4" y="139.8" width="2.1" height="6.2" fill="#ff0000"/>
<rect x="330.0" y="138.5" width="2.1" height="4.2" fill="#ff0000"/>
<rect x="332.0" y="134.7" width="2.1" height="6.9" fill="#ff0000"/>
<rect x="334.4" y="134.3" width="2.1" height="7.2" fill="#1e90ff"/>
<rect x="336.9" y="137.9" width="2.1" height="5.2" fill="#ff0000"/>
<rect x="338.8" y="138.2" width="2.1" height="4.4" fill="#1e90ff"/>
<rect x="341.6" y="141.1" width="2.1" height="15.4" fill="#1e90ff"/>
<rect x="344.1" y="153.9" width="2.1" height="20.4" fill="#1e90ff"/>
<rect x="346.7" y="172.9" width="2.1" height="20.2" fill="#1e90ff"/>
<rect x="348.7" y="188.3" width="2.1" height="10.8" fill="#1e90ff"/>
<rect x="350.5" y="193.4" width="2.1" height="13.3" fill="#1e90ff"/>
<rect x="353.3" y="202.5" width="2.1" height="11.5" fill="#1e90ff"/>
<rect x="355.7" y="206.9" width="2.1" height="9.4" fill="#ff0000"/>
<rect x="357.8" y="199.0" width="2.1" height="9.9" fill="#ff0000"/>
<rect x="360.1" y="197.8" width="2.1" height="13.1" fill="#ff0000"/>
<rect x="362.6" y="193.8" width="2.1" height="10.0" fill="#1e90ff"/>
<rect x="364.7" y="187.6" width="2.1" height="10.6" fill="#1e90ff"/>
<rect x="367.2" y="183.4" width="2.1" height="11.1" fill="#ff0000"/>
<rect x="369.4" y="183.7" width="2.1" height="7.1" fill="#ff0000"/>
<rect x="371.8" y="184.5" width="2.1" height="3.1" fill="#1e90ff"/>
<rect x="374.3" y="188.0" width="2.6" height="2" fill="#eee27a"/>
<rect x="376.2" y="188.9" width="2" height="6.8" fill="#eee27a"/>
<rect x="378.6" y="192.4" width="2.1" height="7.1" fill="#ff0000"/>
<rect x="380.5" y="195.3" width="2.1" height="6.6" fill="#1e90ff"/>
<rect x="382.5" y="191.7" width="2.1" height="11.2" fill="#1e90ff"/>
<rect x="384.6" y="187.4" width="2.1" height="9.4" fill="#ff0000"/>
<rect x="386.7" y="181.0" width="2.1" height="9.0" fill="#ff0000"/>
<rect x="388.7" y="181.4" width="2.1" height="2.5" fill="#1e90ff"/>
<rect x="391.4" y="179.0" width="2.1" height="7.0" fill="#ff0000"/>
<rect x="393.3" y="183.4" width="2.1" height="7.7" fill="#1e90ff"/>
<rect x="395.4" y="186.9" width="2.1" height="12.2" fill="#ff0000"/>
<rect x="398.0" y="196.9" width="2.1" height="14.9" fill="#1e90ff"/>
<rect x="400.3" y="208.2" width="2.1" height="11.5" fill="#1e90ff"/>
<rect x="402.8" y="214.2" width="2.1" height="5.6" fill="#1e90ff"/>
<rect x="404.6" y="217.2" width="2.1" height="4.3" fill="#ff0000"/>
<rect x="406.7" y="217.2" width="2.1" height="7.9" fill="#1e90ff"/>
<rect x="409.5" y="219.3" width="2.1" height="3.8" fill="#ff0000"/>
<rect x="411.7" y="217.4" width="2.1" height="7.5" fill="#ff0000"/>
<rect x="413.8" y="214.3" width="2.1" height="9.5" fill="#ff0000"/>
<rect x="416.2" y="208.2" width="2.1" height="7.9" fill="#ff0000"/>
<rect x="418.7" y="205.6" width="2.1" height="7.2" fill="#ff0000"/>
<rect x="421.1" y="201.9" width="2.1" height="9.8" fill="#ff0000"/>
<rect x="422.9" y="198.7" width="2.1" height="9.1" fill="#ff0000"/>
<rect x="425.7" y="195.0" width="2.1" height="6.7" fill="#ff0000"/>
<rect x="427.8" y="190.5" width="2.1" height="8.7" fill="#ff0000"/>
<rect x="430.7" y="187.3" width="2.1" height="7.7" fill="#ff0000"/>
<rect x="433.4" y="174.7" width="2.1" height="16.4" fill="#ff0000"/>
<rect x="436.2" y="176.8" width="2.1" height="9.0" fill="#ff0000"/>
<rect x="439.1" y="174.3" width="2.1" height="5.8" fill="#ff0000"/>
<rect x="441.0" y="177.7" width="2.1" height="5.6" fill="#1e90ff"/>
<rect x="443.7" y="180.5" width="2.1" height="3.6" fill="#ff0000"/>
<rect x="446.4" y="181.7" width="2.1" height="4.6" fill="#1e90ff"/>
<rect x="448.5" y="184.3" width="2.1" height="10.7" fill="#1e90ff"/>
<rect x="451.3" y="192.0" width="2.1" height="14.0" fill="#1e90ff"/>
<rect x="454.0" y="200.2" width="2.1" height="7.6" fill="#ff0000"/>
<rect x="456.1" y="194.7" width="2.1" height="8.4" fill="#ff0000"/>
<rect x="458.8" y="191.0" width="2.1" height="8.4" fill="#ff0000"/>
<rect x="461.3" y="190.5" width="2.6" height="2" fill="#eee27a"/>
<rect x="463.5" y="186.5" width="2.1" height="6.4" fill="#1e90ff"/>
<rect x="465.6" y="179.6" width="2.1" height="7.9" fill="#ff0000"/>
<rect x="468.1" y="168.1" width="2.1" height="13.7" fill="#1e90ff"/>
<rect x="470.4" y="155.7" width="2.1" height="16.3" fill="#ff0000"/>
<rect x="472.6" y="146.8" width="2.1" height="15.1" fill="#1e90ff"/>
<rect x="475.1" y="140.2" width="2.1" height="7.9" fill="#ff0000"/>
<rect x="477.4" y="136.3" width="2.1" height="7.3" fill="#1e90ff"/>
<rect x="480.0" y="128.0" width="2.1" height="11.9" fill="#ff0000"/>
<rect x="482.8" y="135.3" width="2.1" height="6.0" fill="#1e90ff"/>
<rect x="484.7" y="136.1" width="2.1" height="6.3" fill="#1e90ff"/>
<rect x="487.1" y="136.5" width="2.1" height="8.9" fill="#1e90ff"/>
<rect x="489.7" y="139.9" width="2.1" height="6.0" fill="#ff0000"/>
<rect x="491.6" y="141.5" width="2.1" height="7.3" fill="#1e90ff"/>
<rect x="494.5" y="144.7" width="2.1" height="7.0" fill="#1e90ff"/>
<rect x="497.2" y="147.8" width="2.1" height="7.1" fill="#1e90ff"/>
<rect x="499.5" y="150.3" width="2" height="3.1" fill="#eee27a"/>
<rect x="502.0" y="148.2" width="2.1" height="7.3" fill="#ff0000"/>
<rect x="503.9" y="145.7" width="2.1" height="5.5" fill="#ff0000"/>
<rect x="506.5" y="142.2" width="2.1" height="4.8" fill="#ff0000"/>
<rect x="508.6" y="139.6" width="2" height="6.4" fill="#eee27a"/>
<rect x="510.7" y="136.1" width="2.1" height="7.4" fill="#ff0000"/>
<rect x="513.1" y="128.4" width="2.1" height="11.5" fill="#ff0000"/>
<rect x="515.7" y="129.5" width="2.1" height="7.8" fill="#ff0000"/>
<rect x="518.5" y="125.8" width="2.1" height="7.4" fill="#1e90ff"/>
<rect x="520.6" y="125.5" width="2.1" height="9.1" fill="#ff0000"/>
<rect x="522.7" y="124.0" width="2.1" height="5.2" fill="#ff0000"/>
<rect x="525.4" y="123.6" width="2.1" height="4.8" fill="#1e90ff"/>
<rect x="528.3" y="126.7" width="2.1" height="3.3" fill="#ff0000"/>
<rect x="530.6" y="127.1" width="2.1" height="7.1" fill="#1e90ff"/>
<rect x="533.1" y="128.9" width="2.1" height="5.0" fill="#1e90ff"/>
<rect x="535.6" y="132.3" width="2.1" height="7.4" fill="#1e90ff"/>
<rect x="537.8" y="136.8" width="2.1" height="4.6" fill="#1e90ff"/>
<rect x="540.1" y="140.1" width="2.1" height="7.3" fill="#1e90ff"/>
<rect x="542.8" y="146.9" width="2.1" height="12.4" fill="#ff0000"/>
<rect x="545.5" y="156.5" width="2.1" height="6.0" fill="#ff0000"/>
<rect x="548.1" y="159.4" width="2.1" height="3.0" fill="#ff0000"/>
<rect x="550.2" y="160.3" width="2.1" height="6.1" fill="#1e90ff"/>
<rect x="552.9" y="159.6" width="2.1" height="6.2" fill="#ff0000"/>
<rect x="554.8" y="161.4" width="2.1" height="5.7" fill="#ff0000"/>
<rect x="557.4" y="162.6" width="2.1" height="7.7" fill="#1e90ff"/>
<rect x="559.8" y="158.7" width="2.1" height="13.0" fill="#1e90ff"/>
<rect x="562.5" y="167.6" width="2.6" height="2" fill="#eee27a"/>
<rect x="564.5" y="166.1" width="2.1" height="7.9" fill="#1e90ff"/>
<rect x="566.8" y="168.0" width="2.1" height="5.8" fill="#1e90ff"/>
<rect x="569.2" y="168.6" width="2.1" height="6.4" fill="#ff0000"/>
<rect x="571.4" y="164.5" width="2.1" height="9.8" fill="#1e90ff"/>
<rect x="573.8" y="166.5" width="2.6" height="2" fill="#eee27a"/>
<rect x="576.5" y="166.3" width="2.1" height="6.8" fill="#1e90ff"/>
<rect x="579.0" y="170.4" width="2.1" height="6.5" fill="#1e90ff"/>
<rect x="581.0" y="167.6" width="2.1" height="14.3" fill="#1e90ff"/>
<rect x="583.2" y="177.4" width="2.1" height="9.7" fill="#1e90ff"/>
<rect x="586.0" y="181.6" width="2.1" height="7.0" fill="#ff0000"/>
<rect x="588.5" y="184.2" width="2.1" height="8.1" fill="#1e90ff"/>
<rect x="590.9" y="187.2" width="2.1" height="5.5" fill="#1e90ff"/>
<rect x="593.2" y="188.8" width="2.1" height="6.4" fill="#1e90ff"/>
<rect x="595.5" y="190.2" width="2.1" height="7.8" fill="#ff0000"/>
<rect x="598.2" y="192.2" width="2.1" height="6.8" fill="#1e90ff"/>
<rect x="601.0" y="195.7" width="2" height="4.2" fill="#eee27a"/>
<rect x="603.3" y="197.9" width="2.1" height="4.5" fill="#1e90ff"/>
<rect x="605.9" y="199.6" width="2.1" height="6.4" fill="#1e90ff"/>
<rect x="608.6" y="202.1" width="2.6" height="2" fill="#eee27a"/>
<rect x="611.4" y="197.3" width="2.1" height="9.6" fill="#ff0000"/>
<rect x="613.5" y="206.6" width="2.6" height="2" fill="#eee27a"/>
<rect x="616.1" y="206.6" width="2.6" height="2" fill="#eee27a"/>
<rect x="618.2" y="203.6" width="2" height="4.6" fill="#eee27a"/>
<rect x="620.5" y="191.8" width="2.1" height="14.8" fill="#1e90ff"/>
<rect x="622.9" y="201.2" width="2.1" height="3.7" fill="#ff0000"/>
<rect x="625.0" y="202.5" width="2.1" height="4.6" fill="#1e90ff"/>
<rect x="627.9" y="202.9" width="2.6" height="2" fill="#eee27a"/>
<rect x="630.2" y="200.6" width="2.1" height="6.5" fill="#1e90ff"/>
<rect x="632.7" y="203.4" width="2" height="3.2" fill="#eee27a"/>
<rect x="635.1" y="202.3" width="2.1" height="7.0" fill="#1e90ff"/>
<rect x="637.7" y="205.4" width="2" height="4.1" fill="#eee27a"/>
<rect x="639.9" y="204.9" width="2.1" height="5.1" fill="#1e90ff"/>
<rect x="642.6" y="208.1" width="2" height="4.2" fill="#eee27a"/>
<rect x="645.0" y="206.7" width="2.1" height="7.7" fill="#ff0000"/>
<rect x="647.7" y="207.9" width="2.6" height="2" fill="#eee27a"/>
<rect x="650.4" y="204.8" width="2.1" height="5.2" fill="#1e90ff"/>
<rect x="652.6" y="204.6" width="2" height="4.7" fill="#eee27a"/>
<rect x="654.9" y="203.8" width="2" height="4.1" fill="#eee27a"/>
<rect x="657.6" y="203.9" width="2.6" height="2" fill="#eee27a"/>
<rect x="660.1" y="203.1" width="2.1" height="5.4" fill="#1e90ff"/>
<rect x="662.7" y="207.6" width="2.6" height="2" fill="#eee27a"/>
<rect x="665.0" y="207.3" width="2.1" height="7.1" fill="#1e90ff"/>
<rect x="667.3" y="207.8" width="2.1" height="5.0" fill="#ff0000"/>
<rect x="669.6" y="200.0" width="2.1" height="10.7" fill="#ff0000"/>
<rect x="672.4" y="200.4" width="2.1" height="4.6" fill="#ff0000"/>
<rect x="674.5" y="202.4" width="2.1" height="10.4" fill="#1e90ff"/>
<rect x="677.2" y="211.4" width="2.1" height="8.4" fill="#1e90ff"/>
<rect x="679.8" y="217.5" width="2" height="3.5" fill="#eee27a"/>
<rect x="682.1" y="212.1" width="2.1" height="7.3" fill="#ff0000"/>
<rect x="684.4" y="213.1" width="2.6" height="2" fill="#eee27a"/>
<rect x="687.1" y="206.5" width="2.1" height="8.1" fill="#ff0000"/>
<rect x="689.3" y="206.8" width="2.1" height="6.4" fill="#ff0000"/>
<rect x="691.9" y="203.8" width="2" height="5.4" fill="#eee27a"/>
<rect x="694.7" y="201.6" width="2.6" height="2" fill="#eee27a"/>
<rect x="696.7" y="198.2" width="2.1" height="5.0" fill="#ff0000"/>
<rect x="698.8" y="191.1" width="2.1" height="8.3" fill="#ff0000"/>
<rect x="701.5" y="187.4" width="2.1" height="7.4" fill="#ff0000"/>
<rect x="704.1" y="181.8" width="2.1" height="8.9" fill="#ff0000"/>
<rect x="706.1" y="180.2" width="2.1" height="7.5" fill="#ff0000"/>
<rect x="708.0" y="180.2" width="2.1" height="4.9" fill="#1e90ff"/>
<rect x="710.6" y="180.3" width="2.1" height="2.5" fill="#ff0000"/>
<rect x="713.3" y="180.7" width="2.6" height="2" fill="#eee27a"/>
<rect x="715.6" y="179.6" width="2.6" height="2" fill="#eee27a"/>
<rect x="717.6" y="179.2" width="2.6" height="2" fill="#eee27a"/>
<rect x="719.7" y="177.4" width="2.1" height="4.8" fill="#1e90ff"/>
<rect x="721.8" y="181.3" width="2.6" height="2" fill="#eee27a"/>
<rect x="723.8" y="182.9" width="2" height="3.9" fill="#eee27a"/>
<rect x="726.2" y="177.8" width="2.1" height="10.2" fill="#ff0000"/>
<rect x="728.9" y="176.7" width="2.1" height="8.3" fill="#ff0000"/>
<rect x="731.0" y="176.1" width="2.1" height="5.2" fill="#ff0000"/>
<rect x="733.5" y="175.9" width="2" height="5.3" fill="#eee27a"/>
<rect x="736.0" y="177.3" width="2.1" height="13.6" fill="#1e90ff"/>
<rect x="738.7" y="180.5" width="2.1" height="5.7" fill="#1e90ff"/>
<rect x="741.4" y="177.5" width="2.1" height="7.5" fill="#ff0000"/>
<rect x="744.1" y="176.1" width="2.6" height="2" fill="#eee27a"/>
<rect x="746.1" y="171.3" width="2" height="5.9" fill="#eee27a"/>
<rect x="748.4" y="166.9" width="2.1" height="7.1" fill="#1e90ff"/>
<rect x="750.9" y="162.4" width="2.1" height="8.0" fill="#ff0000"/>
<rect x="753.5" y="161.6" width="2.1" height="5.6" fill="#ff0000"/>
<rect x="755.5" y="160.2" width="2.6" height="2" fill="#eee27a"/>
<rect x="758.0" y="152.0" width="2.1" height="7.7" fill="#ff0000"/>
<rect x="760.8" y="149.6" width="2.1" height="8.0" fill="#ff0000"/>
<rect x="762.8" y="149.4" width="2.1" height="8.1" fill="#1e90ff"/>
<rect x="765.2" y="153.5" width="2.1" height="6.6" fill="#1e90ff"/>
<rect x="767.5" y="158.0" width="2.1" height="8.1" fill="#1e90ff"/>
<rect x="770.4" y="162.1" width="2.1" height="9.0" fill="#1e90ff"/>
<rect x="773.1" y="169.0" width="2.1" height="9.6" fill="#ff0000"/>
<rect x="775.5" y="177.4" width="2.6" height="2" fill="#eee27a"/>
<rect x="778.1" y="175.2" width="2.1" height="10.4" fill="#1e90ff"/>
<rect x="780.0" y="180.4" width="2.6" height="2" fill="#eee27a"/>
<rect x="782.8" y="179.5" width="2.6" height="2" fill="#eee27a"/>
<rect x="785.5" y="179.4" width="2.6" height="2" fill="#eee27a"/>
<rect x="787.5" y="176.9" width="2.1" height="6.3" fill="#ff0000"/>
<rect x="790.0" y="178.9" width="2.6" height="2" fill="#eee27a"/>
<rect x="792.8" y="178.2" width="2.6" height="2" fill="#eee27a"/>
<rect x="794.6" y="176.2" width="2.1" height="6.7" fill="#ff0000"/>
<rect x="797.0" y="178.5" width="2.6" height="2" fill="#eee27a"/>
<rect x="799.1" y="176.3" width="2.1" height="9.0" fill="#1e90ff"/>
<rect x="801.6" y="181.9" width="2.1" height="6.8" fill="#1e90ff"/>
<rect x="804.2" y="178.8" width="2.1" height="15.8" fill="#1e90ff"/>
<rect x="807.0" y="189.7" width="2.1" height="7.0" fill="#ff0000"/>
<rect x="809.8" y="178.5" width="2.1" height="16.9" fill="#ff0000"/>
<rect x="812.4" y="178.0" width="2.1" height="9.8" fill="#ff0000"/>
<rect x="814.8" y="178.1" width="2.1" height="7.5" fill="#1e90ff"/>
<rect x="817.4" y="182.1" width="2.1" height="5.7" fill="#1e90ff"/>
<rect x="819.5" y="185.7" width="2.1" height="6.4" fill="#1e90ff"/>
<rect x="822.3" y="188.5" width="2.1" height="7.2" fill="#1e90ff"/>
<rect x="825.1" y="180.4" width="2.1" height="18.2" fill="#ff0000"/>
<rect x="828.0" y="159.2" width="2.1" height="18.8" fill="#ff0000"/>
<rect x="830.6" y="142.2" width="2.1" height="17.7" fill="#ff0000"/>
<rect x="833.1" y="124.5" width="2.1" height="20.0" fill="#ff0000"/>
<rect x="836.0" y="123.9" width="2.1" height="4.9" fill="#ff0000"/>
<rect x="838.6" y="124.2" width="2.1" height="4.7" fill="#1e90ff"/>
<rect x="841.5" y="121.7" width="2.1" height="6.2" fill="#ff0000"/>
<rect x="843.6" y="123.5" width="2.1" height="6.4" fill="#1e90ff"/>
<rect x="845.6" y="125.5" width="2.1" height="6.4" fill="#1e90ff"/>
<rect x="848.4" y="129.8" width="2.1" height="9.1" fill="#1e90ff"/>
<rect x="851.1" y="129.8" width="2.1" height="7.0" fill="#ff0000"/>
<rect x="853.8" y="127.9" width="2.1" height="7.8" fill="#ff0000"/>
<rect x="856.1" y="127.2" width="2.1" height="6.1" fill="#ff0000"/>
<rect x="858.3" y="126.1" width="2.1" height="7.3" fill="#ff0000"/>
<rect x="861.0" y="127.2" width="2.1" height="4.4" fill="#ff0000"/>
<rect x="863.5" y="126.1" width="2.1" height="4.8" fill="#1e90ff"/>
<rect x="866.3" y="124.5" width="2.1" height="2.5" fill="#1e90ff"/>
<rect x="869.1" y="118.2" width="2.1" height="9.5" fill="#1e90ff"/>
<rect x="871.4" y="121.6" width="2.1" height="4.2" fill="#ff0000"/>
<rect x="874.0" y="117.8" width="2.1" height="6.1" fill="#ff0000"/>
<rect x="875.9" y="115.2" width="2.1" height="7.5" fill="#1e90ff"/>
<rect x="878.3" y="119.4" width="2.1" height="2.5" fill="#ff0000"/>
<rect x="880.2" y="116.5" width="2.1" height="11.4" fill="#1e90ff"/>
<rect x="883.0" y="124.3" width="2.1" height="8.8" fill="#ff0000"/>
<rect x="884.9" y="129.2" width="2.1" height="8.6" fill="#1e90ff"/>
<rect x="887.4" y="132.3" width="2.1" height="6.5" fill="#1e90ff"/>
<rect x="889.2" y="134.8" width="2.1" height="6.6" fill="#1e90ff"/>
<rect x="891.2" y="135.1" width="2.1" height="4.8" fill="#ff0000"/>
<rect x="893.9" y="133.5" width="2.1" height="6.9" fill="#ff0000"/>
<rect x="896.6" y="133.7" width="2.1" height="5.0" fill="#ff0000"/>
<rect x="898.5" y="131.8" width="2.1" height="3.5" fill="#ff0000"/>
<rect x="900.6" y="129.9" width="2.1" height="5.5" fill="#ff0000"/>
<rect x="903.1" y="127.7" width="2.1" height="7.4" fill="#ff0000"/>
<rect x="905.9" y="127.4" width="2.1" height="6.3" fill="#1e90ff"/>
<rect x="908.4" y="126.8" width="2.1" height="6.6" fill="#ff0000"/>
<rect x="910.3" y="124.6" width="2.1" height="4.8" fill="#ff0000"/>
<rect x="912.3" y="120.3" width="2.1" height="7.3" fill="#ff0000"/>
<rect x="915.0" y="118.3" width="2.1" height="5.2" fill="#ff0000"/>
<rect x="917.7" y="115.0" width="2.1" height="8.3" fill="#ff0000"/>
<rect x="919.5" y="111.9" width="2.1" height="8.0" fill="#ff0000"/>
<rect x="921.8" y="107.3" width="2.1" height="13.8" fill="#ff0000"/>
<rect x="924.2" y="106.3" width="2.1" height="11.2" fill="#ff0000"/>
<rect x="926.3" y="104.7" width="2.1" height="5.0" fill="#1e90ff"/>
<rect x="928.8" y="107.0" width="2.1" height="4.6" fill="#ff0000"/>
<rect x="931.7" y="110.6" width="2.1" height="5.8" fill="#1e90ff"/>
<rect x="933.9" y="110.5" width="2.1" height="7.1" fill="#1e90ff"/>
<rect x="936.1" y="112.5" width="2.1" height="4.9" fill="#1e90ff"/>
<rect x="938.0" y="113.3" width="2.1" height="4.2" fill="#1e90ff"/>
<rect x="940.0" y="116.3" width="2.6" height="2" fill="#eee27a"/>
<rect x="942.8" y="117.3" width="2.1" height="7.4" fill="#1e90ff"/>
<rect x="944.9" y="121.3" width="2.1" height="6.6" fill="#1e90ff"/>
<rect x="947.6" y="124.7" width="2.1" height="4.3" fill="#ff0000"/>
<rect x="950.2" y="123.3" width="2.1" height="7.0" fill="#1e90ff"/>
<rect x="952.1" y="120.7" width="2.1" height="9.0" fill="#ff0000"/>
<rect x="954.7" y="128.6" width="2.6" height="2" fill="#eee27a"/>
<rect x="957.4" y="126.8" width="2.6" height="2" fill="#eee27a"/>
<rect x="959.5" y="125.7" width="2.6" height="2" fill="#eee27a"/>
<rect x="961.7" y="124.8" width="2.6" height="2" fill="#eee27a"/>
<rect x="964.0" y="123.1" width="2.1" height="12.3" fill="#ff0000"/>
<rect x="966.4" y="124.8" width="2.1" height="6.6" fill="#1e90ff"/>
<rect x="968.9" y="128.6" width="2.1" height="7.0" fill="#1e90ff"/>
<rect x="971.3" y="130.2" width="2.1" height="5.6" fill="#1e90ff"/>
<rect x="973.2" y="133.6" width="2.1" height="4.9" fill="#ff0000"/>
<rect x="975.5" y="133.4" width="2.1" height="5.2" fill="#1e90ff"/>
<rect x="978.2" y="134.4" width="2.1" height="4.1" fill="#1e90ff"/>
<rect x="980.2" y="137.1" width="2.6" height="2" fill="#eee27a"/>
<rect x="982.7" y="136.1" width="2.1" height="4.9" fill="#ff0000"/>
<rect x="985.3" y="138.1" width="2.1" height="3.4" fill="#ff0000"/>
<rect x="988.0" y="134.1" width="2" height="5.4" fill="#eee27a"/>
<rect x="990.3" y="134.9" width="2.1" height="3.5" fill="#1e90ff"/>
<rect x="992.9" y="133.3" width="2.6" height="2" fill="#eee27a"/>
<rect x="995.5" y="131.5" width="2.1" height="4.0" fill="#ff0000"/>
<rect x="998.2" y="129.7" width="2.1" height="6.8" fill="#1e90ff"/>
<rect x="1000.1" y="129.4" width="2.1" height="6.0" fill="#ff0000"/>
<rect x="1002.2" y="128.9" width="2.1" height="5.4" fill="#1e90ff"/>
<rect x="1004.9" y="126.4" width="2.6" height="2" fill="#eee27a"/>
<rect x="1006.9" y="124.2" width="2.6" height="2" fill="#eee27a"/>
<rect x="1009.0" y="118.4" width="2.1" height="6.7" fill="#ff0000"/>
<rect x="1011.0" y="120.8" width="2.1" height="2.5" fill="#1e90ff"/>
<rect x="1013.8" y="120.5" width="2.1" height="6.1" fill="#ff0000"/>
<rect x="1015.9" y="123.5" width="2.1" height="5.1" fill="#ff0000"/>
<rect x="1018.4" y="128.1" width="2.6" height="2" fill="#eee27a"/>
<rect x="1021.0" y="129.6" width="2" height="4.9" fill="#eee27a"/>
<rect x="1023.9" y="131.5" width="2.1" height="7.3" fill="#1e90ff"/>
<rect x="1026.5" y="134.0" width="2" height="5.2" fill="#eee27a"/>
<rect x="1029.3" y="134.2" width="2.1" height="4.2" fill="#1e90ff"/>
<rect x="1031.9" y="129.8" width="2.1" height="6.5" fill="#1e90ff"/>
<rect x="1033.9" y="128.3" width="2.1" height="6.1" fill="#ff0000"/>
<rect x="1036.7" y="128.3" width="2.1" height="11.1" fill="#1e90ff"/>
<rect x="1038.7" y="131.9" width="2.1" height="8.0" fill="#1e90ff"/>
<rect x="1041.4" y="135.6" width="2.6" height="2" fill="#eee27a"/>
<rect x="1044.2" y="135.6" width="2.6" height="2" fill="#eee27a"/>
<rect x="1046.1" y="134.8" width="2.6" height="2" fill="#eee27a"/>
<rect x="1048.7" y="130.9" width="2.1" height="6.6" fill="#ff0000"/>
<rect x="1051.1" y="132.3" width="2" height="3.6" fill="#eee27a"/>
<rect x="1053.5" y="133.7" width="2.6" height="2" fill="#eee27a"/>
<rect x="1055.6" y="134.3" width="2.1" height="4.6" fill="#1e90ff"/>
<rect x="1058.3" y="137.2" width="2.1" height="6.8" fill="#1e90ff"/>
<rect x="1060.2" y="138.8" width="2.1" height="6.6" fill="#ff0000"/>
<rect x="1062.4" y="143.0" width="2.6" height="2" fill="#eee27a"/>
<rect x="1064.9" y="144.0" width="2" height="5.3" fill="#eee27a"/>
<rect x="1067.2" y="146.2" width="2.6" height="2" fill="#eee27a"/>
<rect x="1069.0" y="147.0" width="2.1" height="5.4" fill="#1e90ff"/>
<rect x="1071.7" y="148.6" width="2.1" height="10.9" fill="#1e90ff"/>
<rect x="1074.2" y="154.7" width="2.1" height="9.1" fill="#1e90ff"/>
<rect x="1076.5" y="163.0" width="2.1" height="6.4" fill="#ff0000"/>
<rect x="1079.1" y="160.4" width="2.1" height="10.7" fill="#ff0000"/>
<rect x="1081.2" y="153.4" width="2.1" height="10.5" fill="#ff0000"/>
<rect x="1084.0" y="154.3" width="2.6" height="2" fill="#eee27a"/>
<rect x="1086.1" y="153.6" width="2.1" height="5.7" fill="#ff0000"/>
<rect x="1088.0" y="154.9" width="2.6" height="2" fill="#eee27a"/>
<rect x="1089.9" y="153.4" width="2.6" height="2" fill="#eee27a"/>
<rect x="1091.9" y="152.9" width="2.6" height="2" fill="#eee27a"/>
<rect x="1093.9" y="150.9" width="2.6" height="2" fill="#eee27a"/>
<rect x="1096.5" y="152.2" width="2.6" height="2" fill="#eee27a"/>
<rect x="1099.7" y="153.7" width="2.1" height="3.9" fill="#ff0000"/>
<rect x="1101.8" y="156.0" width="2.6" height="2" fill="#eee27a"/>
<rect x="1106.0" y="155.1" width="2.1" height="6.1" fill="#1e90ff"/>
<rect x="1108.3" y="159.9" width="2.6" height="2" fill="#eee27a"/>
<rect x="1110.4" y="162.8" width="2.6" height="2" fill="#eee27a"/>
<rect x="1112.7" y="162.2" width="2" height="5.8" fill="#eee27a"/>
<rect x="1115.1" y="165.7" width="2" height="6.2" fill="#eee27a"/>
<rect x="1117.2" y="168.8" width="2" height="6.6" fill="#eee27a"/>
<rect x="1119.2" y="171.2" width="2" height="4.8" fill="#eee27a"/>
<rect x="1121.3" y="174.1" width="2.6" height="2" fill="#eee27a"/>
<rect x="1125.6" y="175.6" width="2.1" height="4.8" fill="#1e90ff"/>
<rect x="1127.5" y="178.0" width="2.6" height="2" fill="#eee27a"/>
<rect x="1130.1" y="174.6" width="2.1" height="6.8" fill="#ff0000"/>
<rect x="1132.1" y="172.4" width="2.1" height="7.0" fill="#ff0000"/>
<rect x="1134.5" y="165.3" width="2.1" height="9.3" fill="#ff0000"/>
<rect x="1136.6" y="161.1" width="2.1" height="8.0" fill="#ff0000"/>
<rect x="1139.0" y="156.7" width="2.1" height="15.3" fill="#ff0000"/>
<rect x="1141.3" y="158.9" width="2.6" height="2" fill="#eee27a"/>
<rect x="1143.9" y="151.7" width="2.1" height="7.3" fill="#ff0000"/>
<rect x="1146.1" y="149.4" width="2.1" height="5.0" fill="#ff0000"/>
<rect x="1148.4" y="142.5" width="2.1" height="8.9" fill="#1e90ff"/>
<rect x="1150.5" y="144.3" width="2.1" height="5.1" fill="#1e90ff"/>
<rect x="1152.6" y="144.2" width="2.1" height="6.0" fill="#ff0000"/>
<rect x="1155.4" y="147.7" width="2.6" height="2" fill="#eee27a"/>
<rect x="1157.8" y="149.2" width="2.1" height="5.3" fill="#ff0000"/>
<rect x="1160.3" y="149.9" width="2.1" height="7.6" fill="#1e90ff"/>
<rect x="1162.5" y="154.4" width="2.1" height="7.0" fill="#1e90ff"/>
<rect x="1164.9" y="156.8" width="2.1" height="5.9" fill="#1e90ff"/>
<rect x="1167.1" y="159.5" width="2.1" height="5.6" fill="#1e90ff"/>
<rect x="1169.5" y="163.0" width="2.1" height="6.5" fill="#1e90ff"/>
<rect x="1171.6" y="164.9" width="2.1" height="10.5" fill="#1e90ff"/>
<rect x="1174.0" y="167.7" width="2.1" height="5.4" fill="#1e90ff"/>
<rect x="1176.7" y="170.5" width="2.1" height="4.2" fill="#1e90ff"/>
<rect x="1179.3" y="162.3" width="2.1" height="13.1" fill="#ff0000"/>
<rect x="1181.4" y="164.8" width="2.1" height="7.8" fill="#1e90ff"/>
<rect x="1183.9" y="160.0" width="2.1" height="7.1" fill="#ff0000"/>
<rect x="1185.9" y="161.3" width="2.1" height="4.6" fill="#ff0000"/>
<rect x="1188.2" y="155.4" width="2.1" height="8.4" fill="#ff0000"/>
<rect x="1190.9" y="156.0" width="2.1" height="9.3" fill="#1e90ff"/>
<rect x="1193.7" y="164.3" width="2.1" height="10.3" fill="#1e90ff"/>
<rect x="1195.8" y="168.6" width="2.1" height="8.8" fill="#1e90ff"/>
<rect x="1198.2" y="176.4" width="2.1" height="7.8" fill="#1e90ff"/>
<rect x="1201.0" y="180.8" width="2.1" height="12.2" fill="#1e90ff"/>
<rect x="1203.9" y="183.7" width="2.1" height="8.9" fill="#1e90ff"/>
<rect x="1206.1" y="184.9" width="2.1" height="14.9" fill="#1e90ff"/>
<rect x="1208.5" y="194.1" width="2.1" height="7.1" fill="#1e90ff"/>
<rect x="1211.1" y="197.7" width="2.1" height="3.3" fill="#ff0000"/>
<rect x="1213.3" y="196.3" width="2.1" height="3.6" fill="#ff0000"/>
<rect x="1215.3" y="192.7" width="2.1" height="4.5" fill="#ff0000"/>
<rect x="1217.5" y="193.5" width="2.1" height="3.2" fill="#ff0000"/>
<rect x="1220.1" y="191.7" width="2.1" height="9.3" fill="#1e90ff"/>
<rect x="1222.4" y="196.0" width="2.1" height="5.7" fill="#ff0000"/>
<rect x="1225.2" y="201.5" width="2.1" height="51.1" fill="#1e90ff"/>
<rect x="1227.1" y="245.3" width="2.1" height="6.2" fill="#1e90ff"/>
<rect x="1229.7" y="242.0" width="2.1" height="6.7" fill="#ff0000"/>
<rect x="1232.5" y="235.8" width="2.1" height="10.7" fill="#ff0000"/>
<rect x="1235.3" y="231.6" width="2.1" height="4.9" fill="#ff0000"/>
<rect x="1238.0" y="227.1" width="2.1" height="8.7" fill="#ff0000"/>
<rect x="1240.4" y="224.6" width="2.1" height="8.0" fill="#ff0000"/>
<rect x="1243.1" y="223.9" width="2.1" height="4.2" fill="#ff0000"/>
<rect x="1246.0" y="224.0" width="2.1" height="2.7" fill="#ff0000"/>
<rect x="1248.5" y="224.5" width="2.1" height="4.2" fill="#1e90ff"/>
<rect x="1250.6" y="228.3" width="2.1" height="2.9" fill="#ff0000"/>
<rect x="1252.7" y="224.4" width="2.1" height="7.5" fill="#1e90ff"/>
<rect x="1255.1" y="222.6" width="2.1" height="5.8" fill="#ff0000"/>
<rect x="1257.0" y="215.6" width="2.1" height="11.5" fill="#ff0000"/>
<rect x="1259.6" y="219.7" width="2.1" height="4.1" fill="#ff0000"/>
<rect x="1262.4" y="218.2" width="2.1" height="4.0" fill="#ff0000"/>
<rect x="1265.1" y="217.6" width="2.1" height="2.5" fill="#ff0000"/>
<rect x="1267.6" y="213.7" width="2.1" height="5.6" fill="#ff0000"/>
<rect x="1270.1" y="207.0" width="2.1" height="10.3" fill="#1e90ff"/>
<rect x="1272.6" y="211.9" width="2.1" height="11.7" fill="#1e90ff"/>
<rect x="1275.3" y="202.4" width="2.1" height="19.3" fill="#ff0000"/>
<rect x="1277.5" y="200.6" width="2.1" height="9.3" fill="#1e90ff"/>
<rect x="1279.8" y="198.3" width="2.6" height="2" fill="#eee27a"/>
<rect x="1282.2" y="196.0" width="2.1" height="9.5" fill="#1e90ff"/>
<rect x="1284.4" y="201.0" width="2.1" height="10.0" fill="#1e90ff"/>
<rect x="1286.6" y="210.0" width="2.1" height="9.9" fill="#1e90ff"/>
<rect x="1289.3" y="218.9" width="2.1" height="16.6" fill="#1e90ff"/>
<rect x="1292.0" y="230.0" width="2.1" height="10.8" fill="#1e90ff"/>
<rect x="1294.7" y="236.4" width="2.1" height="5.9" fill="#ff0000"/>
<rect x="1296.8" y="236.4" width="2.1" height="2.5" fill="#1e90ff"/>
<rect x="1299.2" y="236.4" width="2.1" height="5.4" fill="#ff0000"/>
<rect x="1301.7" y="237.4" width="2.1" height="3.1" fill="#ff0000"/>
<rect x="1304.5" y="235.3" width="2.6" height="2" fill="#eee27a"/>
<rect x="1306.9" y="233.4" width="2.1" height="5.1" fill="#ff0000"/>
<rect x="1309.0" y="231.6" width="2.1" height="5.8" fill="#ff0000"/>
<rect x="1311.3" y="230.9" width="2.1" height="5.9" fill="#1e90ff"/>
<rect x="1313.8" y="230.8" width="2.1" height="5.5" fill="#ff0000"/>
<rect x="1316.6" y="231.7" width="2.1" height="8.7" fill="#1e90ff"/>
<rect x="1318.5" y="237.0" width="2.1" height="8.7" fill="#ff0000"/>
<rect x="1321.1" y="240.9" width="2.1" height="9.0" fill="#1e90ff"/>
<rect x="1323.6" y="245.8" width="2.1" height="4.5" fill="#1e90ff"/>
<rect x="1325.4" y="243.5" width="2.1" height="9.3" fill="#ff0000"/>
<rect x="1327.6" y="243.4" width="2.6" height="2" fill="#eee27a"/>
<rect x="1329.6" y="237.8" width="2.1" height="8.4" fill="#ff0000"/>
<rect x="1332.3" y="234.5" width="2.1" height="8.2" fill="#ff0000"/>
<rect x="1334.3" y="230.6" width="2.1" height="9.2" fill="#ff0000"/>
<rect x="1336.8" y="229.2" width="2.6" height="2" fill="#eee27a"/>
<rect x="1339.2" y="222.1" width="2.1" height="6.6" fill="#ff0000"/>
<rect x="1341.1" y="218.2" width="2.1" height="8.6" fill="#ff0000"/>
<rect x="1343.2" y="217.8" width="2.1" height="6.1" fill="#1e90ff"/>
<rect x="1345.2" y="219.7" width="2.1" height="12.9" fill="#1e90ff"/>
<rect x="1347.2" y="227.5" width="2.1" height="13.0" fill="#1e90ff"/>
<rect x="1350.0" y="236.5" width="2.1" height="13.3" fill="#1e90ff"/>
<rect x="1352.8" y="247.5" width="2.1" height="11.5" fill="#ff0000"/>
<rect x="1354.7" y="250.4" width="2.1" height="18.5" fill="#1e90ff"/>
<rect x="1357.4" y="266.9" width="2.1" height="13.7" fill="#1e90ff"/>
<rect x="1359.4" y="271.3" width="2.1" height="7.6" fill="#1e90ff"/>
<rect x="1361.9" y="256.6" width="2.1" height="17.1" fill="#ff0000"/>
<rect x="1364.1" y="257.6" width="2.1" height="9.7" fill="#ff0000"/>
<rect x="1366.4" y="251.9" width="2.1" height="7.8" fill="#ff0000"/>
<rect x="1368.7" y="254.8" width="2.1" height="7.1" fill="#1e90ff"/>
<rect x="1371.4" y="253.7" width="2.1" height="14.4" fill="#1e90ff"/>
<rect x="1373.8" y="263.5" width="2.1" height="4.9" fill="#1e90ff"/>
<rect x="1376.0" y="263.8" width="2.1" height="13.7" fill="#1e90ff"/>
<rect x="1378.8" y="277.5" width="2.1" height="18.4" fill="#1e90ff"/>
<rect x="1380.8" y="290.6" width="2.1" height="19.4" fill="#1e90ff"/>
<rect x="1383.3" y="301.9" width="2.1" height="16.8" fill="#1e90ff"/>
<rect x="1386.1" y="318.9" width="2.6" height="2" fill="#eee27a"/>
<rect x="1388.0" y="320.7" width="2" height="3.6" fill="#eee27a"/>
<rect x="1390.3" y="314.8" width="2.1" height="7.9" fill="#1e90ff"/>
<rect x="1392.3" y="318.1" width="2.1" height="8.4" fill="#1e90ff"/>
<rect x="1394.8" y="319.6" width="2.1" height="15.5" fill="#1e90ff"/>
<rect x="1397.2" y="332.0" width="2.1" height="9.0" fill="#1e90ff"/>
<rect x="1400.0" y="328.1" width="2.1" height="13.3" fill="#1e90ff"/>
<rect x="1402.7" y="294.0" width="2.1" height="35.1" fill="#ff0000"/>
<rect x="1405.3" y="295.9" width="2.1" height="15.6" fill="#1e90ff"/>
<rect x="1408.0" y="309.0" width="2.1" height="14.0" fill="#1e90ff"/>
<rect x="1410.4" y="320.5" width="2.1" height="14.1" fill="#ff0000"/>
<rect x="1412.2" y="328.9" width="2.1" height="13.6" fill="#1e90ff"/>
<rect x="1414.9" y="339.7" width="2.1" height="10.7" fill="#1e90ff"/>
<rect x="1417.7" y="337.5" width="2.1" height="10.3" fill="#1e90ff"/>
<rect x="1419.8" y="330.6" width="2.1" height="10.3" fill="#ff0000"/>
<rect x="1421.9" y="323.7" width="2.1" height="11.3" fill="#ff0000"/>
<rect x="1424.8" y="312.0" width="2.1" height="14.2" fill="#ff0000"/>
<rect x="1427.0" y="303.9" width="2.1" height="14.8" fill="#ff0000"/>
<rect x="1429.4" y="293.1" width="2.1" height="16.1" fill="#ff0000"/>
<rect x="1431.8" y="285.0" width="2.1" height="14.5" fill="#ff0000"/>
<rect x="1433.9" y="277.6" width="2.1" height="13.4" fill="#ff0000"/>
<rect x="1436.0" y="270.5" width="2.1" height="16.7" fill="#ff0000"/>
<rect x="1438.0" y="263.9" width="2.1" height="10.8" fill="#ff0000"/>
<rect x="1440.3" y="260.7" width="2.1" height="8.1" fill="#1e90ff"/>
<rect x="1442.4" y="260.0" width="2.1" height="7.8" fill="#1e90ff"/>
<rect x="1444.5" y="264.1" width="2.1" height="9.4" fill="#1e90ff"/>
<rect x="1446.8" y="268.7" width="2.1" height="11.8" fill="#1e90ff"/>
<rect x="1448.9" y="277.0" width="2.1" height="9.1" fill="#1e90ff"/>
<rect x="1451.1" y="278.8" width="2.1" height="9.4" fill="#1e90ff"/>
<rect x="1453.6" y="284.3" width="2.1" height="10.3" fill="#1e90ff"/>
<rect x="1456.2" y="290.0" width="2.1" height="10.8" fill="#1e90ff"/>
<rect x="1458.2" y="295.9" width="2.1" height="6.8" fill="#1e90ff"/>
<rect x="1460.2" y="297.5" width="2.1" height="5.8" fill="#ff0000"/>
<rect x="1462.5" y="296.7" width="2.1" height="4.8" fill="#ff0000"/>
<rect x="1465.3" y="294.8" width="2.1" height="6.2" fill="#1e90ff"/>
<rect x="1467.7" y="293.4" width="2.1" height="4.9" fill="#1e90ff"/>
<rect x="1469.7" y="293.5" width="2.1" height="15.7" fill="#1e90ff"/>
<rect x="1472.5" y="309.0" width="2.1" height="22.4" fill="#1e90ff"/>
<rect x="1474.7" y="326.0" width="2.1" height="16.1" fill="#1e90ff"/>
<rect x="1477.3" y="328.5" width="2.1" height="11.6" fill="#ff0000"/>
<rect x="1479.5" y="322.0" width="2.1" height="11.8" fill="#1e90ff"/>
<rect x="1482.3" y="311.8" width="2.1" height="12.7" fill="#ff0000"/>
<rect x="1484.5" y="303.9" width="2.1" height="12.2" fill="#ff0000"/>
<rect x="1487.2" y="303.3" width="2.1" height="2.7" fill="#1e90ff"/>
<rect x="1489.9" y="303.1" width="2.1" height="3.2" fill="#1e90ff"/>
<rect x="1491.9" y="303.3" width="2.1" height="6.7" fill="#1e90ff"/>
<rect x="1494.4" y="305.1" width="2.1" height="6.9" fill="#1e90ff"/>
<rect x="1496.4" y="307.9" width="2.1" height="5.2" fill="#1e90ff"/>
<rect x="1498.3" y="309.5" width="2.6" height="2" fill="#eee27a"/>
<rect x="1500.3" y="308.0" width="2.1" height="5.4" fill="#1e90ff"/>
<rect x="1502.2" y="308.8" width="2.1" height="12.6" fill="#ff0000"/>
<rect x="1504.9" y="303.8" width="2.1" height="8.2" fill="#ff0000"/>
<rect x="1506.7" y="303.1" width="2.1" height="5.3" fill="#ff0000"/>
<rect x="1509.1" y="304.5" width="2.1" height="3.4" fill="#1e90ff"/>
<rect x="1511.3" y="305.2" width="2.1" height="9.6" fill="#1e90ff"/>
<rect x="1513.3" y="309.3" width="2.1" height="7.7" fill="#1e90ff"/>
<rect x="1515.7" y="311.2" width="2.1" height="8.3" fill="#1e90ff"/>
<rect x="1517.8" y="315.6" width="2.1" height="7.7" fill="#1e90ff"/>
<rect x="1520.1" y="321.6" width="2.1" height="7.1" fill="#1e90ff"/>
<rect x="1522.4" y="324.3" width="2.1" height="4.9" fill="#1e90ff"/>
<rect x="1525.2" y="324.8" width="2.1" height="5.8" fill="#ff0000"/>
<rect x="1527.2" y="326.1" width="2.1" height="2.8" fill="#ff0000"/>
<rect x="1529.9" y="325.9" width="2.1" height="2.5" fill="#ff0000"/>
<rect x="1532.1" y="324.5" width="2.1" height="5.4" fill="#1e90ff"/>
<rect x="1535.0" y="319.0" width="2.1" height="9.6" fill="#1e90ff"/>
<rect x="1537.5" y="313.0" width="2.1" height="12.7" fill="#ff0000"/>
<rect x="1540.1" y="314.9" width="2.1" height="4.5" fill="#1e90ff"/>
<rect x="1542.7" y="316.6" width="2.1" height="22.0" fill="#ff0000"/>
<rect x="1545.5" y="331.7" width="2.1" height="11.2" fill="#1e90ff"/>
<rect x="1547.7" y="335.4" width="2" height="6.8" fill="#eee27a"/>
<rect x="1549.7" y="332.5" width="2.1" height="5.5" fill="#1e90ff"/>
<rect x="1552.5" y="327.0" width="2.1" height="6.0" fill="#ff0000"/>
<rect x="1555.2" y="325.3" width="2.1" height="5.7" fill="#1e90ff"/>
<rect x="1557.9" y="324.7" width="2.1" height="12.2" fill="#1e90ff"/>
<rect x="1560.7" y="328.5" width="2.1" height="4.6" fill="#ff0000"/>
<rect x="1563.0" y="328.5" width="2.1" height="5.7" fill="#1e90ff"/>
<rect x="1564.8" y="327.3" width="2.1" height="6.1" fill="#ff0000"/>
<rect x="1567.4" y="324.9" width="2.1" height="7.8" fill="#ff0000"/>
<rect x="1570.2" y="319.8" width="2.1" height="7.4" fill="#1e90ff"/>
<rect x="1572.8" y="317.2" width="2.1" height="6.5" fill="#ff0000"/>
<rect x="1575.5" y="312.0" width="2.1" height="7.9" fill="#1e90ff"/>
<rect x="1577.4" y="311.7" width="2.1" height="4.4" fill="#ff0000"/>
<rect x="1580.1" y="304.6" width="2.1" height="8.6" fill="#ff0000"/>
<rect x="1582.5" y="303.9" width="2.1" height="8.7" fill="#ff0000"/>
<rect x="1584.6" y="299.4" width="2.1" height="9.6" fill="#ff0000"/>
<rect x="1586.7" y="297.2" width="2.1" height="7.2" fill="#ff0000"/>
<rect x="1589.1" y="291.7" width="2.1" height="8.7" fill="#ff0000"/>
<rect x="1591.5" y="281.3" width="2.1" height="14.6" fill="#ff0000"/>
<rect x="1593.8" y="273.5" width="2.1" height="19.0" fill="#ff0000"/>
<rect x="1596.6" y="274.1" width="2.1" height="10.7" fill="#ff0000"/>
<rect x="1599.1" y="267.8" width="2.1" height="9.5" fill="#ff0000"/>
<rect x="1601.9" y="262.9" width="2.1" height="8.5" fill="#1e90ff"/>
<rect x="1604.7" y="258.6" width="2.1" height="7.4" fill="#ff0000"/>
<rect x="1607.0" y="250.2" width="2.1" height="10.7" fill="#ff0000"/>
<rect x="1609.1" y="254.3" width="2.1" height="6.1" fill="#1e90ff"/>
<rect x="1611.5" y="255.5" width="2.1" height="9.1" fill="#ff0000"/>
<rect x="1614.2" y="259.3" width="2.1" height="18.5" fill="#1e90ff"/>
<rect x="1616.5" y="266.6" width="2.1" height="9.9" fill="#1e90ff"/>
<rect x="1619.2" y="269.9" width="2.1" height="12.1" fill="#ff0000"/>
<rect x="1621.9" y="276.3" width="2.1" height="9.2" fill="#ff0000"/>
<rect x="1624.2" y="280.2" width="2.1" height="7.0" fill="#1e90ff"/>
<rect x="1626.3" y="280.1" width="2.1" height="5.9" fill="#ff0000"/>
<rect x="1629.1" y="278.3" width="2.1" height="7.9" fill="#ff0000"/>
<rect x="1631.7" y="276.9" width="2.1" height="3.5" fill="#ff0000"/>
<rect x="1638.3" y="272.6" width="2.1" height="5.4" fill="#1e90ff"/>
<rect x="1640.6" y="272.1" width="2.1" height="5.3" fill="#ff0000"/>
<rect x="1643.4" y="268.0" width="2.1" height="6.9" fill="#1e90ff"/>
<rect x="1645.7" y="270.7" width="2.1" height="3.6" fill="#ff0000"/>
<rect x="1648.2" y="269.8" width="2.6" height="2" fill="#eee27a"/>
<rect x="1650.2" y="267.5" width="2.1" height="5.3" fill="#1e90ff"/>
<rect x="1652.2" y="262.6" width="2.1" height="11.6" fill="#1e90ff"/>
<rect x="1654.4" y="269.3" width="2.1" height="12.0" fill="#1e90ff"/>
<rect x="1656.6" y="278.4" width="2" height="6.6" fill="#eee27a"/>
<rect x="1658.8" y="281.9" width="2.1" height="4.8" fill="#ff0000"/>
<rect x="1660.8" y="280.9" width="2.1" height="4.5" fill="#ff0000"/>
<rect x="1663.1" y="279.8" width="2.1" height="5.9" fill="#ff0000"/>
<rect x="1665.8" y="282.5" width="2.1" height="2.5" fill="#ff0000"/>
<rect x="1667.9" y="281.4" width="2" height="4.9" fill="#eee27a"/>
<rect x="1670.1" y="282.4" width="2.1" height="9.1" fill="#1e90ff"/>
<rect x="1672.5" y="286.6" width="2.1" height="8.5" fill="#1e90ff"/>
<rect x="1674.7" y="292.9" width="2.1" height="8.3" fill="#ff0000"/>
<rect x="1678.8" y="300.3" width="2.1" height="6.9" fill="#1e90ff"/>
<rect x="1681.0" y="303.9" width="2.6" height="2" fill="#eee27a"/>
<rect x="1687.3" y="300.7" width="2.1" height="4.3" fill="#ff0000"/>
<rect x="1690.1" y="301.2" width="2.6" height="2" fill="#eee27a"/>
<rect x="1692.1" y="300.1" width="2.6" height="2" fill="#eee27a"/>
<rect x="1698.9" y="291.0" width="2.6" height="2" fill="#eee27a"/>
<rect x="1701.3" y="286.6" width="2.6" height="2" fill="#eee27a"/>
<rect x="1704.0" y="281.8" width="2.1" height="4.2" fill="#1e90ff"/>
<rect x="1706.5" y="279.6" width="2.1" height="4.4" fill="#1e90ff"/>
<rect x="1709.2" y="275.7" width="2.1" height="7.9" fill="#ff0000"/>
<rect x="1711.3" y="278.2" width="2.6" height="2" fill="#eee27a"/>
<rect x="1713.7" y="277.9" width="2" height="3.0" fill="#eee27a"/>
<rect x="1716.5" y="276.0" width="2.1" height="6.5" fill="#1e90ff"/>
<rect x="1721.5" y="279.0" width="2.6" height="2" fill="#eee27a"/>
<rect x="1724.0" y="280.9" width="2.6" height="2" fill="#eee27a"/>
<rect x="1726.0" y="282.7" width="2.6" height="2" fill="#eee27a"/>
<rect x="1731.9" y="293.8" width="2.1" height="10.6" fill="#1e90ff"/>
<rect x="1734.7" y="304.0" width="2.6" height="2" fill="#eee27a"/>
<rect x="1736.8" y="304.7" width="2.1" height="5.3" fill="#ff0000"/>
<rect x="1739.5" y="304.1" width="2" height="3.6" fill="#eee27a"/>
<rect x="1742.3" y="303.9" width="2.6" height="2" fill="#eee27a"/>
<rect x="1746.4" y="303.4" width="2.1" height="8.0" fill="#1e90ff"/>
<rect x="1748.4" y="305.4" width="2.1" height="7.7" fill="#1e90ff"/>
<rect x="1751.0" y="313.5" width="2.6" height="2" fill="#eee27a"/>
<rect x="1755.8" y="317.3" width="2.1" height="6.9" fill="#1e90ff"/>
<rect x="1758.0" y="320.4" width="2.6" height="2" fill="#eee27a"/>
<rect x="1760.3" y="313.7" width="2.1" height="10.8" fill="#1e90ff"/>
<rect x="1762.5" y="309.8" width="2.1" height="9.6" fill="#ff0000"/>
<rect x="1764.9" y="302.7" width="2.1" height="9.5" fill="#1e90ff"/>
<rect x="1767.4" y="296.1" width="2.1" height="9.0" fill="#ff0000"/>
<rect x="1773.7" y="294.5" width="2.1" height="8.5" fill="#1e90ff"/>
<rect x="1776.2" y="301.3" width="2.6" height="2" fill="#eee27a"/>
<rect x="1778.8" y="302.9" width="2.1" height="4.5" fill="#ff0000"/>
<rect x="1782.4" y="294.1" width="2.1" height="8.8" fill="#ff0000"/>
<rect x="1784.4" y="288.1" width="2.1" height="9.8" fill="#ff0000"/>
<rect x="1786.8" y="283.3" width="2.1" height="10.6" fill="#ff0000"/>
<rect x="1790.5" y="277.5" width="2" height="6.0" fill="#eee27a"/>
<rect x="1792.5" y="277.5" width="2" height="4.0" fill="#eee27a"/>
<rect x="1794.9" y="276.1" width="2" height="3.7" fill="#eee27a"/>
<rect x="1797.5" y="274.5" width="2.6" height="2" fill="#eee27a"/>
<rect x="1801.1" y="272.6" width="2.1" height="6.3" fill="#ff0000"/>
<rect x="1803.0" y="271.1" width="2" height="4.9" fill="#eee27a"/>
<rect x="1805.7" y="272.8" width="2.6" height="2" fill="#eee27a"/>
<rect x="1808.1" y="273.3" width="2.1" height="8.3" fill="#ff0000"/>
<rect x="1810.1" y="274.4" width="2.1" height="7.5" fill="#1e90ff"/>
<rect x="1816.2" y="296.6" width="2.1" height="13.8" fill="#ff0000"/>
<rect x="1819.0" y="308.9" width="2" height="4.4" fill="#eee27a"/>
<rect x="1821.1" y="303.1" width="2.1" height="8.9" fill="#ff0000"/>
<rect x="1823.0" y="300.3" width="2.1" height="7.1" fill="#ff0000"/>
<rect x="1825.3" y="300.2" width="2.6" height="2" fill="#eee27a"/>
<rect x="1827.6" y="292.1" width="2.1" height="8.6" fill="#1e90ff"/>
<rect x="1831.2" y="291.6" width="2.6" height="2" fill="#eee27a"/>
<rect x="1833.3" y="289.7" width="2.1" height="3.3" fill="#1e90ff"/>
<rect x="1836.8" y="287.5" width="2.1" height="4.5" fill="#1e90ff"/>
<rect x="1838.9" y="286.0" width="2" height="4.2" fill="#eee27a"/>
<rect x="1840.9" y="282.1" width="2.1" height="7.8" fill="#ff0000"/>
<rect x="1843.6" y="284.8" width="2.1" height="9.8" fill="#1e90ff"/>
<rect x="1848.0" y="294.9" width="2.1" height="8.1" fill="#1e90ff"/>
<rect x="1854.2" y="299.9" width="2" height="3.1" fill="#eee27a"/>
<rect x="1856.6" y="297.6" width="2.1" height="3.4" fill="#1e90ff"/>
<rect x="1858.6" y="298.2" width="2.6" height="2" fill="#eee27a"/>
<rect x="1860.5" y="299.3" width="2.6" height="2" fill="#eee27a"/>
<rect x="1863.2" y="295.0" width="2.1" height="8.9" fill="#1e90ff"/>
<rect x="1865.5" y="303.7" width="2.6" height="2" fill="#eee27a"/>
<rect x="1867.8" y="305.4" width="2.1" height="3.5" fill="#1e90ff"/>
<rect x="1870.4" y="303.8" width="2.1" height="11.7" fill="#1e90ff"/>
<rect x="1873.0" y="311.0" width="2" height="4.2" fill="#eee27a"/>
<rect x="1875.4" y="310.1" width="2.1" height="4.3" fill="#1e90ff"/>
<rect x="1878.1" y="312.1" width="2.6" height="2" fill="#eee27a"/>
<rect x="1880.8" y="313.8" width="2.1" height="4.1" fill="#ff0000"/>
<rect x="1883.1" y="312.9" width="2.6" height="2" fill="#eee27a"/>
<rect x="1885.4" y="305.7" width="2.1" height="9.9" fill="#ff0000"/>
<rect x="1887.2" y="311.7" width="2" height="3.5" fill="#eee27a"/>
<rect x="1889.3" y="308.7" width="2.1" height="5.5" fill="#1e90ff"/>
<rect x="1891.2" y="309.3" width="2" height="3.1" fill="#eee27a"/>
<rect x="1893.3" y="305.3" width="2.1" height="7.6" fill="#ff0000"/>
<rect x="1895.2" y="307.2" width="2" height="3.3" fill="#eee27a"/>
<rect x="1897.9" y="286.8" width="2.1" height="18.9" fill="#ff0000"/>
</g>
<g clip-path="url(#cp1)">
<rect x="12.8" y="498.0" width="3" height="1.9" fill="#eee27a"/>
<rect x="21.8" y="507.5" width="2.3" height="17.2" fill="#1e90ff"/>
<rect x="27.6" y="507.5" width="2.3" height="18.6" fill="#ff0000"/>
<rect x="30.4" y="507.5" width="2.3" height="27.2" fill="#1e90ff"/>
<rect x="44.8" y="536.2" width="2.3" height="15.8" fill="#1e90ff"/>
<rect x="51.9" y="507.5" width="2.3" height="17.2" fill="#ff0000"/>
<rect x="56.2" y="488.9" width="2.3" height="17.2" fill="#ff0000"/>
<rect x="59.1" y="497.5" width="2.3" height="8.6" fill="#ff0000"/>
<rect x="57.3" y="516.7" width="3" height="1.9" fill="#eee27a"/>
<rect x="66.3" y="488.9" width="2.3" height="17.2" fill="#ff0000"/>
<rect x="70.6" y="461.6" width="2.3" height="27.2" fill="#ff0000"/>
<rect x="74.9" y="453.0" width="2.3" height="27.2" fill="#ff0000"/>
<rect x="77.8" y="481.7" width="2.3" height="5.7" fill="#1e90ff"/>
<rect x="72.5" y="488.0" width="3" height="1.9" fill="#eee27a"/>
<rect x="83.9" y="488.0" width="3" height="1.9" fill="#eee27a"/>
<rect x="88.4" y="460.2" width="2.3" height="27.2" fill="#ff0000"/>
<rect x="92.1" y="444.4" width="2.3" height="17.2" fill="#1e90ff"/>
<rect x="95.0" y="443.0" width="2.3" height="18.6" fill="#ff0000"/>
<rect x="97.8" y="424.4" width="2.3" height="18.6" fill="#ff0000"/>
<rect x="101.6" y="434.4" width="2.3" height="8.6" fill="#1e90ff"/>
<rect x="104.6" y="433.5" width="3" height="1.9" fill="#eee27a"/>
<rect x="109.3" y="424.4" width="2.3" height="8.6" fill="#ff0000"/>
<rect x="103.2" y="423.5" width="3" height="1.9" fill="#eee27a"/>
<rect x="121.8" y="424.3" width="3" height="1.9" fill="#eee27a"/>
<rect x="135.0" y="433.5" width="12.4" height="1.9" fill="#eee27a"/>
<rect x="149.3" y="452.1" width="11.0" height="1.9" fill="#eee27a"/>
<rect x="153.3" y="433.5" width="3" height="1.9" fill="#eee27a"/>
<rect x="162.3" y="434.4" width="2.3" height="17.2" fill="#ff0000"/>
<rect x="172.4" y="424.4" width="2.3" height="37.3" fill="#ff0000"/>
<rect x="177.7" y="452.1" width="3" height="1.9" fill="#eee27a"/>
<rect x="169.1" y="433.5" width="3" height="1.9" fill="#eee27a"/>
<rect x="181.0" y="507.5" width="2.3" height="27.2" fill="#1e90ff"/>
<rect x="185.3" y="526.2" width="2.3" height="11.5" fill="#1e90ff"/>
<rect x="187.6" y="534.8" width="2.3" height="10.0" fill="#1e90ff"/>
<rect x="189.8" y="525.3" width="3" height="1.9" fill="#eee27a"/>
<rect x="182.0" y="535.3" width="3" height="1.9" fill="#eee27a"/>
<rect x="193.9" y="507.5" width="2.3" height="8.6" fill="#ff0000"/>
<rect x="196.7" y="497.5" width="2.3" height="8.6" fill="#ff0000"/>
<rect x="203.1" y="488.9" width="2.3" height="8.6" fill="#1e90ff"/>
<rect x="205.4" y="481.7" width="2.3" height="14.3" fill="#ff0000"/>
<rect x="209.7" y="471.7" width="2.3" height="17.2" fill="#ff0000"/>
<rect x="212.5" y="481.7" width="2.3" height="5.7" fill="#1e90ff"/>
<rect x="215.4" y="434.4" width="2.3" height="47.3" fill="#eee27a"/>
<rect x="220.7" y="460.7" width="3" height="1.9" fill="#eee27a"/>
<rect x="222.2" y="470.8" width="3" height="1.9" fill="#eee27a"/>
<rect x="213.6" y="470.8" width="3" height="1.9" fill="#eee27a"/>
<rect x="230.6" y="481.7" width="2.3" height="15.8" fill="#ff0000"/>
<rect x="232.6" y="481.7" width="2.3" height="5.7" fill="#1e90ff"/>
<rect x="233.6" y="498.0" width="3" height="1.9" fill="#eee27a"/>
<rect x="238.3" y="507.5" width="2.3" height="8.6" fill="#1e90ff"/>
<rect x="242.2" y="506.6" width="3" height="1.9" fill="#eee27a"/>
<rect x="248.4" y="517.6" width="2.3" height="25.8" fill="#1e90ff"/>
<rect x="250.7" y="526.2" width="2.3" height="8.6" fill="#1e90ff"/>
<rect x="245.4" y="516.7" width="8.1" height="1.9" fill="#eee27a"/>
<rect x="252.3" y="535.3" width="3" height="1.9" fill="#eee27a"/>
<rect x="259.8" y="517.6" width="2.3" height="17.2" fill="#1e90ff"/>
<rect x="256.9" y="516.7" width="12.4" height="1.9" fill="#eee27a"/>
<rect x="262.6" y="525.3" width="8.1" height="1.9" fill="#eee27a"/>
<rect x="269.8" y="535.3" width="9.6" height="1.9" fill="#eee27a"/>
<rect x="272.7" y="536.2" width="2.3" height="8.6" fill="#eee27a"/>
<rect x="276.6" y="543.9" width="3" height="1.9" fill="#eee27a"/>
<rect x="282.4" y="525.3" width="3" height="1.9" fill="#eee27a"/>
<rect x="288.5" y="526.2" width="2.3" height="8.6" fill="#1e90ff"/>
<rect x="289.9" y="534.8" width="2.3" height="10.0" fill="#ff0000"/>
<rect x="292.8" y="526.2" width="2.3" height="17.2" fill="#1e90ff"/>
<rect x="295.7" y="517.6" width="2.3" height="35.8" fill="#1e90ff"/>
<rect x="298.1" y="546.8" width="3" height="1.9" fill="#eee27a"/>
<rect x="298.5" y="543.4" width="2.3" height="18.6" fill="#1e90ff"/>
<rect x="302.8" y="544.8" width="2.3" height="17.2" fill="#1e90ff"/>
<rect x="307.1" y="562.0" width="2.3" height="18.6" fill="#1e90ff"/>
<rect x="310.0" y="572.0" width="2.3" height="10.0" fill="#1e90ff"/>
<rect x="314.3" y="562.0" width="2.3" height="27.2" fill="#1e90ff"/>
<rect x="315.7" y="580.6" width="2.3" height="20.1" fill="#1e90ff"/>
<rect x="318.6" y="600.7" width="2.3" height="25.8" fill="#1e90ff"/>
<rect x="324.3" y="635.1" width="2.3" height="18.6" fill="#1e90ff"/>
<rect x="327.2" y="635.1" width="2.3" height="18.6" fill="#1e90ff"/>
<rect x="330.1" y="635.1" width="2.3" height="10.0" fill="#ff0000"/>
<rect x="321.4" y="625.6" width="6.7" height="1.9" fill="#eee27a"/>
<rect x="333.0" y="599.3" width="2.3" height="27.2" fill="#ff0000"/>
<rect x="335.8" y="609.3" width="2.3" height="17.2" fill="#ff0000"/>
<rect x="339.7" y="625.6" width="3" height="1.9" fill="#eee27a"/>
<rect x="344.4" y="617.9" width="2.3" height="25.8" fill="#ff0000"/>
<rect x="347.3" y="626.5" width="2.3" height="11.5" fill="#ff0000"/>
<rect x="341.6" y="635.1" width="2.3" height="10.0" fill="#1e90ff"/>
<rect x="351.6" y="609.3" width="2.3" height="17.2" fill="#ff0000"/>
<rect x="354.5" y="626.5" width="2.3" height="8.6" fill="#1e90ff"/>
<rect x="357.2" y="617.0" width="5.3" height="1.9" fill="#eee27a"/>
<rect x="358.4" y="608.4" width="3" height="1.9" fill="#eee27a"/>
<rect x="367.4" y="609.3" width="2.3" height="17.2" fill="#eee27a"/>
<rect x="370.2" y="617.9" width="2.3" height="17.2" fill="#1e90ff"/>
<rect x="374.5" y="617.9" width="2.3" height="17.2" fill="#1e90ff"/>
<rect x="377.4" y="617.9" width="2.3" height="17.2" fill="#1e90ff"/>
<rect x="380.3" y="626.5" width="2.3" height="8.6" fill="#ff0000"/>
<rect x="383.1" y="617.9" width="2.3" height="17.2" fill="#eee27a"/>
<rect x="388.9" y="626.5" width="2.3" height="10.0" fill="#eee27a"/>
<rect x="391.7" y="645.2" width="2.3" height="44.4" fill="#ff0000"/>
<rect x="394.6" y="653.8" width="2.3" height="10.0" fill="#1e90ff"/>
<rect x="395.6" y="662.9" width="3" height="1.9" fill="#eee27a"/>
<rect x="399.9" y="652.9" width="3" height="1.9" fill="#eee27a"/>
<rect x="404.6" y="645.2" width="2.3" height="8.6" fill="#1e90ff"/>
<rect x="407.5" y="635.1" width="2.3" height="10.0" fill="#ff0000"/>
<rect x="403.1" y="625.6" width="8.1" height="1.9" fill="#eee27a"/>
<rect x="411.4" y="618.5" width="3" height="1.9" fill="#eee27a"/>
<rect x="414.7" y="609.3" width="2.3" height="8.6" fill="#1e90ff"/>
<rect x="417.5" y="599.3" width="2.3" height="10.0" fill="#1e90ff"/>
<rect x="424.7" y="580.6" width="2.3" height="28.7" fill="#ff0000"/>
<rect x="427.6" y="572.0" width="2.3" height="8.6" fill="#1e90ff"/>
<rect x="430.4" y="572.0" width="2.3" height="8.6" fill="#ff0000"/>
<rect x="433.3" y="553.4" width="2.3" height="10.0" fill="#1e90ff"/>
<rect x="437.6" y="534.8" width="2.3" height="10.0" fill="#ff0000"/>
<rect x="440.5" y="536.2" width="2.3" height="15.8" fill="#1e90ff"/>
<rect x="444.8" y="544.8" width="2.3" height="25.8" fill="#ff0000"/>
<rect x="447.6" y="526.2" width="2.3" height="27.2" fill="#ff0000"/>
<rect x="450.1" y="533.9" width="3" height="1.9" fill="#eee27a"/>
<rect x="453.4" y="507.5" width="2.3" height="27.2" fill="#ff0000"/>
<rect x="456.2" y="507.5" width="2.3" height="18.6" fill="#ff0000"/>
<rect x="460.5" y="507.5" width="2.3" height="8.6" fill="#eee27a"/>
<rect x="462.0" y="516.1" width="2.3" height="10.0" fill="#1e90ff"/>
<rect x="464.4" y="506.6" width="3" height="1.9" fill="#eee27a"/>
<rect x="467.3" y="498.0" width="3" height="1.9" fill="#eee27a"/>
<rect x="469.2" y="481.7" width="2.3" height="7.2" fill="#ff0000"/>
<rect x="472.0" y="481.7" width="2.3" height="7.2" fill="#1e90ff"/>
<rect x="474.9" y="453.0" width="2.3" height="35.8" fill="#ff0000"/>
<rect x="477.4" y="460.7" width="3" height="1.9" fill="#eee27a"/>
<rect x="470.3" y="481.7" width="2.3" height="5.7" fill="#1e90ff"/>
<rect x="472.3" y="481.7" width="2.3" height="5.7" fill="#ff0000"/>
<rect x="474.1" y="453.0" width="2.3" height="34.4" fill="#ff0000"/>
<rect x="477.1" y="460.7" width="3" height="1.9" fill="#eee27a"/>
<rect x="482.7" y="424.4" width="2.3" height="27.2" fill="#ff0000"/>
<rect x="485.7" y="443.5" width="3" height="1.9" fill="#eee27a"/>
<rect x="488.6" y="452.1" width="3" height="1.9" fill="#eee27a"/>
<rect x="493.3" y="453.0" width="2.3" height="8.6" fill="#ff0000"/>
<rect x="491.8" y="461.6" width="2.3" height="8.6" fill="#eee27a"/>
<rect x="497.2" y="470.8" width="3" height="1.9" fill="#eee27a"/>
<rect x="500.3" y="488.0" width="8.1" height="1.9" fill="#eee27a"/>
<rect x="525.8" y="480.8" width="3" height="1.9" fill="#eee27a"/>
<rect x="524.4" y="488.0" width="3" height="1.9" fill="#eee27a"/>
<rect x="532.0" y="488.9" width="2.3" height="10.0" fill="#1e90ff"/>
<rect x="527.3" y="498.0" width="3" height="1.9" fill="#eee27a"/>
<rect x="520.1" y="498.0" width="3" height="1.9" fill="#eee27a"/>
<rect x="509.0" y="498.9" width="2.3" height="7.2" fill="#1e90ff"/>
<rect x="514.7" y="506.6" width="6.7" height="1.9" fill="#eee27a"/>
<rect x="540.0" y="507.5" width="2.3" height="8.6" fill="#1e90ff"/>
<rect x="537.6" y="516.7" width="9.6" height="1.9" fill="#eee27a"/>
<rect x="549.8" y="517.6" width="2.3" height="17.2" fill="#1e90ff"/>
<rect x="554.9" y="517.6" width="2.3" height="8.6" fill="#ff0000"/>
<rect x="551.7" y="525.3" width="3" height="1.9" fill="#eee27a"/>
<rect x="563.5" y="536.2" width="2.3" height="8.6" fill="#eee27a"/>
<rect x="567.0" y="536.2" width="2.3" height="25.8" fill="#ff0000"/>
<rect x="575.6" y="526.2" width="2.3" height="17.2" fill="#1e90ff"/>
<rect x="576.3" y="561.1" width="8.1" height="1.9" fill="#eee27a"/>
<rect x="583.0" y="562.0" width="2.3" height="18.6" fill="#eee27a"/>
<rect x="585.0" y="562.0" width="2.3" height="18.6" fill="#ff0000"/>
<rect x="586.4" y="579.7" width="11.0" height="1.9" fill="#eee27a"/>
<rect x="592.2" y="580.6" width="2.3" height="18.6" fill="#ff0000"/>
<rect x="588.9" y="571.1" width="3" height="1.9" fill="#eee27a"/>
<rect x="598.5" y="553.4" width="2.3" height="8.6" fill="#ff0000"/>
<rect x="596.4" y="561.1" width="11.0" height="1.9" fill="#eee27a"/>
<rect x="606.5" y="562.0" width="2.3" height="8.6" fill="#1e90ff"/>
<rect x="610.0" y="553.4" width="2.3" height="17.2" fill="#1e90ff"/>
<rect x="611.9" y="552.5" width="3" height="1.9" fill="#eee27a"/>
<rect x="615.0" y="561.1" width="8.1" height="1.9" fill="#eee27a"/>
<rect x="616.2" y="571.1" width="3" height="1.9" fill="#eee27a"/>
<rect x="625.1" y="543.9" width="6.7" height="1.9" fill="#eee27a"/>
<rect x="627.6" y="552.5" width="3" height="1.9" fill="#eee27a"/>
<rect x="630.9" y="536.2" width="2.3" height="17.2" fill="#ff0000"/>
<rect x="635.2" y="507.5" width="2.3" height="37.3" fill="#ff0000"/>
<rect x="637.7" y="525.3" width="3" height="1.9" fill="#eee27a"/>
<rect x="640.8" y="516.7" width="5.3" height="1.9" fill="#eee27a"/>
<rect x="643.8" y="498.9" width="2.3" height="8.6" fill="#ff0000"/>
<rect x="646.7" y="507.5" width="2.3" height="18.6" fill="#1e90ff"/>
<rect x="655.9" y="517.6" width="2.3" height="25.8" fill="#1e90ff"/>
<rect x="664.9" y="535.3" width="3" height="1.9" fill="#eee27a"/>
<rect x="672.1" y="525.3" width="3" height="1.9" fill="#eee27a"/>
<rect x="678.1" y="543.9" width="6.7" height="1.9" fill="#eee27a"/>
<rect x="686.0" y="544.8" width="2.3" height="7.2" fill="#1e90ff"/>
<rect x="688.3" y="544.8" width="2.3" height="7.2" fill="#ff0000"/>
<rect x="692.6" y="544.8" width="2.3" height="7.2" fill="#eee27a"/>
<rect x="696.9" y="544.8" width="2.3" height="7.2" fill="#eee27a"/>
<rect x="693.6" y="535.3" width="3" height="1.9" fill="#eee27a"/>
<rect x="705.7" y="536.2" width="2.3" height="8.6" fill="#eee27a"/>
<rect x="702.2" y="543.9" width="3" height="1.9" fill="#eee27a"/>
<rect x="712.5" y="535.3" width="13.9" height="1.9" fill="#eee27a"/>
<rect x="712.5" y="543.9" width="13.9" height="1.9" fill="#eee27a"/>
<rect x="730.9" y="535.3" width="3" height="1.9" fill="#eee27a"/>
<rect x="738.4" y="544.8" width="2.3" height="17.2" fill="#eee27a"/>
<rect x="735.5" y="543.9" width="13.9" height="1.9" fill="#eee27a"/>
<rect x="740.9" y="552.5" width="3" height="1.9" fill="#eee27a"/>
<rect x="748.4" y="535.3" width="11.0" height="1.9" fill="#eee27a"/>
<rect x="761.4" y="536.2" width="2.3" height="8.6" fill="#1e90ff"/>
<rect x="758.4" y="543.9" width="8.1" height="1.9" fill="#eee27a"/>
<rect x="768.5" y="544.8" width="2.3" height="8.6" fill="#ff0000"/>
<rect x="764.1" y="552.5" width="19.6" height="1.9" fill="#eee27a"/>
<rect x="775.7" y="562.0" width="2.3" height="10.0" fill="#1e90ff"/>
<rect x="772.4" y="561.1" width="3" height="1.9" fill="#eee27a"/>
<rect x="786.6" y="507.5" width="2.3" height="37.3" fill="#ff0000"/>
<rect x="788.2" y="535.3" width="3" height="1.9" fill="#eee27a"/>
<rect x="792.3" y="517.6" width="2.3" height="17.2" fill="#ff0000"/>
<rect x="797.2" y="517.6" width="2.3" height="17.2" fill="#1e90ff"/>
<rect x="802.9" y="535.3" width="12.4" height="1.9" fill="#eee27a"/>
<rect x="807.3" y="536.2" width="2.3" height="8.6" fill="#1e90ff"/>
<rect x="810.1" y="544.8" width="2.3" height="17.2" fill="#1e90ff"/>
<rect x="814.4" y="544.8" width="2.3" height="17.2" fill="#1e90ff"/>
<rect x="818.7" y="553.4" width="2.3" height="17.2" fill="#ff0000"/>
<rect x="821.6" y="572.0" width="2.3" height="8.6" fill="#eee27a"/>
<rect x="825.5" y="579.7" width="3" height="1.9" fill="#eee27a"/>
<rect x="827.3" y="590.7" width="2.3" height="71.7" fill="#1e90ff"/>
<rect x="830.8" y="599.3" width="2.3" height="27.2" fill="#ff0000"/>
<rect x="833.1" y="562.0" width="2.3" height="27.2" fill="#ff0000"/>
<rect x="835.9" y="572.0" width="2.3" height="8.6" fill="#eee27a"/>
<rect x="837.4" y="580.6" width="2.3" height="8.6" fill="#1e90ff"/>
<rect x="839.8" y="589.8" width="3" height="1.9" fill="#eee27a"/>
<rect x="847.0" y="552.5" width="3" height="1.9" fill="#eee27a"/>
<rect x="850.3" y="544.8" width="2.3" height="17.2" fill="#ff0000"/>
<rect x="853.1" y="534.8" width="2.3" height="17.2" fill="#ff0000"/>
<rect x="856.0" y="526.2" width="2.3" height="8.6" fill="#1e90ff"/>
<rect x="861.6" y="535.3" width="6.7" height="1.9" fill="#eee27a"/>
<rect x="868.5" y="525.3" width="3" height="1.9" fill="#eee27a"/>
<rect x="873.2" y="507.5" width="2.3" height="10.0" fill="#ff0000"/>
<rect x="876.1" y="488.9" width="2.3" height="18.6" fill="#ff0000"/>
<rect x="878.1" y="471.7" width="2.3" height="8.6" fill="#ff0000"/>
<rect x="881.4" y="506.6" width="3" height="1.9" fill="#eee27a"/>
<rect x="887.1" y="525.3" width="3" height="1.9" fill="#eee27a"/>
<rect x="893.2" y="535.3" width="8.1" height="1.9" fill="#eee27a"/>
<rect x="891.8" y="544.8" width="2.3" height="17.2" fill="#1e90ff"/>
<rect x="895.7" y="543.9" width="3" height="1.9" fill="#eee27a"/>
<rect x="904.3" y="516.7" width="3" height="1.9" fill="#eee27a"/>
<rect x="907.2" y="525.3" width="3" height="1.9" fill="#eee27a"/>
<rect x="918.7" y="498.0" width="3" height="1.9" fill="#eee27a"/>
<rect x="919.0" y="506.6" width="8.1" height="1.9" fill="#eee27a"/>
<rect x="925.8" y="516.7" width="3" height="1.9" fill="#eee27a"/>
<rect x="927.3" y="525.3" width="3" height="1.9" fill="#eee27a"/>
<rect x="932.0" y="553.4" width="2.3" height="8.6" fill="#ff0000"/>
<rect x="935.4" y="526.2" width="2.3" height="44.4" fill="#ff0000"/>
<rect x="938.8" y="525.3" width="3" height="1.9" fill="#eee27a"/>
<rect x="941.4" y="536.2" width="2.3" height="25.8" fill="#1e90ff"/>
<rect x="947.8" y="536.2" width="2.3" height="8.6" fill="#1e90ff"/>
<rect x="941.2" y="536.2" width="2.3" height="25.8" fill="#1e90ff"/>
<rect x="948.9" y="536.2" width="2.3" height="8.6" fill="#1e90ff"/>
<rect x="939.9" y="525.3" width="3" height="1.9" fill="#eee27a"/>
<rect x="950.0" y="516.7" width="3" height="1.9" fill="#eee27a"/>
<rect x="951.8" y="497.5" width="2.3" height="10.0" fill="#ff0000"/>
<rect x="956.1" y="481.7" width="2.3" height="15.8" fill="#1e90ff"/>
<rect x="957.5" y="481.7" width="2.3" height="15.8" fill="#1e90ff"/>
<rect x="952.8" y="488.0" width="3" height="1.9" fill="#eee27a"/>
<rect x="954.3" y="480.8" width="3" height="1.9" fill="#eee27a"/>
<rect x="961.4" y="498.0" width="3" height="1.9" fill="#eee27a"/>
<rect x="969.0" y="481.7" width="2.3" height="15.8" fill="#1e90ff"/>
<rect x="971.5" y="506.6" width="3" height="1.9" fill="#eee27a"/>
<rect x="978.6" y="506.6" width="3" height="1.9" fill="#eee27a"/>
<rect x="988.7" y="516.7" width="3" height="1.9" fill="#eee27a"/>
<rect x="993.0" y="516.7" width="3" height="1.9" fill="#eee27a"/>
<rect x="998.7" y="506.6" width="3" height="1.9" fill="#eee27a"/>
<rect x="1001.0" y="488.0" width="3" height="1.9" fill="#eee27a"/>
<rect x="1004.3" y="471.7" width="2.3" height="17.2" fill="#ff0000"/>
<rect x="1010.6" y="461.6" width="2.3" height="10.0" fill="#1e90ff"/>
<rect x="1007.3" y="470.8" width="3" height="1.9" fill="#eee27a"/>
<rect x="1014.8" y="488.0" width="8.1" height="1.9" fill="#eee27a"/>
<rect x="1024.5" y="470.8" width="3" height="1.9" fill="#eee27a"/>
<rect x="1027.4" y="498.0" width="3" height="1.9" fill="#eee27a"/>
<rect x="1030.3" y="488.0" width="3" height="1.9" fill="#eee27a"/>
<rect x="1043.2" y="506.6" width="3" height="1.9" fill="#eee27a"/>
<rect x="1051.8" y="480.8" width="3" height="1.9" fill="#eee27a"/>
<rect x="1058.9" y="498.0" width="3" height="1.9" fill="#eee27a"/>
<rect x="1065.6" y="507.5" width="2.3" height="8.6" fill="#1e90ff"/>
<rect x="1069.0" y="516.7" width="3" height="1.9" fill="#eee27a"/>
<rect x="1078.5" y="507.5" width="2.3" height="8.6" fill="#ff0000"/>
<rect x="1081.9" y="506.6" width="3" height="1.9" fill="#eee27a"/>
<rect x="1076.0" y="526.2" width="2.3" height="8.6" fill="#1e90ff"/>
<rect x="1070.4" y="525.3" width="3" height="1.9" fill="#eee27a"/>
<rect x="1097.2" y="507.5" width="2.3" height="8.6" fill="#ff0000"/>
<rect x="1101.9" y="516.7" width="3" height="1.9" fill="#eee27a"/>
<rect x="1106.6" y="498.9" width="2.3" height="8.6" fill="#ff0000"/>
<rect x="1104.8" y="525.3" width="3" height="1.9" fill="#eee27a"/>
<rect x="1122.0" y="525.3" width="3" height="1.9" fill="#eee27a"/>
<rect x="1128.1" y="526.2" width="2.3" height="8.6" fill="#1e90ff"/>
<rect x="1130.4" y="536.2" width="2.3" height="8.6" fill="#1e90ff"/>
<rect x="1132.4" y="536.2" width="2.3" height="25.8" fill="#1e90ff"/>
<rect x="1136.2" y="544.8" width="2.3" height="44.4" fill="#1e90ff"/>
<rect x="1137.3" y="572.0" width="2.3" height="8.6" fill="#ff0000"/>
<rect x="1140.7" y="561.1" width="3" height="1.9" fill="#eee27a"/>
<rect x="1146.8" y="544.8" width="2.3" height="8.6" fill="#1e90ff"/>
<rect x="1145.0" y="552.5" width="3" height="1.9" fill="#eee27a"/>
<rect x="1152.1" y="561.1" width="3" height="1.9" fill="#eee27a"/>
<rect x="1149.3" y="571.1" width="3" height="1.9" fill="#eee27a"/>
<rect x="1159.3" y="571.1" width="3" height="1.9" fill="#eee27a"/>
<rect x="1165.0" y="571.1" width="3" height="1.9" fill="#eee27a"/>
<rect x="1171.3" y="571.1" width="3" height="1.9" fill="#eee27a"/>
<rect x="1173.6" y="543.9" width="3" height="1.9" fill="#eee27a"/>
<rect x="1177.8" y="536.2" width="2.3" height="8.6" fill="#ff0000"/>
<rect x="1181.2" y="517.6" width="2.3" height="17.2" fill="#ff0000"/>
<rect x="1185.1" y="516.7" width="3" height="1.9" fill="#eee27a"/>
<rect x="1189.4" y="525.3" width="3" height="1.9" fill="#eee27a"/>
<rect x="1195.1" y="516.7" width="3" height="1.9" fill="#eee27a"/>
<rect x="1198.0" y="535.3" width="3" height="1.9" fill="#eee27a"/>
<rect x="1205.0" y="536.2" width="2.3" height="8.6" fill="#1e90ff"/>
<rect x="1208.0" y="516.7" width="3" height="1.9" fill="#eee27a"/>
<rect x="1210.9" y="525.3" width="3" height="1.9" fill="#eee27a"/>
<rect x="1217.6" y="507.5" width="2.3" height="27.2" fill="#1e90ff"/>
<rect x="1219.5" y="516.7" width="3" height="1.9" fill="#eee27a"/>
<rect x="1222.8" y="536.2" width="2.3" height="8.6" fill="#1e90ff"/>
<rect x="1228.5" y="544.8" width="2.3" height="8.6" fill="#ff0000"/>
<rect x="1225.2" y="552.5" width="3" height="1.9" fill="#eee27a"/>
<rect x="1233.8" y="525.3" width="3" height="1.9" fill="#eee27a"/>
<rect x="1248.2" y="535.3" width="3" height="1.9" fill="#eee27a"/>
<rect x="1252.0" y="544.8" width="2.3" height="8.6" fill="#1e90ff"/>
<rect x="1255.3" y="543.9" width="3" height="1.9" fill="#eee27a"/>
<rect x="1268.5" y="543.9" width="11.0" height="1.9" fill="#eee27a"/>
<rect x="1270.9" y="526.2" width="2.3" height="8.6" fill="#ff0000"/>
<rect x="1272.6" y="535.3" width="3" height="1.9" fill="#eee27a"/>
<rect x="1278.7" y="517.6" width="2.3" height="8.6" fill="#ff0000"/>
<rect x="1281.2" y="516.7" width="3" height="1.9" fill="#eee27a"/>
<rect x="1287.3" y="526.2" width="2.3" height="8.6" fill="#1e90ff"/>
<rect x="1284.0" y="525.3" width="3" height="1.9" fill="#eee27a"/>
<rect x="1288.3" y="543.9" width="3" height="1.9" fill="#eee27a"/>
<rect x="1291.2" y="552.5" width="3" height="1.9" fill="#eee27a"/>
<rect x="1295.8" y="535.3" width="6.7" height="1.9" fill="#eee27a"/>
<rect x="1310.2" y="536.2" width="2.3" height="8.6" fill="#ff0000"/>
<rect x="1315.1" y="517.6" width="2.3" height="17.2" fill="#1e90ff"/>
<rect x="1319.9" y="525.3" width="3" height="1.9" fill="#eee27a"/>
<rect x="1327.0" y="525.3" width="3" height="1.9" fill="#eee27a"/>
<rect x="1324.2" y="535.3" width="3" height="1.9" fill="#eee27a"/>
<rect x="1326.0" y="536.2" width="2.3" height="8.6" fill="#eee27a"/>
<rect x="1332.8" y="516.7" width="3" height="1.9" fill="#eee27a"/>
<rect x="1343.2" y="488.9" width="2.3" height="8.6" fill="#ff0000"/>
<rect x="1341.4" y="506.6" width="3" height="1.9" fill="#eee27a"/>
<rect x="1348.4" y="507.5" width="2.3" height="8.6" fill="#1e90ff"/>
<rect x="1351.8" y="507.5" width="2.3" height="10.0" fill="#eee27a"/>
<rect x="1354.1" y="516.1" width="2.3" height="10.0" fill="#1e90ff"/>
<rect x="1359.8" y="507.5" width="2.3" height="8.6" fill="#ff0000"/>
<rect x="1362.9" y="516.7" width="3" height="1.9" fill="#eee27a"/>
<rect x="1365.7" y="506.6" width="3" height="1.9" fill="#eee27a"/>
<rect x="1374.3" y="498.0" width="3" height="1.9" fill="#eee27a"/>
<rect x="1375.8" y="506.6" width="3" height="1.9" fill="#eee27a"/>
<rect x="1380.5" y="517.6" width="2.3" height="8.6" fill="#ff0000"/>
<rect x="1379.0" y="526.2" width="2.3" height="8.6" fill="#1e90ff"/>
<rect x="1384.8" y="517.6" width="2.3" height="17.2" fill="#1e90ff"/>
<rect x="1387.6" y="507.5" width="2.3" height="10.0" fill="#1e90ff"/>
<rect x="1385.8" y="535.3" width="3" height="1.9" fill="#eee27a"/>
<rect x="1391.5" y="516.7" width="3" height="1.9" fill="#eee27a"/>
<rect x="1398.7" y="543.9" width="3" height="1.9" fill="#eee27a"/>
<rect x="1412.0" y="544.8" width="2.3" height="17.2" fill="#1e90ff"/>
<rect x="1408.8" y="543.9" width="3" height="1.9" fill="#eee27a"/>
<rect x="1415.9" y="561.1" width="3" height="1.9" fill="#eee27a"/>
<rect x="1414.5" y="571.1" width="3" height="1.9" fill="#eee27a"/>
<rect x="1411.8" y="544.8" width="2.3" height="17.2" fill="#1e90ff"/>
<rect x="1413.2" y="544.8" width="2.3" height="8.6" fill="#1e90ff"/>
<rect x="1418.5" y="552.5" width="3" height="1.9" fill="#eee27a"/>
<rect x="1415.7" y="561.1" width="3" height="1.9" fill="#eee27a"/>
<rect x="1414.2" y="571.1" width="3" height="1.9" fill="#eee27a"/>
<rect x="1431.3" y="534.7" width="2.3" height="10.0" fill="#ff0000"/>
<rect x="1433.3" y="526.1" width="2.3" height="8.6" fill="#ff0000"/>
<rect x="1440.4" y="526.1" width="2.3" height="8.6" fill="#1e90ff"/>
<rect x="1437.2" y="525.2" width="3" height="1.9" fill="#eee27a"/>
<rect x="1430.0" y="543.9" width="3" height="1.9" fill="#eee27a"/>
<rect x="1442.9" y="543.9" width="3" height="1.9" fill="#eee27a"/>
<rect x="1444.3" y="552.5" width="3" height="1.9" fill="#eee27a"/>
<rect x="1451.5" y="552.5" width="3" height="1.9" fill="#eee27a"/>
<rect x="1455.8" y="543.9" width="3" height="1.9" fill="#eee27a"/>
<rect x="1461.5" y="543.9" width="3" height="1.9" fill="#eee27a"/>
<rect x="1460.1" y="525.2" width="3" height="1.9" fill="#eee27a"/>
<rect x="1454.2" y="553.4" width="2.3" height="17.2" fill="#ff0000"/>
<rect x="1466.8" y="562.0" width="2.3" height="8.6" fill="#1e90ff"/>
<rect x="1472.0" y="572.0" width="2.3" height="53.0" fill="#1e90ff"/>
<rect x="1474.8" y="590.7" width="2.3" height="27.2" fill="#ff0000"/>
<rect x="1477.3" y="599.8" width="3" height="1.9" fill="#eee27a"/>
<rect x="1478.7" y="571.1" width="3" height="1.9" fill="#eee27a"/>
<rect x="1480.5" y="552.5" width="11.0" height="1.9" fill="#eee27a"/>
<rect x="1492.0" y="544.8" width="2.3" height="8.6" fill="#ff0000"/>
<rect x="1494.9" y="526.1" width="2.3" height="18.6" fill="#ff0000"/>
<rect x="1500.2" y="543.9" width="3" height="1.9" fill="#eee27a"/>
<rect x="1500.2" y="561.1" width="3" height="1.9" fill="#eee27a"/>
<rect x="1508.8" y="571.1" width="3" height="1.9" fill="#eee27a"/>
<rect x="1507.7" y="579.7" width="16.7" height="1.9" fill="#eee27a"/>
<rect x="1517.8" y="580.6" width="2.3" height="8.6" fill="#ff0000"/>
<rect x="1524.9" y="599.8" width="9.6" height="1.9" fill="#eee27a"/>
<rect x="1527.0" y="600.7" width="2.3" height="17.2" fill="#1e90ff"/>
<rect x="1534.9" y="579.7" width="6.7" height="1.9" fill="#eee27a"/>
<rect x="1536.1" y="589.8" width="3" height="1.9" fill="#eee27a"/>
<rect x="1544.2" y="590.7" width="2.3" height="8.6" fill="#1e90ff"/>
<rect x="1546.1" y="589.8" width="3" height="1.9" fill="#eee27a"/>
<rect x="1550.4" y="579.7" width="3" height="1.9" fill="#eee27a"/>
<rect x="1563.3" y="571.1" width="3" height="1.9" fill="#eee27a"/>
<rect x="1565.2" y="580.6" width="2.3" height="8.6" fill="#1e90ff"/>
<rect x="1568.0" y="562.0" width="2.3" height="8.6" fill="#ff0000"/>
<rect x="1577.7" y="552.5" width="3" height="1.9" fill="#eee27a"/>
<rect x="1580.5" y="543.9" width="3" height="1.9" fill="#eee27a"/>
<rect x="1587.7" y="552.5" width="3" height="1.9" fill="#eee27a"/>
<rect x="1592.0" y="561.1" width="3" height="1.9" fill="#eee27a"/>
<rect x="1597.7" y="543.9" width="3" height="1.9" fill="#eee27a"/>
<rect x="1606.1" y="526.1" width="2.3" height="18.6" fill="#1e90ff"/>
<rect x="1606.9" y="543.9" width="3" height="1.9" fill="#eee27a"/>
<rect x="1612.5" y="517.5" width="2.3" height="17.2" fill="#ff0000"/>
<rect x="1613.9" y="536.2" width="2.3" height="8.6" fill="#1e90ff"/>
<rect x="1610.6" y="525.2" width="3" height="1.9" fill="#eee27a"/>
<rect x="1619.2" y="561.1" width="3" height="1.9" fill="#eee27a"/>
<rect x="1624.1" y="552.5" width="3" height="1.9" fill="#eee27a"/>
<rect x="1627.8" y="561.1" width="3" height="1.9" fill="#eee27a"/>
<rect x="1637.9" y="561.1" width="3" height="1.9" fill="#eee27a"/>
<rect x="1645.0" y="543.9" width="3" height="1.9" fill="#eee27a"/>
<rect x="1662.2" y="571.1" width="3" height="1.9" fill="#eee27a"/>
<rect x="1665.1" y="561.1" width="3" height="1.9" fill="#eee27a"/>
<rect x="1682.3" y="561.1" width="3" height="1.9" fill="#eee27a"/>
<rect x="1680.9" y="571.1" width="3" height="1.9" fill="#eee27a"/>
<rect x="1711.0" y="535.3" width="3" height="1.9" fill="#eee27a"/>
<rect x="1715.8" y="543.9" width="3" height="1.9" fill="#eee27a"/>
<rect x="1722.4" y="525.2" width="3" height="1.9" fill="#eee27a"/>
<rect x="1723.9" y="516.6" width="3" height="1.9" fill="#eee27a"/>
<rect x="1745.4" y="571.1" width="3" height="1.9" fill="#eee27a"/>
<rect x="1775.9" y="553.4" width="2.3" height="8.6" fill="#1e90ff"/>
<rect x="1782.6" y="552.5" width="3" height="1.9" fill="#eee27a"/>
<rect x="1802.7" y="552.5" width="3" height="1.9" fill="#eee27a"/>
<rect x="1807.0" y="535.3" width="3" height="1.9" fill="#eee27a"/>
<rect x="1818.5" y="561.1" width="3" height="1.9" fill="#eee27a"/>
<rect x="1827.7" y="543.9" width="3" height="1.9" fill="#eee27a"/>
<rect x="1838.0" y="535.3" width="3" height="1.9" fill="#eee27a"/>
<rect x="1845.7" y="552.5" width="3" height="1.9" fill="#eee27a"/>
<rect x="1854.3" y="571.1" width="3" height="1.9" fill="#eee27a"/>
<rect x="1865.8" y="571.1" width="3" height="1.9" fill="#eee27a"/>
<rect x="1876.4" y="571.1" width="3" height="1.9" fill="#eee27a"/>
<rect x="1890.0" y="572.0" width="2.3" height="8.6" fill="#1e90ff"/>
<rect x="1887.9" y="561.1" width="3" height="1.9" fill="#eee27a"/>
<rect x="1895.9" y="552.5" width="3" height="1.9" fill="#eee27a"/>
</g>
<g clip-path="url(#cp2)" fill="#ff0000">
<rect x="11.0" y="809.5" width="3.1" height="4.1"/>
<rect x="12.6" y="809.1" width="3.1" height="4.5"/>
<rect x="14.1" y="809.1" width="3.1" height="8.3"/>
<rect x="15.6" y="814.0" width="3.1" height="7.4"/>
<rect x="17.1" y="818.0" width="3.1" height="7.0"/>
<rect x="18.7" y="821.6" width="3.1" height="3.6"/>
<rect x="20.2" y="818.5" width="3.1" height="6.6"/>
<rect x="21.7" y="815.0" width="3.1" height="7.0"/>
<rect x="23.3" y="809.3" width="3.1" height="9.1"/>
<rect x="24.8" y="809.3" width="3.1" height="19.3"/>
<rect x="26.3" y="823.3" width="3.1" height="5.3"/>
<rect x="27.9" y="823.3" width="3.1" height="4.8"/>
<rect x="29.4" y="823.1" width="3.1" height="5.0"/>
<rect x="30.9" y="821.7" width="3.1" height="4.8"/>
<rect x="32.5" y="821.7" width="3.1" height="6.2"/>
<rect x="34.0" y="819.7" width="3.1" height="8.2"/>
<rect x="35.5" y="819.7" width="3.1" height="4.3"/>
<rect x="37.0" y="820.6" width="3.1" height="5.4"/>
<rect x="38.6" y="822.6" width="3.1" height="4.9"/>
<rect x="40.1" y="824.2" width="3.1" height="7.1"/>
<rect x="41.6" y="827.8" width="3.1" height="7.8"/>
<rect x="43.2" y="832.2" width="3.1" height="7.6"/>
<rect x="44.7" y="836.4" width="3.1" height="4.8"/>
<rect x="46.2" y="837.7" width="3.1" height="4.0"/>
<rect x="47.8" y="838.3" width="3.1" height="4.0"/>
<rect x="49.3" y="834.9" width="3.1" height="7.4"/>
<rect x="50.8" y="829.5" width="3.1" height="8.8"/>
<rect x="52.3" y="817.1" width="3.1" height="15.8"/>
<rect x="53.9" y="816.9" width="3.1" height="3.6"/>
<rect x="55.4" y="815.3" width="3.1" height="5.0"/>
<rect x="56.9" y="814.1" width="3.1" height="4.6"/>
<rect x="58.5" y="814.1" width="3.1" height="9.4"/>
<rect x="60.0" y="815.8" width="3.1" height="7.7"/>
<rect x="61.5" y="815.8" width="3.1" height="4.9"/>
<rect x="63.1" y="817.3" width="3.1" height="3.9"/>
<rect x="64.6" y="817.8" width="3.1" height="8.7"/>
<rect x="66.1" y="817.4" width="3.1" height="9.2"/>
<rect x="67.6" y="817.4" width="3.1" height="4.3"/>
<rect x="69.2" y="817.9" width="3.1" height="3.8"/>
<rect x="70.7" y="817.9" width="3.1" height="3.9"/>
<rect x="72.2" y="818.4" width="3.1" height="5.6"/>
<rect x="73.8" y="820.6" width="3.1" height="4.3"/>
<rect x="75.3" y="821.5" width="3.1" height="4.9"/>
<rect x="76.8" y="822.9" width="3.1" height="3.8"/>
<rect x="78.4" y="822.0" width="3.1" height="4.7"/>
<rect x="79.9" y="819.2" width="3.1" height="6.2"/>
<rect x="81.4" y="815.8" width="3.1" height="6.8"/>
<rect x="82.9" y="815.3" width="3.1" height="3.9"/>
<rect x="84.5" y="811.5" width="3.1" height="7.1"/>
<rect x="86.0" y="811.5" width="3.1" height="7.6"/>
<rect x="87.5" y="815.7" width="3.1" height="10.2"/>
<rect x="89.1" y="818.5" width="3.1" height="7.4"/>
<rect x="90.6" y="818.5" width="3.1" height="4.8"/>
<rect x="92.1" y="813.7" width="3.1" height="9.6"/>
<rect x="93.7" y="813.7" width="3.1" height="9.3"/>
<rect x="95.2" y="819.6" width="3.1" height="3.4"/>
<rect x="96.7" y="817.4" width="3.1" height="5.6"/>
<rect x="98.2" y="815.3" width="3.1" height="5.6"/>
<rect x="99.8" y="812.9" width="3.1" height="5.8"/>
<rect x="101.3" y="806.7" width="3.1" height="9.6"/>
<rect x="102.8" y="806.7" width="3.1" height="6.3"/>
<rect x="104.4" y="809.1" width="3.1" height="3.9"/>
<rect x="105.9" y="807.0" width="3.1" height="5.5"/>
<rect x="107.4" y="806.4" width="3.1" height="4.0"/>
<rect x="109.0" y="804.6" width="3.1" height="5.1"/>
<rect x="110.5" y="804.4" width="3.1" height="3.6"/>
<rect x="112.0" y="804.4" width="3.1" height="4.4"/>
<rect x="113.5" y="805.4" width="3.1" height="3.8"/>
<rect x="115.1" y="805.8" width="3.1" height="5.4"/>
<rect x="116.6" y="807.9" width="3.1" height="3.5"/>
<rect x="118.1" y="807.9" width="3.1" height="4.4"/>
<rect x="119.7" y="808.9" width="3.1" height="5.2"/>
<rect x="121.2" y="810.7" width="3.1" height="3.5"/>
<rect x="122.7" y="810.3" width="3.1" height="3.7"/>
<rect x="124.3" y="808.7" width="3.1" height="5.1"/>
<rect x="125.8" y="805.7" width="3.1" height="6.3"/>
<rect x="127.3" y="804.8" width="3.1" height="4.3"/>
<rect x="128.8" y="802.6" width="3.1" height="5.7"/>
<rect x="130.4" y="800.5" width="3.1" height="5.4"/>
<rect x="131.9" y="800.5" width="3.1" height="6.3"/>
<rect x="133.4" y="803.4" width="3.1" height="4.2"/>
<rect x="135.0" y="804.2" width="3.1" height="6.8"/>
<rect x="136.5" y="807.6" width="3.1" height="5.5"/>
<rect x="138.0" y="807.3" width="3.1" height="5.9"/>
<rect x="139.6" y="804.2" width="3.1" height="6.5"/>
<rect x="141.1" y="801.1" width="3.1" height="6.5"/>
<rect x="142.6" y="797.5" width="3.1" height="7.1"/>
<rect x="144.1" y="797.5" width="3.1" height="5.3"/>
<rect x="145.7" y="785.7" width="3.1" height="17.1"/>
<rect x="147.2" y="785.7" width="3.1" height="7.9"/>
<rect x="148.7" y="787.6" width="3.1" height="6.0"/>
<rect x="150.3" y="783.5" width="3.1" height="7.5"/>
<rect x="151.8" y="779.9" width="3.1" height="7.0"/>
<rect x="153.3" y="777.9" width="3.1" height="5.5"/>
<rect x="154.9" y="777.9" width="3.1" height="5.8"/>
<rect x="156.4" y="780.3" width="3.1" height="6.4"/>
<rect x="157.9" y="783.3" width="3.1" height="5.4"/>
<rect x="159.4" y="785.3" width="3.1" height="6.0"/>
<rect x="161.0" y="787.9" width="3.1" height="5.7"/>
<rect x="162.5" y="790.2" width="3.1" height="6.2"/>
<rect x="164.0" y="793.0" width="3.1" height="4.7"/>
<rect x="165.6" y="794.3" width="3.1" height="4.7"/>
<rect x="167.1" y="791.0" width="3.1" height="7.9"/>
<rect x="168.6" y="791.0" width="3.1" height="7.6"/>
<rect x="170.2" y="794.5" width="3.1" height="4.1"/>
<rect x="171.7" y="794.3" width="3.1" height="3.6"/>
<rect x="173.2" y="794.3" width="3.1" height="7.4"/>
<rect x="174.7" y="787.4" width="3.1" height="14.3"/>
<rect x="176.3" y="787.4" width="3.1" height="8.3"/>
<rect x="177.8" y="785.7" width="3.1" height="10.0"/>
<rect x="179.3" y="779.1" width="3.1" height="10.0"/>
<rect x="180.9" y="779.1" width="3.1" height="11.8"/>
<rect x="182.4" y="787.5" width="3.1" height="21.2"/>
<rect x="183.9" y="798.5" width="3.1" height="10.2"/>
<rect x="185.5" y="792.4" width="3.1" height="9.5"/>
<rect x="187.0" y="785.0" width="3.1" height="10.8"/>
<rect x="188.5" y="781.3" width="3.1" height="7.1"/>
<rect x="190.0" y="781.3" width="3.1" height="5.3"/>
<rect x="191.6" y="783.2" width="3.1" height="5.3"/>
<rect x="193.1" y="785.1" width="3.1" height="4.2"/>
<rect x="194.6" y="785.9" width="3.1" height="4.4"/>
<rect x="196.2" y="786.9" width="3.1" height="4.2"/>
<rect x="197.7" y="787.7" width="3.1" height="3.7"/>
<rect x="199.2" y="787.9" width="3.1" height="3.5"/>
<rect x="200.8" y="786.4" width="3.1" height="4.9"/>
<rect x="202.3" y="786.2" width="3.1" height="3.6"/>
<rect x="203.8" y="786.2" width="3.1" height="4.5"/>
<rect x="205.3" y="787.3" width="3.1" height="4.4"/>
<rect x="206.9" y="787.4" width="3.1" height="4.3"/>
<rect x="208.4" y="786.0" width="3.1" height="4.7"/>
<rect x="209.9" y="785.9" width="3.1" height="3.5"/>
<rect x="211.5" y="785.9" width="3.1" height="3.5"/>
<rect x="213.0" y="786.0" width="3.1" height="3.5"/>
<rect x="214.5" y="784.0" width="3.1" height="5.4"/>
<rect x="216.1" y="781.8" width="3.1" height="5.7"/>
<rect x="217.6" y="781.8" width="3.1" height="6.8"/>
<rect x="219.1" y="782.2" width="3.1" height="6.4"/>
<rect x="220.6" y="780.0" width="3.1" height="5.6"/>
<rect x="222.2" y="780.0" width="3.1" height="4.0"/>
<rect x="223.7" y="780.6" width="3.1" height="5.5"/>
<rect x="225.2" y="782.6" width="3.1" height="6.3"/>
<rect x="226.8" y="781.9" width="3.1" height="7.0"/>
<rect x="228.3" y="781.9" width="3.1" height="5.9"/>
<rect x="229.8" y="780.1" width="3.1" height="7.7"/>
<rect x="231.4" y="773.9" width="3.1" height="9.5"/>
<rect x="232.9" y="769.3" width="3.1" height="8.0"/>
<rect x="234.4" y="763.7" width="3.1" height="9.0"/>
<rect x="235.9" y="760.6" width="3.1" height="6.5"/>
<rect x="237.5" y="759.3" width="3.1" height="4.8"/>
<rect x="239.0" y="756.7" width="3.1" height="5.9"/>
<rect x="240.5" y="754.1" width="3.1" height="6.0"/>
<rect x="242.1" y="750.9" width="3.1" height="6.6"/>
<rect x="243.6" y="750.9" width="3.1" height="6.3"/>
<rect x="245.1" y="753.8" width="3.1" height="5.7"/>
<rect x="246.7" y="756.1" width="3.1" height="5.5"/>
<rect x="248.2" y="758.2" width="3.1" height="5.5"/>
<rect x="249.7" y="760.3" width="3.1" height="4.9"/>
<rect x="251.2" y="761.7" width="3.1" height="5.7"/>
<rect x="252.8" y="764.0" width="3.1" height="3.9"/>
<rect x="254.3" y="764.5" width="3.1" height="7.2"/>
<rect x="255.8" y="768.3" width="3.1" height="5.8"/>
<rect x="257.4" y="770.7" width="3.1" height="5.0"/>
<rect x="258.9" y="772.3" width="3.1" height="5.0"/>
<rect x="260.4" y="773.9" width="3.1" height="5.4"/>
<rect x="262.0" y="775.9" width="3.1" height="5.5"/>
<rect x="263.5" y="776.5" width="3.1" height="5.0"/>
<rect x="265.0" y="775.3" width="3.1" height="4.6"/>
<rect x="266.5" y="774.6" width="3.1" height="4.1"/>
<rect x="268.1" y="774.6" width="3.1" height="6.5"/>
<rect x="269.6" y="771.3" width="3.1" height="9.8"/>
<rect x="271.1" y="770.4" width="3.1" height="4.3"/>
<rect x="272.7" y="769.4" width="3.1" height="4.3"/>
<rect x="274.2" y="769.4" width="3.1" height="3.9"/>
<rect x="275.7" y="769.9" width="3.1" height="5.7"/>
<rect x="277.2" y="772.2" width="3.1" height="6.7"/>
<rect x="278.8" y="775.5" width="3.1" height="5.6"/>
<rect x="280.3" y="777.7" width="3.1" height="4.6"/>
<rect x="281.8" y="777.8" width="3.1" height="4.5"/>
<rect x="283.4" y="775.8" width="3.1" height="5.3"/>
<rect x="284.9" y="773.2" width="3.1" height="6.0"/>
<rect x="286.4" y="771.9" width="3.1" height="4.7"/>
<rect x="288.0" y="771.9" width="3.1" height="5.7"/>
<rect x="289.5" y="774.2" width="3.1" height="5.5"/>
<rect x="291.0" y="776.2" width="3.1" height="5.5"/>
<rect x="292.5" y="778.3" width="3.1" height="7.5"/>
<rect x="294.1" y="779.3" width="3.1" height="6.5"/>
<rect x="295.6" y="773.4" width="3.1" height="9.3"/>
<rect x="297.1" y="765.4" width="3.1" height="11.4"/>
<rect x="298.7" y="762.8" width="3.1" height="6.0"/>
<rect x="300.2" y="762.8" width="3.1" height="6.0"/>
<rect x="301.7" y="765.3" width="3.1" height="7.3"/>
<rect x="303.3" y="769.2" width="3.1" height="8.6"/>
<rect x="304.8" y="774.4" width="3.1" height="8.7"/>
<rect x="306.3" y="779.8" width="3.1" height="10.1"/>
<rect x="307.8" y="786.5" width="3.1" height="8.9"/>
<rect x="309.4" y="791.9" width="3.1" height="6.4"/>
<rect x="310.9" y="794.9" width="3.1" height="5.9"/>
<rect x="312.4" y="797.4" width="3.1" height="14.7"/>
<rect x="314.0" y="806.2" width="3.1" height="6.0"/>
<rect x="315.5" y="806.2" width="3.1" height="6.1"/>
<rect x="317.0" y="808.9" width="3.1" height="7.2"/>
<rect x="318.6" y="812.7" width="3.1" height="5.7"/>
<rect x="320.1" y="811.6" width="3.1" height="6.8"/>
<rect x="321.6" y="806.9" width="3.1" height="8.1"/>
<rect x="323.1" y="802.1" width="3.1" height="8.2"/>
<rect x="324.7" y="798.0" width="3.1" height="7.5"/>
<rect x="326.2" y="793.4" width="3.1" height="8.0"/>
<rect x="327.7" y="789.1" width="3.1" height="7.7"/>
<rect x="329.3" y="784.0" width="3.1" height="8.5"/>
<rect x="330.8" y="784.0" width="3.1" height="4.9"/>
<rect x="332.3" y="785.5" width="3.1" height="5.0"/>
<rect x="333.9" y="787.1" width="3.1" height="3.9"/>
<rect x="335.4" y="787.6" width="3.1" height="4.7"/>
<rect x="336.9" y="788.9" width="3.1" height="4.6"/>
<rect x="338.4" y="790.1" width="3.1" height="4.3"/>
<rect x="340.0" y="791.0" width="3.1" height="5.1"/>
<rect x="341.5" y="792.7" width="3.1" height="7.2"/>
<rect x="343.0" y="796.5" width="3.1" height="7.1"/>
<rect x="344.6" y="800.2" width="3.1" height="10.3"/>
<rect x="346.1" y="807.2" width="3.1" height="31.6"/>
<rect x="347.6" y="835.4" width="3.1" height="15.9"/>
<rect x="349.2" y="847.9" width="3.1" height="8.5"/>
<rect x="350.7" y="852.9" width="3.1" height="9.1"/>
<rect x="352.2" y="858.6" width="3.1" height="8.5"/>
<rect x="353.7" y="863.8" width="3.1" height="7.8"/>
<rect x="355.3" y="868.2" width="3.1" height="4.7"/>
<rect x="356.8" y="867.7" width="3.1" height="5.1"/>
<rect x="358.3" y="864.2" width="3.1" height="6.9"/>
<rect x="359.9" y="861.4" width="3.1" height="6.2"/>
<rect x="361.4" y="859.8" width="3.1" height="5.0"/>
<rect x="362.9" y="857.5" width="3.1" height="5.7"/>
<rect x="364.5" y="854.5" width="3.1" height="6.4"/>
<rect x="366.0" y="851.8" width="3.1" height="6.1"/>
<rect x="367.5" y="848.1" width="3.1" height="7.1"/>
<rect x="369.0" y="839.9" width="3.1" height="11.6"/>
<rect x="370.6" y="839.9" width="3.1" height="8.2"/>
<rect x="372.1" y="842.0" width="3.1" height="6.0"/>
<rect x="373.6" y="842.0" width="3.1" height="3.8"/>
<rect x="375.2" y="842.4" width="3.1" height="5.7"/>
<rect x="376.7" y="844.8" width="3.1" height="5.3"/>
<rect x="378.2" y="846.7" width="3.1" height="5.2"/>
<rect x="379.8" y="848.5" width="3.1" height="3.7"/>
<rect x="381.3" y="848.7" width="3.1" height="5.7"/>
<rect x="382.8" y="849.7" width="3.1" height="4.8"/>
<rect x="384.3" y="846.1" width="3.1" height="6.9"/>
<rect x="385.9" y="842.2" width="3.1" height="7.4"/>
<rect x="387.4" y="840.0" width="3.1" height="5.6"/>
<rect x="388.9" y="837.6" width="3.1" height="5.8"/>
<rect x="390.5" y="836.2" width="3.1" height="4.8"/>
<rect x="392.0" y="834.5" width="3.1" height="5.1"/>
<rect x="393.5" y="834.5" width="3.1" height="6.5"/>
<rect x="395.1" y="837.5" width="3.1" height="3.6"/>
<rect x="396.6" y="837.7" width="3.1" height="14.2"/>
<rect x="398.1" y="848.5" width="3.1" height="10.1"/>
<rect x="399.6" y="855.2" width="3.1" height="10.6"/>
<rect x="401.2" y="862.4" width="3.1" height="10.8"/>
<rect x="402.7" y="869.8" width="3.1" height="6.1"/>
<rect x="404.2" y="872.5" width="3.1" height="5.4"/>
<rect x="405.8" y="874.5" width="3.1" height="5.4"/>
<rect x="407.3" y="876.6" width="3.1" height="5.4"/>
<rect x="408.8" y="878.6" width="3.1" height="7.6"/>
<rect x="410.4" y="880.3" width="3.1" height="5.9"/>
<rect x="411.9" y="878.5" width="3.1" height="5.2"/>
<rect x="413.4" y="875.9" width="3.1" height="6.0"/>
<rect x="414.9" y="872.9" width="3.1" height="6.4"/>
<rect x="416.5" y="871.3" width="3.1" height="5.0"/>
<rect x="418.0" y="868.0" width="3.1" height="6.7"/>
<rect x="419.5" y="866.2" width="3.1" height="5.1"/>
<rect x="421.1" y="863.4" width="3.1" height="6.2"/>
<rect x="422.6" y="861.3" width="3.1" height="5.5"/>
<rect x="424.1" y="857.6" width="3.1" height="7.1"/>
<rect x="425.7" y="857.0" width="3.1" height="4.1"/>
<rect x="427.2" y="855.3" width="3.1" height="5.1"/>
<rect x="428.7" y="852.9" width="3.1" height="5.8"/>
<rect x="430.2" y="851.1" width="3.1" height="5.2"/>
<rect x="431.8" y="849.5" width="3.1" height="5.0"/>
<rect x="433.3" y="848.0" width="3.1" height="4.9"/>
<rect x="434.8" y="848.0" width="3.1" height="6.7"/>
<rect x="436.4" y="850.2" width="3.1" height="4.5"/>
<rect x="437.9" y="843.4" width="3.1" height="10.2"/>
<rect x="439.4" y="843.4" width="3.1" height="8.2"/>
<rect x="441.0" y="845.5" width="3.1" height="6.1"/>
<rect x="442.5" y="845.5" width="3.1" height="10.8"/>
<rect x="444.0" y="849.6" width="3.1" height="6.6"/>
<rect x="445.5" y="849.6" width="3.1" height="6.5"/>
<rect x="447.1" y="852.8" width="3.1" height="6.6"/>
<rect x="448.6" y="856.0" width="3.1" height="10.4"/>
<rect x="450.1" y="862.8" width="3.1" height="3.6"/>
<rect x="451.7" y="862.8" width="3.1" height="18.6"/>
<rect x="453.2" y="872.4" width="3.1" height="9.0"/>
<rect x="454.7" y="872.4" width="3.1" height="5.6"/>
<rect x="456.3" y="873.8" width="3.1" height="4.2"/>
<rect x="457.8" y="871.8" width="3.1" height="5.4"/>
<rect x="459.3" y="865.4" width="3.1" height="9.8"/>
<rect x="460.8" y="863.3" width="3.1" height="5.6"/>
<rect x="462.4" y="863.3" width="3.1" height="4.2"/>
<rect x="463.9" y="859.7" width="3.1" height="7.8"/>
<rect x="465.4" y="856.1" width="3.1" height="6.9"/>
<rect x="467.0" y="851.7" width="3.1" height="7.8"/>
<rect x="468.5" y="846.9" width="3.1" height="8.2"/>
<rect x="470.0" y="842.1" width="3.1" height="8.2"/>
<rect x="471.6" y="837.0" width="3.1" height="8.5"/>
<rect x="473.1" y="832.5" width="3.1" height="8.0"/>
<rect x="474.6" y="829.0" width="3.1" height="6.9"/>
<rect x="476.1" y="827.4" width="3.1" height="5.0"/>
<rect x="477.7" y="825.2" width="3.1" height="5.6"/>
<rect x="479.2" y="822.9" width="3.1" height="5.7"/>
<rect x="480.7" y="816.6" width="3.1" height="9.7"/>
<rect x="482.3" y="816.6" width="3.1" height="7.4"/>
<rect x="483.8" y="820.6" width="3.1" height="10.4"/>
<rect x="485.3" y="827.6" width="3.1" height="6.5"/>
<rect x="486.9" y="830.7" width="3.1" height="5.1"/>
<rect x="488.4" y="829.2" width="3.1" height="6.6"/>
<rect x="489.9" y="825.2" width="3.1" height="7.4"/>
<rect x="491.4" y="823.9" width="3.1" height="4.7"/>
<rect x="493.0" y="823.1" width="3.1" height="4.2"/>
<rect x="494.5" y="823.1" width="3.1" height="4.9"/>
<rect x="496.0" y="822.9" width="3.1" height="5.1"/>
<rect x="497.6" y="822.9" width="3.1" height="6.1"/>
<rect x="499.1" y="825.6" width="3.1" height="9.2"/>
<rect x="500.6" y="831.4" width="3.1" height="4.0"/>
<rect x="502.2" y="829.6" width="3.1" height="5.8"/>
<rect x="503.7" y="827.1" width="3.1" height="6.0"/>
<rect x="505.2" y="827.1" width="3.1" height="6.1"/>
<rect x="506.7" y="819.7" width="3.1" height="13.4"/>
<rect x="508.3" y="815.5" width="3.1" height="7.6"/>
<rect x="509.8" y="811.3" width="3.1" height="7.6"/>
<rect x="511.3" y="808.2" width="3.1" height="6.5"/>
<rect x="512.9" y="806.2" width="3.1" height="5.3"/>
<rect x="514.4" y="804.7" width="3.1" height="4.9"/>
<rect x="515.9" y="802.0" width="3.1" height="6.1"/>
<rect x="517.5" y="799.6" width="3.1" height="5.8"/>
<rect x="519.0" y="798.3" width="3.1" height="4.7"/>
<rect x="520.5" y="798.3" width="3.1" height="3.6"/>
<rect x="522.0" y="798.5" width="3.1" height="3.7"/>
<rect x="523.6" y="798.8" width="3.1" height="8.7"/>
<rect x="525.1" y="798.6" width="3.1" height="8.9"/>
<rect x="526.6" y="798.6" width="3.1" height="4.3"/>
<rect x="528.2" y="799.5" width="3.1" height="4.0"/>
<rect x="529.7" y="799.4" width="3.1" height="4.1"/>
<rect x="531.2" y="799.4" width="3.1" height="5.1"/>
<rect x="532.8" y="801.1" width="3.1" height="8.7"/>
<rect x="534.3" y="805.0" width="3.1" height="4.8"/>
<rect x="535.8" y="805.0" width="3.1" height="5.4"/>
<rect x="537.3" y="807.0" width="3.1" height="5.4"/>
<rect x="538.9" y="809.1" width="3.1" height="5.4"/>
<rect x="540.4" y="811.1" width="3.1" height="5.4"/>
<rect x="541.9" y="813.1" width="3.1" height="9.5"/>
<rect x="543.5" y="819.2" width="3.1" height="10.1"/>
<rect x="545.0" y="825.9" width="3.1" height="10.1"/>
<rect x="546.5" y="832.4" width="3.1" height="3.6"/>
<rect x="548.1" y="832.4" width="3.1" height="8.3"/>
<rect x="549.6" y="831.5" width="3.1" height="9.2"/>
<rect x="551.1" y="830.1" width="3.1" height="4.8"/>
<rect x="552.6" y="829.4" width="3.1" height="4.1"/>
<rect x="554.2" y="829.0" width="3.1" height="3.8"/>
<rect x="555.7" y="829.0" width="3.1" height="4.2"/>
<rect x="557.2" y="829.8" width="3.1" height="4.9"/>
<rect x="558.8" y="829.8" width="3.1" height="4.8"/>
<rect x="560.3" y="829.8" width="3.1" height="9.8"/>
<rect x="561.8" y="836.2" width="3.1" height="7.0"/>
<rect x="563.4" y="839.9" width="3.1" height="5.2"/>
<rect x="564.9" y="841.7" width="3.1" height="5.0"/>
<rect x="566.4" y="843.4" width="3.1" height="5.7"/>
<rect x="567.9" y="845.7" width="3.1" height="5.2"/>
<rect x="569.5" y="847.4" width="3.1" height="3.7"/>
<rect x="571.0" y="844.3" width="3.1" height="6.8"/>
<rect x="572.5" y="839.1" width="3.1" height="8.6"/>
<rect x="574.1" y="833.7" width="3.1" height="8.9"/>
<rect x="575.6" y="833.7" width="3.1" height="9.6"/>
<rect x="577.1" y="839.9" width="3.1" height="4.6"/>
<rect x="578.7" y="841.1" width="3.1" height="6.8"/>
<rect x="580.2" y="844.4" width="3.1" height="7.4"/>
<rect x="581.7" y="848.4" width="3.1" height="11.1"/>
<rect x="583.2" y="852.8" width="3.1" height="6.7"/>
<rect x="584.8" y="848.8" width="3.1" height="7.4"/>
<rect x="586.3" y="844.9" width="3.1" height="7.3"/>
<rect x="587.8" y="841.5" width="3.1" height="6.8"/>
<rect x="589.4" y="840.9" width="3.1" height="4.0"/>
<rect x="590.9" y="840.9" width="3.1" height="5.8"/>
<rect x="592.4" y="843.3" width="3.1" height="6.4"/>
<rect x="594.0" y="846.4" width="3.1" height="7.3"/>
<rect x="595.5" y="850.2" width="3.1" height="5.3"/>
<rect x="597.0" y="852.1" width="3.1" height="6.8"/>
<rect x="598.5" y="855.6" width="3.1" height="6.1"/>
<rect x="600.1" y="858.3" width="3.1" height="6.2"/>
<rect x="601.6" y="856.5" width="3.1" height="8.0"/>
<rect x="603.1" y="856.5" width="3.1" height="11.6"/>
<rect x="604.7" y="864.7" width="3.1" height="5.3"/>
<rect x="606.2" y="866.6" width="3.1" height="5.7"/>
<rect x="607.7" y="868.9" width="3.1" height="4.5"/>
<rect x="609.3" y="870.1" width="3.1" height="3.8"/>
<rect x="610.8" y="870.5" width="3.1" height="5.4"/>
<rect x="612.3" y="872.4" width="3.1" height="4.9"/>
<rect x="613.8" y="874.0" width="3.1" height="4.4"/>
<rect x="615.4" y="874.9" width="3.1" height="5.7"/>
<rect x="616.9" y="877.2" width="3.1" height="5.4"/>
<rect x="618.4" y="876.0" width="3.1" height="6.7"/>
<rect x="620.0" y="871.6" width="3.1" height="7.8"/>
<rect x="621.5" y="868.3" width="3.1" height="6.7"/>
<rect x="623.0" y="862.7" width="3.1" height="9.0"/>
<rect x="624.6" y="862.7" width="3.1" height="9.3"/>
<rect x="626.1" y="868.7" width="3.1" height="4.1"/>
<rect x="627.6" y="868.9" width="3.1" height="3.9"/>
<rect x="629.1" y="868.9" width="3.1" height="3.7"/>
<rect x="630.7" y="869.1" width="3.1" height="5.3"/>
<rect x="632.2" y="871.0" width="3.1" height="4.5"/>
<rect x="633.7" y="872.1" width="3.1" height="5.7"/>
<rect x="635.3" y="874.4" width="3.1" height="5.5"/>
<rect x="636.8" y="876.4" width="3.1" height="5.3"/>
<rect x="638.3" y="878.3" width="3.1" height="6.7"/>
<rect x="639.9" y="881.6" width="3.1" height="5.3"/>
<rect x="641.4" y="883.4" width="3.1" height="5.2"/>
<rect x="642.9" y="885.2" width="3.1" height="4.8"/>
<rect x="644.4" y="885.1" width="3.1" height="5.0"/>
<rect x="646.0" y="878.9" width="3.1" height="9.6"/>
<rect x="647.5" y="878.9" width="3.1" height="9.2"/>
<rect x="649.0" y="881.2" width="3.1" height="6.9"/>
<rect x="650.6" y="881.2" width="3.1" height="5.6"/>
<rect x="652.1" y="881.2" width="3.1" height="5.6"/>
<rect x="653.6" y="875.3" width="3.1" height="9.3"/>
<rect x="655.2" y="875.3" width="3.1" height="4.5"/>
<rect x="656.7" y="874.3" width="3.1" height="5.5"/>
<rect x="658.2" y="873.5" width="3.1" height="4.2"/>
<rect x="659.7" y="873.5" width="3.1" height="10.7"/>
<rect x="661.3" y="876.5" width="3.1" height="7.7"/>
<rect x="662.8" y="872.5" width="3.1" height="7.4"/>
<rect x="664.3" y="872.5" width="3.1" height="11.6"/>
<rect x="665.9" y="880.7" width="3.1" height="4.8"/>
<rect x="667.4" y="882.1" width="3.1" height="4.7"/>
<rect x="668.9" y="882.2" width="3.1" height="4.6"/>
<rect x="670.5" y="875.3" width="3.1" height="10.3"/>
<rect x="672.0" y="872.5" width="3.1" height="6.3"/>
<rect x="673.5" y="872.5" width="3.1" height="8.3"/>
<rect x="675.0" y="877.4" width="3.1" height="8.4"/>
<rect x="676.6" y="882.4" width="3.1" height="6.5"/>
<rect x="678.1" y="885.5" width="3.1" height="6.9"/>
<rect x="679.6" y="887.7" width="3.1" height="4.8"/>
<rect x="681.2" y="887.7" width="3.1" height="8.4"/>
<rect x="682.7" y="888.6" width="3.1" height="7.5"/>
<rect x="684.2" y="884.4" width="3.1" height="7.6"/>
<rect x="685.8" y="881.4" width="3.1" height="6.4"/>
<rect x="687.3" y="877.7" width="3.1" height="7.1"/>
<rect x="688.8" y="875.8" width="3.1" height="5.3"/>
<rect x="690.3" y="874.6" width="3.1" height="4.7"/>
<rect x="691.9" y="872.3" width="3.1" height="5.7"/>
<rect x="693.4" y="872.3" width="3.1" height="8.1"/>
<rect x="694.9" y="870.0" width="3.1" height="10.5"/>
<rect x="696.5" y="867.2" width="3.1" height="6.1"/>
<rect x="698.0" y="866.8" width="3.1" height="3.8"/>
<rect x="699.5" y="866.1" width="3.1" height="4.1"/>
<rect x="701.1" y="866.1" width="3.1" height="8.1"/>
<rect x="702.6" y="863.3" width="3.1" height="10.9"/>
<rect x="704.1" y="861.5" width="3.1" height="5.2"/>
<rect x="705.6" y="859.8" width="3.1" height="5.1"/>
<rect x="707.2" y="855.0" width="3.1" height="8.2"/>
<rect x="708.7" y="851.1" width="3.1" height="7.3"/>
<rect x="710.2" y="850.8" width="3.1" height="3.6"/>
<rect x="711.8" y="850.0" width="3.1" height="4.2"/>
<rect x="713.3" y="849.1" width="3.1" height="4.3"/>
<rect x="714.8" y="848.9" width="3.1" height="3.6"/>
<rect x="716.4" y="848.3" width="3.1" height="4.1"/>
<rect x="717.9" y="847.4" width="3.1" height="4.2"/>
<rect x="719.4" y="847.1" width="3.1" height="3.7"/>
<rect x="720.9" y="847.0" width="3.1" height="3.5"/>
<rect x="722.5" y="847.0" width="3.1" height="4.9"/>
<rect x="724.0" y="848.3" width="3.1" height="3.6"/>
<rect x="725.5" y="847.0" width="3.1" height="4.7"/>
<rect x="727.1" y="847.0" width="3.1" height="4.4"/>
<rect x="728.6" y="846.7" width="3.1" height="4.7"/>
<rect x="730.1" y="846.4" width="3.1" height="3.7"/>
<rect x="731.7" y="846.0" width="3.1" height="3.8"/>
<rect x="733.2" y="846.0" width="3.1" height="3.8"/>
<rect x="734.7" y="846.4" width="3.1" height="5.5"/>
<rect x="736.2" y="848.5" width="3.1" height="6.3"/>
<rect x="737.8" y="851.4" width="3.1" height="5.1"/>
<rect x="739.3" y="853.1" width="3.1" height="4.4"/>
<rect x="740.8" y="851.7" width="3.1" height="5.8"/>
<rect x="742.4" y="849.1" width="3.1" height="6.0"/>
<rect x="743.9" y="845.4" width="3.1" height="7.1"/>
<rect x="745.4" y="842.9" width="3.1" height="5.9"/>
<rect x="747.0" y="839.7" width="3.1" height="6.6"/>
<rect x="748.5" y="831.7" width="3.1" height="11.4"/>
<rect x="750.0" y="831.7" width="3.1" height="6.0"/>
<rect x="751.5" y="833.1" width="3.1" height="4.6"/>
<rect x="753.1" y="832.2" width="3.1" height="4.4"/>
<rect x="754.6" y="830.5" width="3.1" height="5.0"/>
<rect x="756.1" y="829.5" width="3.1" height="4.5"/>
<rect x="757.7" y="827.2" width="3.1" height="5.7"/>
<rect x="759.2" y="824.4" width="3.1" height="6.2"/>
<rect x="760.7" y="822.9" width="3.1" height="4.9"/>
<rect x="762.3" y="822.9" width="3.1" height="4.4"/>
<rect x="763.8" y="820.9" width="3.1" height="6.4"/>
<rect x="765.3" y="820.9" width="3.1" height="6.4"/>
<rect x="766.8" y="823.8" width="3.1" height="7.1"/>
<rect x="768.4" y="827.5" width="3.1" height="7.4"/>
<rect x="769.9" y="828.1" width="3.1" height="6.9"/>
<rect x="771.4" y="828.1" width="3.1" height="12.7"/>
<rect x="773.0" y="837.4" width="3.1" height="7.8"/>
<rect x="774.5" y="841.8" width="3.1" height="10.7"/>
<rect x="776.0" y="846.1" width="3.1" height="6.3"/>
<rect x="777.6" y="844.7" width="3.1" height="4.8"/>
<rect x="779.1" y="844.0" width="3.1" height="4.1"/>
<rect x="780.6" y="842.2" width="3.1" height="5.2"/>
<rect x="782.1" y="840.1" width="3.1" height="5.6"/>
<rect x="783.7" y="840.1" width="3.1" height="4.7"/>
<rect x="785.2" y="841.4" width="3.1" height="6.1"/>
<rect x="786.7" y="844.0" width="3.1" height="6.0"/>
<rect x="788.3" y="846.6" width="3.1" height="6.0"/>
<rect x="789.8" y="849.2" width="3.1" height="6.1"/>
<rect x="791.3" y="852.0" width="3.1" height="7.5"/>
<rect x="792.9" y="856.0" width="3.1" height="6.1"/>
<rect x="794.4" y="856.3" width="3.1" height="5.9"/>
<rect x="795.9" y="852.6" width="3.1" height="7.1"/>
<rect x="797.4" y="850.2" width="3.1" height="5.7"/>
<rect x="799.0" y="848.4" width="3.1" height="5.3"/>
<rect x="800.5" y="848.4" width="3.1" height="6.4"/>
<rect x="802.0" y="851.4" width="3.1" height="9.5"/>
<rect x="803.6" y="854.1" width="3.1" height="6.8"/>
<rect x="805.1" y="854.1" width="3.1" height="5.3"/>
<rect x="806.6" y="856.0" width="3.1" height="7.0"/>
<rect x="808.2" y="859.6" width="3.1" height="6.7"/>
<rect x="809.7" y="859.6" width="3.1" height="6.8"/>
<rect x="811.2" y="855.7" width="3.1" height="7.3"/>
<rect x="812.7" y="852.8" width="3.1" height="6.2"/>
<rect x="814.3" y="852.8" width="3.1" height="6.5"/>
<rect x="815.8" y="847.8" width="3.1" height="11.5"/>
<rect x="817.3" y="845.6" width="3.1" height="5.7"/>
<rect x="818.9" y="845.6" width="3.1" height="4.0"/>
<rect x="820.4" y="846.2" width="3.1" height="4.0"/>
<rect x="821.9" y="846.8" width="3.1" height="4.2"/>
<rect x="823.5" y="847.6" width="3.1" height="4.6"/>
<rect x="825.0" y="848.8" width="3.1" height="8.2"/>
<rect x="826.5" y="853.6" width="3.1" height="3.8"/>
<rect x="828.0" y="800.1" width="3.1" height="57.3"/>
<rect x="829.6" y="798.8" width="3.1" height="4.6"/>
<rect x="831.1" y="791.0" width="3.1" height="11.2"/>
<rect x="832.6" y="791.0" width="3.1" height="6.9"/>
<rect x="834.2" y="789.0" width="3.1" height="8.9"/>
<rect x="835.7" y="784.2" width="3.1" height="8.2"/>
<rect x="837.2" y="779.8" width="3.1" height="7.8"/>
<rect x="838.8" y="776.1" width="3.1" height="7.1"/>
<rect x="840.3" y="776.1" width="3.1" height="3.7"/>
<rect x="841.8" y="776.4" width="3.1" height="4.4"/>
<rect x="843.3" y="777.5" width="3.1" height="4.5"/>
<rect x="844.9" y="778.5" width="3.1" height="4.1"/>
<rect x="846.4" y="779.3" width="3.1" height="8.3"/>
<rect x="847.9" y="784.1" width="3.1" height="7.3"/>
<rect x="849.5" y="788.1" width="3.1" height="7.1"/>
<rect x="851.0" y="791.8" width="3.1" height="5.2"/>
<rect x="852.5" y="786.1" width="3.1" height="10.8"/>
<rect x="854.1" y="786.1" width="3.1" height="8.3"/>
<rect x="855.6" y="791.1" width="3.1" height="4.0"/>
<rect x="857.1" y="791.7" width="3.1" height="4.4"/>
<rect x="858.6" y="792.6" width="3.1" height="3.5"/>
<rect x="860.2" y="790.7" width="3.1" height="5.3"/>
<rect x="861.7" y="790.7" width="3.1" height="3.7"/>
<rect x="863.2" y="790.6" width="3.1" height="3.8"/>
<rect x="864.8" y="789.5" width="3.1" height="4.5"/>
<rect x="866.3" y="789.3" width="3.1" height="3.6"/>
<rect x="867.8" y="787.7" width="3.1" height="5.0"/>
<rect x="869.4" y="786.8" width="3.1" height="4.3"/>
<rect x="870.9" y="785.5" width="3.1" height="4.7"/>
<rect x="872.4" y="785.5" width="3.1" height="5.0"/>
<rect x="873.9" y="787.1" width="3.1" height="5.9"/>
<rect x="875.5" y="789.6" width="3.1" height="5.5"/>
<rect x="877.0" y="791.7" width="3.1" height="5.7"/>
<rect x="878.5" y="794.0" width="3.1" height="6.0"/>
<rect x="880.1" y="796.6" width="3.1" height="6.2"/>
<rect x="881.6" y="799.4" width="3.1" height="7.2"/>
<rect x="883.1" y="803.1" width="3.1" height="9.9"/>
<rect x="884.7" y="803.4" width="3.1" height="9.6"/>
<rect x="886.2" y="800.5" width="3.1" height="6.3"/>
<rect x="887.7" y="796.1" width="3.1" height="7.8"/>
<rect x="889.2" y="792.5" width="3.1" height="7.0"/>
<rect x="890.8" y="792.5" width="3.1" height="5.0"/>
<rect x="892.3" y="794.1" width="3.1" height="4.3"/>
<rect x="893.8" y="795.0" width="3.1" height="6.1"/>
<rect x="895.4" y="797.7" width="3.1" height="5.2"/>
<rect x="896.9" y="799.5" width="3.1" height="4.0"/>
<rect x="898.4" y="800.1" width="3.1" height="5.7"/>
<rect x="900.0" y="801.7" width="3.1" height="4.1"/>
<rect x="901.5" y="800.6" width="3.1" height="4.5"/>
<rect x="903.0" y="799.0" width="3.1" height="5.0"/>
<rect x="904.5" y="797.8" width="3.1" height="4.7"/>
<rect x="906.1" y="796.8" width="3.1" height="4.4"/>
<rect x="907.6" y="796.8" width="3.1" height="3.6"/>
<rect x="909.1" y="797.0" width="3.1" height="3.4"/>
<rect x="910.7" y="796.8" width="3.1" height="3.6"/>
<rect x="912.2" y="794.2" width="3.1" height="5.9"/>
<rect x="913.7" y="787.5" width="3.1" height="10.1"/>
<rect x="915.3" y="787.5" width="3.1" height="3.5"/>
<rect x="916.8" y="785.2" width="3.1" height="5.9"/>
<rect x="918.3" y="784.3" width="3.1" height="4.4"/>
<rect x="919.8" y="776.6" width="3.1" height="11.0"/>
<rect x="921.4" y="776.6" width="3.1" height="7.9"/>
<rect x="922.9" y="778.1" width="3.1" height="6.4"/>
<rect x="924.4" y="776.8" width="3.1" height="4.7"/>
<rect x="926.0" y="775.9" width="3.1" height="4.3"/>
<rect x="927.5" y="775.9" width="3.1" height="3.4"/>
<rect x="929.0" y="775.9" width="3.1" height="3.4"/>
<rect x="930.6" y="774.8" width="3.1" height="4.5"/>
<rect x="932.1" y="774.8" width="3.1" height="4.5"/>
<rect x="933.6" y="775.9" width="3.1" height="8.9"/>
<rect x="935.1" y="777.0" width="3.1" height="7.8"/>
<rect x="936.7" y="777.0" width="3.1" height="5.6"/>
<rect x="938.2" y="777.5" width="3.1" height="5.1"/>
<rect x="939.7" y="777.5" width="3.1" height="13.4"/>
<rect x="941.3" y="784.7" width="3.1" height="6.3"/>
<rect x="942.8" y="784.7" width="3.1" height="3.6"/>
<rect x="944.3" y="784.9" width="3.1" height="3.4"/>
<rect x="945.9" y="784.9" width="3.1" height="3.4"/>
<rect x="947.4" y="784.1" width="3.1" height="4.2"/>
<rect x="948.9" y="784.1" width="3.1" height="7.4"/>
<rect x="950.4" y="788.0" width="3.1" height="6.0"/>
<rect x="952.0" y="790.6" width="3.1" height="5.6"/>
<rect x="953.5" y="792.7" width="3.1" height="7.0"/>
<rect x="955.0" y="796.3" width="3.1" height="6.9"/>
<rect x="956.6" y="798.9" width="3.1" height="4.3"/>
<rect x="958.1" y="791.2" width="3.1" height="11.1"/>
<rect x="959.6" y="791.2" width="3.1" height="4.9"/>
<rect x="961.2" y="792.7" width="3.1" height="4.6"/>
<rect x="962.7" y="793.8" width="3.1" height="4.1"/>
<rect x="964.2" y="788.5" width="3.1" height="9.5"/>
<rect x="965.7" y="788.5" width="3.1" height="9.1"/>
<rect x="967.3" y="794.2" width="3.1" height="4.3"/>
<rect x="968.8" y="795.1" width="3.1" height="3.9"/>
<rect x="970.3" y="795.6" width="3.1" height="5.6"/>
<rect x="971.9" y="797.7" width="3.1" height="3.8"/>
<rect x="973.4" y="798.2" width="3.1" height="3.8"/>
<rect x="974.9" y="798.6" width="3.1" height="4.9"/>
<rect x="976.5" y="800.0" width="3.1" height="6.2"/>
<rect x="978.0" y="802.8" width="3.1" height="3.4"/>
<rect x="979.5" y="802.8" width="3.1" height="4.1"/>
<rect x="981.0" y="803.5" width="3.1" height="5.8"/>
<rect x="982.6" y="805.9" width="3.1" height="3.6"/>
<rect x="984.1" y="806.0" width="3.1" height="4.7"/>
<rect x="985.6" y="807.3" width="3.1" height="4.7"/>
<rect x="987.2" y="808.5" width="3.1" height="3.5"/>
<rect x="988.7" y="806.3" width="3.1" height="5.7"/>
<rect x="990.2" y="804.0" width="3.1" height="5.7"/>
<rect x="991.8" y="795.7" width="3.1" height="11.7"/>
<rect x="993.3" y="795.7" width="3.1" height="7.9"/>
<rect x="994.8" y="792.6" width="3.1" height="11.0"/>
<rect x="996.3" y="792.6" width="3.1" height="6.6"/>
<rect x="997.9" y="795.8" width="3.1" height="9.2"/>
<rect x="999.4" y="801.6" width="3.1" height="4.8"/>
<rect x="1000.9" y="802.9" width="3.1" height="4.3"/>
<rect x="1002.5" y="801.2" width="3.1" height="6.1"/>
<rect x="1004.0" y="801.2" width="3.1" height="6.1"/>
<rect x="1005.5" y="801.0" width="3.1" height="6.3"/>
<rect x="1007.1" y="799.3" width="3.1" height="5.1"/>
<rect x="1008.6" y="798.2" width="3.1" height="4.5"/>
<rect x="1010.1" y="795.2" width="3.1" height="6.4"/>
<rect x="1011.6" y="795.0" width="3.1" height="3.6"/>
<rect x="1013.2" y="795.0" width="3.1" height="6.3"/>
<rect x="1014.7" y="798.0" width="3.1" height="5.3"/>
<rect x="1016.2" y="799.9" width="3.1" height="4.9"/>
<rect x="1017.8" y="801.0" width="3.1" height="3.7"/>
<rect x="1019.3" y="801.0" width="3.1" height="3.5"/>
<rect x="1020.8" y="799.3" width="3.1" height="5.1"/>
<rect x="1022.4" y="797.4" width="3.1" height="5.3"/>
<rect x="1023.9" y="796.9" width="3.1" height="3.9"/>
<rect x="1025.4" y="796.9" width="3.1" height="8.1"/>
<rect x="1026.9" y="801.6" width="3.1" height="7.9"/>
<rect x="1028.5" y="804.9" width="3.1" height="4.6"/>
<rect x="1030.0" y="803.5" width="3.1" height="4.8"/>
<rect x="1031.5" y="801.2" width="3.1" height="5.7"/>
<rect x="1033.1" y="799.4" width="3.1" height="5.2"/>
<rect x="1034.6" y="797.5" width="3.1" height="5.2"/>
<rect x="1036.1" y="797.5" width="3.1" height="6.1"/>
<rect x="1037.7" y="800.3" width="3.1" height="6.9"/>
<rect x="1039.2" y="803.8" width="3.1" height="7.7"/>
<rect x="1040.7" y="808.1" width="3.1" height="7.6"/>
<rect x="1042.2" y="811.3" width="3.1" height="4.3"/>
<rect x="1043.8" y="808.7" width="3.1" height="6.0"/>
<rect x="1045.3" y="808.4" width="3.1" height="3.7"/>
<rect x="1046.8" y="807.2" width="3.1" height="4.6"/>
<rect x="1048.4" y="805.0" width="3.1" height="5.6"/>
<rect x="1049.9" y="804.2" width="3.1" height="4.2"/>
<rect x="1051.4" y="802.3" width="3.1" height="5.3"/>
<rect x="1053.0" y="802.3" width="3.1" height="7.5"/>
<rect x="1054.5" y="806.4" width="3.1" height="5.9"/>
<rect x="1056.0" y="808.9" width="3.1" height="7.1"/>
<rect x="1057.5" y="812.6" width="3.1" height="4.4"/>
<rect x="1059.1" y="813.3" width="3.1" height="3.7"/>
<rect x="1060.6" y="813.3" width="3.1" height="5.0"/>
<rect x="1062.1" y="813.9" width="3.1" height="4.4"/>
<rect x="1063.7" y="813.3" width="3.1" height="3.9"/>
<rect x="1065.2" y="813.3" width="3.1" height="4.9"/>
<rect x="1066.7" y="814.9" width="3.1" height="4.8"/>
<rect x="1068.3" y="816.3" width="3.1" height="4.3"/>
<rect x="1069.8" y="817.2" width="3.1" height="7.3"/>
<rect x="1071.3" y="821.1" width="3.1" height="6.9"/>
<rect x="1072.8" y="824.6" width="3.1" height="6.6"/>
<rect x="1074.4" y="827.8" width="3.1" height="8.5"/>
<rect x="1075.9" y="832.9" width="3.1" height="11.3"/>
<rect x="1077.4" y="836.5" width="3.1" height="7.7"/>
<rect x="1079.0" y="834.1" width="3.1" height="5.8"/>
<rect x="1080.5" y="830.7" width="3.1" height="6.8"/>
<rect x="1082.0" y="830.7" width="3.1" height="6.4"/>
<rect x="1083.6" y="824.6" width="3.1" height="12.4"/>
<rect x="1085.1" y="823.7" width="3.1" height="4.3"/>
<rect x="1086.6" y="823.2" width="3.1" height="4.0"/>
<rect x="1088.1" y="822.0" width="3.1" height="4.6"/>
<rect x="1089.7" y="821.7" width="3.1" height="3.7"/>
<rect x="1091.2" y="821.7" width="3.1" height="3.9"/>
<rect x="1092.7" y="821.5" width="3.1" height="4.1"/>
<rect x="1094.3" y="821.5" width="3.1" height="10.1"/>
<rect x="1095.8" y="821.5" width="3.1" height="10.1"/>
<rect x="1097.3" y="821.5" width="3.1" height="3.4"/>
<rect x="1098.9" y="821.5" width="3.1" height="3.5"/>
<rect x="1100.4" y="821.5" width="3.1" height="3.5"/>
<rect x="1101.9" y="821.5" width="3.1" height="5.2"/>
<rect x="1103.4" y="823.3" width="3.1" height="5.8"/>
<rect x="1105.0" y="825.7" width="3.1" height="5.8"/>
<rect x="1106.5" y="828.2" width="3.1" height="5.8"/>
<rect x="1108.0" y="830.6" width="3.1" height="5.8"/>
<rect x="1109.6" y="833.1" width="3.1" height="5.9"/>
<rect x="1111.1" y="835.6" width="3.1" height="5.8"/>
<rect x="1112.6" y="838.0" width="3.1" height="11.0"/>
<rect x="1114.2" y="842.9" width="3.1" height="6.1"/>
<rect x="1115.7" y="842.9" width="3.1" height="5.8"/>
<rect x="1117.2" y="845.1" width="3.1" height="3.6"/>
<rect x="1118.7" y="844.8" width="3.1" height="3.8"/>
<rect x="1120.3" y="844.4" width="3.1" height="3.8"/>
<rect x="1121.8" y="838.8" width="3.1" height="8.9"/>
<rect x="1123.3" y="838.8" width="3.1" height="9.2"/>
<rect x="1124.9" y="844.7" width="3.1" height="9.0"/>
<rect x="1126.4" y="846.1" width="3.1" height="7.5"/>
<rect x="1127.9" y="846.1" width="3.1" height="3.7"/>
<rect x="1129.5" y="843.1" width="3.1" height="6.7"/>
<rect x="1131.0" y="839.8" width="3.1" height="6.7"/>
<rect x="1132.5" y="835.2" width="3.1" height="8.0"/>
<rect x="1134.0" y="835.2" width="3.1" height="5.2"/>
<rect x="1135.6" y="824.0" width="3.1" height="16.4"/>
<rect x="1137.1" y="823.4" width="3.1" height="4.0"/>
<rect x="1138.6" y="823.2" width="3.1" height="3.6"/>
<rect x="1140.2" y="822.2" width="3.1" height="4.3"/>
<rect x="1141.7" y="821.1" width="3.1" height="4.6"/>
<rect x="1143.2" y="816.4" width="3.1" height="8.1"/>
<rect x="1144.8" y="816.4" width="3.1" height="6.1"/>
<rect x="1146.3" y="817.5" width="3.1" height="4.9"/>
<rect x="1147.8" y="816.0" width="3.1" height="4.9"/>
<rect x="1149.3" y="814.5" width="3.1" height="4.9"/>
<rect x="1150.9" y="812.5" width="3.1" height="5.3"/>
<rect x="1152.4" y="812.5" width="3.1" height="5.0"/>
<rect x="1153.9" y="814.1" width="3.1" height="3.4"/>
<rect x="1155.5" y="813.8" width="3.1" height="3.7"/>
<rect x="1157.0" y="813.8" width="3.1" height="3.9"/>
<rect x="1158.5" y="814.3" width="3.1" height="4.1"/>
<rect x="1160.1" y="815.0" width="3.1" height="3.5"/>
<rect x="1161.6" y="815.1" width="3.1" height="5.3"/>
<rect x="1163.1" y="811.4" width="3.1" height="9.0"/>
<rect x="1164.6" y="811.4" width="3.1" height="12.1"/>
<rect x="1166.2" y="820.2" width="3.1" height="6.5"/>
<rect x="1167.7" y="823.3" width="3.1" height="4.3"/>
<rect x="1169.2" y="824.1" width="3.1" height="4.7"/>
<rect x="1170.8" y="825.4" width="3.1" height="4.7"/>
<rect x="1172.3" y="826.7" width="3.1" height="5.6"/>
<rect x="1173.8" y="828.9" width="3.1" height="7.3"/>
<rect x="1175.4" y="832.8" width="3.1" height="8.2"/>
<rect x="1176.9" y="837.5" width="3.1" height="4.5"/>
<rect x="1178.4" y="838.3" width="3.1" height="3.8"/>
<rect x="1179.9" y="836.9" width="3.1" height="4.7"/>
<rect x="1181.5" y="836.9" width="3.1" height="7.0"/>
<rect x="1183.0" y="834.2" width="3.1" height="9.7"/>
<rect x="1184.5" y="832.1" width="3.1" height="5.5"/>
<rect x="1186.1" y="830.9" width="3.1" height="4.6"/>
<rect x="1187.6" y="828.0" width="3.1" height="6.3"/>
<rect x="1189.1" y="825.8" width="3.1" height="5.7"/>
<rect x="1190.7" y="824.2" width="3.1" height="4.9"/>
<rect x="1192.2" y="824.2" width="3.1" height="8.4"/>
<rect x="1193.7" y="829.3" width="3.1" height="12.0"/>
<rect x="1195.2" y="837.8" width="3.1" height="9.8"/>
<rect x="1196.8" y="844.2" width="3.1" height="17.2"/>
<rect x="1198.3" y="849.9" width="3.1" height="11.5"/>
<rect x="1199.8" y="846.6" width="3.1" height="6.7"/>
<rect x="1201.4" y="844.1" width="3.1" height="5.9"/>
<rect x="1202.9" y="844.1" width="3.1" height="16.7"/>
<rect x="1204.4" y="857.5" width="3.1" height="8.0"/>
<rect x="1206.0" y="862.1" width="3.1" height="15.8"/>
<rect x="1207.5" y="871.5" width="3.1" height="6.4"/>
<rect x="1209.0" y="870.0" width="3.1" height="4.9"/>
<rect x="1210.5" y="870.0" width="3.1" height="9.1"/>
<rect x="1212.1" y="870.5" width="3.1" height="8.6"/>
<rect x="1213.6" y="869.1" width="3.1" height="4.7"/>
<rect x="1215.1" y="869.1" width="3.1" height="3.8"/>
<rect x="1216.7" y="869.0" width="3.1" height="3.9"/>
<rect x="1218.2" y="868.1" width="3.1" height="4.3"/>
<rect x="1219.7" y="866.1" width="3.1" height="5.4"/>
<rect x="1221.3" y="866.1" width="3.1" height="3.7"/>
<rect x="1222.8" y="866.4" width="3.1" height="7.8"/>
<rect x="1224.3" y="870.8" width="3.1" height="27.5"/>
<rect x="1225.8" y="894.9" width="3.1" height="21.0"/>
<rect x="1227.4" y="912.4" width="3.1" height="4.2"/>
<rect x="1228.9" y="913.2" width="3.1" height="4.0"/>
<rect x="1230.4" y="913.8" width="3.1" height="4.9"/>
<rect x="1232.0" y="915.3" width="3.1" height="6.0"/>
<rect x="1233.5" y="917.8" width="3.1" height="10.3"/>
<rect x="1235.0" y="920.5" width="3.1" height="7.6"/>
<rect x="1236.6" y="917.4" width="3.1" height="6.6"/>
<rect x="1238.1" y="913.4" width="3.1" height="7.4"/>
<rect x="1239.6" y="908.6" width="3.1" height="8.1"/>
<rect x="1241.1" y="904.8" width="3.1" height="7.3"/>
<rect x="1242.7" y="902.1" width="3.1" height="6.1"/>
<rect x="1244.2" y="902.1" width="3.1" height="4.8"/>
<rect x="1245.7" y="903.5" width="3.1" height="10.1"/>
<rect x="1247.3" y="904.6" width="3.1" height="8.9"/>
<rect x="1248.8" y="904.6" width="3.1" height="4.3"/>
<rect x="1250.3" y="905.6" width="3.1" height="5.4"/>
<rect x="1251.9" y="907.0" width="3.1" height="4.0"/>
<rect x="1253.4" y="903.7" width="3.1" height="6.7"/>
<rect x="1254.9" y="902.4" width="3.1" height="4.7"/>
<rect x="1256.4" y="900.1" width="3.1" height="5.7"/>
<rect x="1258.0" y="896.9" width="3.1" height="6.6"/>
<rect x="1259.5" y="893.7" width="3.1" height="6.6"/>
<rect x="1261.0" y="892.8" width="3.1" height="4.3"/>
<rect x="1262.6" y="892.0" width="3.1" height="4.2"/>
<rect x="1264.1" y="892.0" width="3.1" height="4.2"/>
<rect x="1265.6" y="892.1" width="3.1" height="4.1"/>
<rect x="1267.2" y="891.5" width="3.1" height="4.0"/>
<rect x="1268.7" y="891.2" width="3.1" height="3.7"/>
<rect x="1270.2" y="891.2" width="3.1" height="4.3"/>
<rect x="1271.7" y="891.7" width="3.1" height="3.8"/>
<rect x="1273.3" y="889.2" width="3.1" height="5.9"/>
<rect x="1274.8" y="888.1" width="3.1" height="4.4"/>
<rect x="1276.3" y="885.3" width="3.1" height="6.2"/>
<rect x="1277.9" y="883.5" width="3.1" height="5.3"/>
<rect x="1279.4" y="881.8" width="3.1" height="5.1"/>
<rect x="1280.9" y="880.3" width="3.1" height="4.9"/>
<rect x="1282.5" y="878.4" width="3.1" height="5.3"/>
<rect x="1284.0" y="878.4" width="3.1" height="9.2"/>
<rect x="1285.5" y="884.2" width="3.1" height="10.7"/>
<rect x="1287.0" y="891.5" width="3.1" height="4.5"/>
<rect x="1288.6" y="892.6" width="3.1" height="16.8"/>
<rect x="1290.1" y="906.0" width="3.1" height="6.8"/>
<rect x="1291.6" y="909.4" width="3.1" height="6.5"/>
<rect x="1293.2" y="912.5" width="3.1" height="6.5"/>
<rect x="1294.7" y="915.6" width="3.1" height="6.4"/>
<rect x="1296.2" y="918.6" width="3.1" height="6.1"/>
<rect x="1297.8" y="921.3" width="3.1" height="5.3"/>
<rect x="1299.3" y="922.1" width="3.1" height="4.5"/>
<rect x="1300.8" y="919.0" width="3.1" height="6.5"/>
<rect x="1302.3" y="915.7" width="3.1" height="6.7"/>
<rect x="1303.9" y="909.1" width="3.1" height="10.0"/>
<rect x="1305.4" y="909.1" width="3.1" height="6.9"/>
<rect x="1306.9" y="912.6" width="3.1" height="4.3"/>
<rect x="1308.5" y="913.5" width="3.1" height="4.6"/>
<rect x="1310.0" y="913.4" width="3.1" height="4.7"/>
<rect x="1311.5" y="912.2" width="3.1" height="4.7"/>
<rect x="1313.1" y="912.2" width="3.1" height="4.2"/>
<rect x="1314.6" y="913.0" width="3.1" height="3.5"/>
<rect x="1316.1" y="913.1" width="3.1" height="3.7"/>
<rect x="1317.6" y="913.4" width="3.1" height="4.2"/>
<rect x="1319.2" y="914.1" width="3.1" height="5.3"/>
<rect x="1320.7" y="916.1" width="3.1" height="8.2"/>
<rect x="1322.2" y="920.9" width="3.1" height="10.3"/>
<rect x="1323.8" y="927.8" width="3.1" height="7.3"/>
<rect x="1325.3" y="931.7" width="3.1" height="4.1"/>
<rect x="1326.8" y="926.9" width="3.1" height="8.8"/>
<rect x="1328.4" y="923.2" width="3.1" height="7.1"/>
<rect x="1329.9" y="920.1" width="3.1" height="6.5"/>
<rect x="1331.4" y="918.0" width="3.1" height="5.5"/>
<rect x="1332.9" y="915.6" width="3.1" height="5.8"/>
<rect x="1334.5" y="913.8" width="3.1" height="5.2"/>
<rect x="1336.0" y="910.9" width="3.1" height="6.3"/>
<rect x="1337.5" y="909.5" width="3.1" height="4.8"/>
<rect x="1339.1" y="909.0" width="3.1" height="3.9"/>
<rect x="1340.6" y="904.2" width="3.1" height="8.2"/>
<rect x="1342.1" y="904.2" width="3.1" height="8.8"/>
<rect x="1343.7" y="909.6" width="3.1" height="3.6"/>
<rect x="1345.2" y="909.8" width="3.1" height="3.8"/>
<rect x="1346.7" y="910.2" width="3.1" height="3.4"/>
<rect x="1348.2" y="910.2" width="3.1" height="4.8"/>
<rect x="1349.8" y="911.6" width="3.1" height="4.0"/>
<rect x="1351.3" y="912.2" width="3.1" height="13.7"/>
<rect x="1352.8" y="922.5" width="3.1" height="10.9"/>
<rect x="1354.4" y="930.0" width="3.1" height="11.1"/>
<rect x="1355.9" y="937.7" width="3.1" height="10.2"/>
<rect x="1357.4" y="944.5" width="3.1" height="10.6"/>
<rect x="1359.0" y="951.8" width="3.1" height="8.4"/>
<rect x="1360.5" y="953.6" width="3.1" height="6.6"/>
<rect x="1362.0" y="953.6" width="3.1" height="5.1"/>
<rect x="1363.5" y="955.3" width="3.1" height="4.0"/>
<rect x="1365.1" y="955.3" width="3.1" height="3.9"/>
<rect x="1366.6" y="947.7" width="3.1" height="11.0"/>
<rect x="1368.1" y="936.6" width="3.1" height="14.5"/>
<rect x="1369.7" y="936.6" width="3.1" height="8.4"/>
<rect x="1371.2" y="941.6" width="3.1" height="8.6"/>
<rect x="1372.7" y="946.9" width="3.1" height="7.7"/>
<rect x="1374.3" y="951.2" width="3.1" height="8.7"/>
<rect x="1375.8" y="956.5" width="3.1" height="7.7"/>
<rect x="1377.3" y="960.8" width="3.1" height="5.4"/>
<rect x="1378.8" y="962.8" width="3.1" height="6.5"/>
<rect x="1380.4" y="965.9" width="3.1" height="7.4"/>
<rect x="1381.9" y="969.9" width="3.1" height="6.7"/>
<rect x="1383.4" y="973.2" width="3.1" height="10.3"/>
<rect x="1385.0" y="980.1" width="3.1" height="10.7"/>
<rect x="1386.5" y="987.4" width="3.1" height="18.0"/>
<rect x="1388.0" y="1001.8" width="3.1" height="3.6"/>
<rect x="1389.6" y="1001.8" width="3.1" height="3.4"/>
<rect x="1391.1" y="1001.8" width="3.1" height="4.0"/>
<rect x="1392.6" y="1002.4" width="3.1" height="3.8"/>
<rect x="1394.1" y="1002.8" width="3.1" height="4.4"/>
<rect x="1395.7" y="1003.8" width="3.1" height="5.0"/>
<rect x="1397.2" y="1005.4" width="3.1" height="13.1"/>
<rect x="1398.7" y="1015.1" width="3.1" height="8.4"/>
<rect x="1400.3" y="1007.9" width="3.1" height="15.7"/>
<rect x="1401.8" y="995.8" width="3.1" height="15.5"/>
<rect x="1403.3" y="983.4" width="3.1" height="15.8"/>
<rect x="1404.9" y="977.1" width="3.1" height="9.7"/>
<rect x="1406.4" y="977.1" width="3.1" height="9.5"/>
<rect x="1407.9" y="983.2" width="3.1" height="8.7"/>
<rect x="1409.4" y="988.5" width="3.1" height="13.0"/>
<rect x="1411.0" y="998.1" width="3.1" height="15.0"/>
<rect x="1412.5" y="1009.7" width="3.1" height="11.2"/>
<rect x="1414.0" y="1017.5" width="3.1" height="8.6"/>
<rect x="1415.6" y="1022.7" width="3.1" height="8.4"/>
<rect x="1417.1" y="1023.8" width="3.1" height="7.4"/>
<rect x="1418.6" y="1015.5" width="3.1" height="11.7"/>
<rect x="1420.2" y="1009.5" width="3.1" height="9.4"/>
<rect x="1421.7" y="1000.6" width="3.1" height="12.3"/>
<rect x="1423.2" y="998.7" width="3.1" height="5.3"/>
<rect x="1424.7" y="993.7" width="3.1" height="8.3"/>
<rect x="1426.3" y="988.4" width="3.1" height="8.8"/>
<rect x="1427.8" y="984.3" width="3.1" height="7.4"/>
<rect x="1429.3" y="980.1" width="3.1" height="7.6"/>
<rect x="1430.9" y="975.9" width="3.1" height="7.6"/>
<rect x="1432.4" y="971.8" width="3.1" height="7.6"/>
<rect x="1433.9" y="966.3" width="3.1" height="8.8"/>
<rect x="1435.5" y="962.5" width="3.1" height="7.3"/>
<rect x="1437.0" y="954.2" width="3.1" height="11.6"/>
<rect x="1438.5" y="954.2" width="3.1" height="3.8"/>
<rect x="1440.0" y="952.7" width="3.1" height="5.4"/>
<rect x="1441.6" y="951.5" width="3.1" height="4.5"/>
<rect x="1443.1" y="951.4" width="3.1" height="3.5"/>
<rect x="1444.6" y="951.4" width="3.1" height="3.4"/>
<rect x="1446.2" y="951.4" width="3.1" height="3.7"/>
<rect x="1447.7" y="951.3" width="3.1" height="3.8"/>
<rect x="1449.2" y="946.4" width="3.1" height="8.3"/>
<rect x="1450.8" y="946.4" width="3.1" height="9.6"/>
<rect x="1452.3" y="952.5" width="3.1" height="6.7"/>
<rect x="1453.8" y="955.9" width="3.1" height="18.9"/>
<rect x="1455.3" y="971.4" width="3.1" height="5.1"/>
<rect x="1456.9" y="973.1" width="3.1" height="10.9"/>
<rect x="1458.4" y="974.6" width="3.1" height="9.4"/>
<rect x="1459.9" y="968.6" width="3.1" height="9.4"/>
<rect x="1461.5" y="966.3" width="3.1" height="5.7"/>
<rect x="1463.0" y="966.3" width="3.1" height="6.5"/>
<rect x="1464.5" y="969.4" width="3.1" height="5.5"/>
<rect x="1466.1" y="971.5" width="3.1" height="6.5"/>
<rect x="1467.6" y="974.6" width="3.1" height="3.5"/>
<rect x="1469.1" y="968.4" width="3.1" height="9.6"/>
<rect x="1470.6" y="968.4" width="3.1" height="9.0"/>
<rect x="1472.2" y="974.0" width="3.1" height="27.5"/>
<rect x="1473.7" y="998.1" width="3.1" height="12.7"/>
<rect x="1475.2" y="1006.6" width="3.1" height="4.3"/>
<rect x="1476.8" y="1006.6" width="3.1" height="4.4"/>
<rect x="1478.3" y="1001.4" width="3.1" height="9.6"/>
<rect x="1479.8" y="995.2" width="3.1" height="9.6"/>
<rect x="1481.4" y="985.4" width="3.1" height="13.2"/>
<rect x="1482.9" y="983.6" width="3.1" height="5.2"/>
<rect x="1484.4" y="982.9" width="3.1" height="4.1"/>
<rect x="1485.9" y="982.9" width="3.1" height="7.7"/>
<rect x="1487.5" y="987.2" width="3.1" height="7.7"/>
<rect x="1489.0" y="991.5" width="3.1" height="8.8"/>
<rect x="1490.5" y="996.9" width="3.1" height="6.7"/>
<rect x="1492.1" y="999.6" width="3.1" height="4.0"/>
<rect x="1493.6" y="996.4" width="3.1" height="6.5"/>
<rect x="1495.1" y="991.8" width="3.1" height="8.0"/>
<rect x="1496.7" y="988.9" width="3.1" height="6.4"/>
<rect x="1498.2" y="984.3" width="3.1" height="8.0"/>
<rect x="1499.7" y="979.4" width="3.1" height="8.3"/>
<rect x="1501.2" y="979.4" width="3.1" height="5.3"/>
<rect x="1502.8" y="981.2" width="3.1" height="8.8"/>
<rect x="1504.3" y="986.6" width="3.1" height="8.4"/>
<rect x="1505.8" y="991.6" width="3.1" height="8.0"/>
<rect x="1507.4" y="995.1" width="3.1" height="4.6"/>
<rect x="1508.9" y="989.7" width="3.1" height="8.8"/>
<rect x="1510.4" y="984.6" width="3.1" height="8.5"/>
<rect x="1512.0" y="980.4" width="3.1" height="7.6"/>
<rect x="1513.5" y="980.4" width="3.1" height="6.3"/>
<rect x="1515.0" y="983.3" width="3.1" height="8.9"/>
<rect x="1516.5" y="988.9" width="3.1" height="7.0"/>
<rect x="1518.1" y="992.5" width="3.1" height="8.4"/>
<rect x="1519.6" y="997.5" width="3.1" height="6.2"/>
<rect x="1521.1" y="997.9" width="3.1" height="5.8"/>
<rect x="1522.7" y="997.9" width="3.1" height="7.4"/>
<rect x="1524.2" y="1001.6" width="3.1" height="3.7"/>
<rect x="1525.7" y="999.5" width="3.1" height="5.5"/>
<rect x="1527.3" y="997.9" width="3.1" height="5.1"/>
<rect x="1528.8" y="997.4" width="3.1" height="3.8"/>
<rect x="1530.3" y="996.9" width="3.1" height="3.9"/>
<rect x="1531.8" y="996.4" width="3.1" height="3.9"/>
<rect x="1533.4" y="995.3" width="3.1" height="4.5"/>
<rect x="1534.9" y="993.6" width="3.1" height="5.1"/>
<rect x="1536.4" y="993.6" width="3.1" height="3.5"/>
<rect x="1538.0" y="991.5" width="3.1" height="5.7"/>
<rect x="1539.5" y="991.3" width="3.1" height="3.6"/>
<rect x="1541.0" y="991.3" width="3.1" height="8.7"/>
<rect x="1542.6" y="996.6" width="3.1" height="8.7"/>
<rect x="1544.1" y="1001.9" width="3.1" height="8.5"/>
<rect x="1545.6" y="1007.1" width="3.1" height="8.7"/>
<rect x="1547.1" y="1012.4" width="3.1" height="7.2"/>
<rect x="1548.7" y="1013.5" width="3.1" height="6.2"/>
<rect x="1550.2" y="1010.7" width="3.1" height="6.1"/>
<rect x="1551.7" y="1008.0" width="3.1" height="6.1"/>
<rect x="1553.3" y="1005.0" width="3.1" height="6.4"/>
<rect x="1554.8" y="998.8" width="3.1" height="9.7"/>
<rect x="1556.3" y="998.8" width="3.1" height="6.4"/>
<rect x="1557.9" y="1001.8" width="3.1" height="4.9"/>
<rect x="1559.4" y="997.5" width="3.1" height="9.2"/>
<rect x="1560.9" y="997.5" width="3.1" height="7.5"/>
<rect x="1562.4" y="999.4" width="3.1" height="5.6"/>
<rect x="1564.0" y="999.4" width="3.1" height="6.2"/>
<rect x="1565.5" y="1002.2" width="3.1" height="4.8"/>
<rect x="1567.0" y="1003.7" width="3.1" height="6.7"/>
<rect x="1568.6" y="1007.0" width="3.1" height="5.0"/>
<rect x="1570.1" y="1008.5" width="3.1" height="7.9"/>
<rect x="1571.6" y="1006.3" width="3.1" height="10.2"/>
<rect x="1573.2" y="1003.9" width="3.1" height="5.8"/>
<rect x="1574.7" y="1002.3" width="3.1" height="5.0"/>
<rect x="1576.2" y="1002.1" width="3.1" height="3.6"/>
<rect x="1577.7" y="996.9" width="3.1" height="8.6"/>
<rect x="1579.3" y="993.9" width="3.1" height="6.4"/>
<rect x="1580.8" y="993.4" width="3.1" height="3.8"/>
<rect x="1582.3" y="991.9" width="3.1" height="4.9"/>
<rect x="1583.9" y="991.2" width="3.1" height="4.1"/>
<rect x="1585.4" y="989.9" width="3.1" height="4.6"/>
<rect x="1586.9" y="988.4" width="3.1" height="4.9"/>
<rect x="1588.5" y="987.9" width="3.1" height="3.9"/>
<rect x="1590.0" y="982.5" width="3.1" height="8.8"/>
<rect x="1591.5" y="982.3" width="3.1" height="3.6"/>
<rect x="1593.0" y="968.3" width="3.1" height="17.4"/>
<rect x="1594.6" y="961.9" width="3.1" height="9.8"/>
<rect x="1596.1" y="953.3" width="3.1" height="12.0"/>
<rect x="1597.6" y="946.0" width="3.1" height="10.7"/>
<rect x="1599.2" y="942.5" width="3.1" height="6.9"/>
<rect x="1600.7" y="941.0" width="3.1" height="4.9"/>
<rect x="1602.2" y="939.8" width="3.1" height="4.6"/>
<rect x="1603.8" y="939.5" width="3.1" height="3.7"/>
<rect x="1605.3" y="937.1" width="3.1" height="5.7"/>
<rect x="1606.8" y="935.9" width="3.1" height="4.7"/>
<rect x="1608.3" y="935.9" width="3.1" height="3.8"/>
<rect x="1609.9" y="936.0" width="3.1" height="3.7"/>
<rect x="1611.4" y="934.4" width="3.1" height="5.0"/>
<rect x="1612.9" y="933.2" width="3.1" height="4.6"/>
<rect x="1614.5" y="933.2" width="3.1" height="6.3"/>
<rect x="1616.0" y="936.1" width="3.1" height="7.0"/>
<rect x="1617.5" y="939.7" width="3.1" height="8.0"/>
<rect x="1619.1" y="944.3" width="3.1" height="7.3"/>
<rect x="1620.6" y="948.2" width="3.1" height="6.9"/>
<rect x="1622.1" y="951.6" width="3.1" height="5.6"/>
<rect x="1623.6" y="953.8" width="3.1" height="3.7"/>
<rect x="1625.2" y="954.1" width="3.1" height="3.6"/>
<rect x="1626.7" y="954.3" width="3.1" height="3.7"/>
<rect x="1628.2" y="954.6" width="3.1" height="3.7"/>
<rect x="1629.8" y="954.8" width="3.1" height="3.7"/>
<rect x="1631.3" y="954.0" width="3.1" height="4.5"/>
<rect x="1632.8" y="947.1" width="3.1" height="10.3"/>
<rect x="1634.4" y="942.8" width="3.1" height="7.7"/>
<rect x="1635.9" y="942.8" width="3.1" height="7.5"/>
<rect x="1637.4" y="946.8" width="3.1" height="8.8"/>
<rect x="1638.9" y="952.2" width="3.1" height="6.0"/>
<rect x="1640.5" y="950.6" width="3.1" height="7.6"/>
<rect x="1642.0" y="948.7" width="3.1" height="5.2"/>
<rect x="1643.5" y="946.1" width="3.1" height="6.1"/>
<rect x="1645.1" y="943.2" width="3.1" height="6.3"/>
<rect x="1646.6" y="941.3" width="3.1" height="5.3"/>
<rect x="1648.1" y="941.1" width="3.1" height="3.6"/>
<rect x="1649.7" y="938.9" width="3.1" height="5.5"/>
<rect x="1651.2" y="938.0" width="3.1" height="4.4"/>
<rect x="1652.7" y="937.3" width="3.1" height="4.0"/>
<rect x="1654.2" y="937.3" width="3.1" height="16.3"/>
<rect x="1655.8" y="950.2" width="3.1" height="15.9"/>
<rect x="1657.3" y="960.8" width="3.1" height="5.4"/>
<rect x="1658.8" y="958.7" width="3.1" height="5.4"/>
<rect x="1660.4" y="956.1" width="3.1" height="6.1"/>
<rect x="1661.9" y="954.3" width="3.1" height="5.1"/>
<rect x="1663.4" y="954.3" width="3.1" height="8.3"/>
<rect x="1665.0" y="952.3" width="3.1" height="10.3"/>
<rect x="1666.5" y="952.3" width="3.1" height="4.8"/>
<rect x="1668.0" y="953.7" width="3.1" height="4.0"/>
<rect x="1669.5" y="954.1" width="3.1" height="3.6"/>
<rect x="1671.1" y="954.1" width="3.1" height="5.6"/>
<rect x="1672.6" y="956.3" width="3.1" height="8.0"/>
<rect x="1674.1" y="960.9" width="3.1" height="11.2"/>
<rect x="1675.7" y="968.7" width="3.1" height="11.8"/>
<rect x="1677.2" y="977.1" width="3.1" height="6.3"/>
<rect x="1678.7" y="980.0" width="3.1" height="3.9"/>
<rect x="1680.3" y="980.5" width="3.1" height="5.0"/>
<rect x="1681.8" y="982.0" width="3.1" height="5.0"/>
<rect x="1683.3" y="983.6" width="3.1" height="5.0"/>
<rect x="1684.8" y="983.5" width="3.1" height="5.0"/>
<rect x="1686.4" y="982.0" width="3.1" height="4.9"/>
<rect x="1687.9" y="980.5" width="3.1" height="4.9"/>
<rect x="1689.4" y="977.4" width="3.1" height="6.5"/>
<rect x="1691.0" y="976.4" width="3.1" height="4.4"/>
<rect x="1692.5" y="972.9" width="3.1" height="6.8"/>
<rect x="1694.0" y="972.7" width="3.1" height="3.7"/>
<rect x="1695.6" y="972.0" width="3.1" height="4.1"/>
<rect x="1697.1" y="971.3" width="3.1" height="4.1"/>
<rect x="1698.6" y="969.7" width="3.1" height="5.0"/>
<rect x="1700.1" y="968.3" width="3.1" height="4.8"/>
<rect x="1701.7" y="968.3" width="3.1" height="4.6"/>
<rect x="1703.2" y="965.2" width="3.1" height="7.6"/>
<rect x="1704.7" y="963.7" width="3.1" height="4.9"/>
<rect x="1706.3" y="961.1" width="3.1" height="6.0"/>
<rect x="1707.8" y="960.7" width="3.1" height="3.8"/>
<rect x="1709.3" y="959.2" width="3.1" height="4.9"/>
<rect x="1710.9" y="957.9" width="3.1" height="4.7"/>
<rect x="1712.4" y="957.9" width="3.1" height="4.3"/>
<rect x="1713.9" y="958.2" width="3.1" height="3.9"/>
<rect x="1715.4" y="957.7" width="3.1" height="4.0"/>
<rect x="1717.0" y="957.7" width="3.1" height="4.5"/>
<rect x="1718.5" y="954.5" width="3.1" height="7.7"/>
<rect x="1720.0" y="954.5" width="3.1" height="9.0"/>
<rect x="1721.6" y="960.1" width="3.1" height="3.6"/>
<rect x="1723.1" y="960.2" width="3.1" height="5.1"/>
<rect x="1724.6" y="962.0" width="3.1" height="5.5"/>
<rect x="1726.2" y="964.1" width="3.1" height="12.7"/>
<rect x="1727.7" y="968.9" width="3.1" height="7.9"/>
<rect x="1729.2" y="968.9" width="3.1" height="5.9"/>
<rect x="1730.7" y="971.4" width="3.1" height="4.5"/>
<rect x="1732.3" y="972.5" width="3.1" height="9.0"/>
<rect x="1733.8" y="978.1" width="3.1" height="12.6"/>
<rect x="1735.3" y="987.3" width="3.1" height="13.8"/>
<rect x="1736.9" y="997.8" width="3.1" height="8.2"/>
<rect x="1738.4" y="1000.1" width="3.1" height="5.8"/>
<rect x="1739.9" y="996.7" width="3.1" height="6.8"/>
<rect x="1741.5" y="995.1" width="3.1" height="4.9"/>
<rect x="1743.0" y="984.8" width="3.1" height="13.7"/>
<rect x="1744.5" y="984.8" width="3.1" height="7.2"/>
<rect x="1746.0" y="985.9" width="3.1" height="6.1"/>
<rect x="1747.6" y="983.4" width="3.1" height="6.0"/>
<rect x="1749.1" y="982.9" width="3.1" height="3.9"/>
<rect x="1750.6" y="982.9" width="3.1" height="7.7"/>
<rect x="1752.2" y="987.2" width="3.1" height="6.2"/>
<rect x="1753.7" y="990.1" width="3.1" height="7.4"/>
<rect x="1755.2" y="994.1" width="3.1" height="7.5"/>
<rect x="1756.8" y="998.2" width="3.1" height="6.7"/>
<rect x="1758.3" y="1001.5" width="3.1" height="6.3"/>
<rect x="1759.8" y="1002.0" width="3.1" height="5.9"/>
<rect x="1761.3" y="995.6" width="3.1" height="9.7"/>
<rect x="1762.9" y="994.8" width="3.1" height="4.2"/>
<rect x="1764.4" y="985.9" width="3.1" height="12.3"/>
<rect x="1765.9" y="980.1" width="3.1" height="9.2"/>
<rect x="1767.5" y="975.5" width="3.1" height="8.1"/>
<rect x="1769.0" y="971.7" width="3.1" height="7.2"/>
<rect x="1770.5" y="971.7" width="3.1" height="3.7"/>
<rect x="1772.1" y="972.0" width="3.1" height="4.7"/>
<rect x="1773.6" y="973.3" width="3.1" height="6.3"/>
<rect x="1775.1" y="976.2" width="3.1" height="5.1"/>
<rect x="1776.6" y="977.9" width="3.1" height="5.3"/>
<rect x="1778.2" y="979.8" width="3.1" height="3.7"/>
<rect x="1779.7" y="980.0" width="3.1" height="13.1"/>
<rect x="1781.2" y="984.8" width="3.1" height="8.3"/>
<rect x="1782.8" y="984.8" width="3.1" height="4.3"/>
<rect x="1784.3" y="979.6" width="3.1" height="9.5"/>
<rect x="1785.8" y="972.7" width="3.1" height="10.3"/>
<rect x="1787.4" y="965.8" width="3.1" height="10.3"/>
<rect x="1788.9" y="959.3" width="3.1" height="9.9"/>
<rect x="1790.4" y="959.3" width="3.1" height="3.4"/>
<rect x="1791.9" y="959.4" width="3.1" height="4.7"/>
<rect x="1793.5" y="959.8" width="3.1" height="4.2"/>
<rect x="1795.0" y="959.8" width="3.1" height="4.5"/>
<rect x="1796.5" y="960.9" width="3.1" height="5.1"/>
<rect x="1798.1" y="962.6" width="3.1" height="4.0"/>
<rect x="1799.6" y="963.2" width="3.1" height="3.7"/>
<rect x="1801.1" y="961.5" width="3.1" height="5.4"/>
<rect x="1802.7" y="958.7" width="3.1" height="6.1"/>
<rect x="1804.2" y="958.7" width="3.1" height="5.4"/>
<rect x="1805.7" y="955.4" width="3.1" height="8.7"/>
<rect x="1807.2" y="953.3" width="3.1" height="5.4"/>
<rect x="1808.8" y="947.8" width="3.1" height="9.0"/>
<rect x="1810.3" y="947.8" width="3.1" height="16.1"/>
<rect x="1811.8" y="960.4" width="3.1" height="10.3"/>
<rect x="1813.4" y="967.3" width="3.1" height="10.3"/>
<rect x="1814.9" y="974.2" width="3.1" height="9.1"/>
<rect x="1816.4" y="979.9" width="3.1" height="11.5"/>
<rect x="1818.0" y="988.0" width="3.1" height="7.4"/>
<rect x="1819.5" y="991.2" width="3.1" height="4.2"/>
<rect x="1821.0" y="990.2" width="3.1" height="4.4"/>
<rect x="1822.5" y="988.1" width="3.1" height="5.5"/>
<rect x="1824.1" y="986.2" width="3.1" height="5.3"/>
<rect x="1825.6" y="986.2" width="3.1" height="8.1"/>
<rect x="1827.1" y="989.1" width="3.1" height="5.3"/>
<rect x="1828.7" y="982.8" width="3.1" height="9.7"/>
<rect x="1830.2" y="979.1" width="3.1" height="7.0"/>
<rect x="1831.7" y="974.0" width="3.1" height="8.5"/>
<rect x="1833.3" y="968.7" width="3.1" height="8.7"/>
<rect x="1834.8" y="964.5" width="3.1" height="7.6"/>
<rect x="1836.3" y="959.1" width="3.1" height="8.8"/>
<rect x="1837.8" y="959.1" width="3.1" height="9.7"/>
<rect x="1839.4" y="965.3" width="3.1" height="3.5"/>
<rect x="1840.9" y="965.3" width="3.1" height="5.2"/>
<rect x="1842.4" y="967.1" width="3.1" height="4.8"/>
<rect x="1844.0" y="968.4" width="3.1" height="4.4"/>
<rect x="1845.5" y="969.5" width="3.1" height="5.2"/>
<rect x="1847.0" y="971.3" width="3.1" height="7.2"/>
<rect x="1848.6" y="975.1" width="3.1" height="6.9"/>
<rect x="1850.1" y="978.6" width="3.1" height="7.1"/>
<rect x="1851.6" y="980.9" width="3.1" height="4.9"/>
<rect x="1853.1" y="979.3" width="3.1" height="5.0"/>
<rect x="1854.7" y="978.1" width="3.1" height="4.6"/>
<rect x="1856.2" y="976.2" width="3.1" height="5.3"/>
<rect x="1857.7" y="974.7" width="3.1" height="4.9"/>
<rect x="1859.3" y="974.3" width="3.1" height="3.8"/>
<rect x="1860.8" y="974.3" width="3.1" height="4.0"/>
<rect x="1862.3" y="974.8" width="3.1" height="3.4"/>
<rect x="1863.9" y="974.2" width="3.1" height="4.0"/>
<rect x="1865.4" y="969.4" width="3.1" height="8.2"/>
<rect x="1866.9" y="969.4" width="3.1" height="11.9"/>
<rect x="1868.4" y="977.9" width="3.1" height="7.8"/>
<rect x="1870.0" y="982.4" width="3.1" height="10.5"/>
<rect x="1871.5" y="989.3" width="3.1" height="3.6"/>
<rect x="1873.0" y="987.1" width="3.1" height="5.5"/>
<rect x="1874.6" y="985.0" width="3.1" height="5.5"/>
<rect x="1876.1" y="979.9" width="3.1" height="8.5"/>
<rect x="1877.6" y="979.9" width="3.1" height="6.4"/>
<rect x="1879.2" y="982.9" width="3.1" height="5.2"/>
<rect x="1880.7" y="984.7" width="3.1" height="5.8"/>
<rect x="1882.2" y="987.1" width="3.1" height="5.1"/>
<rect x="1883.7" y="988.8" width="3.1" height="5.8"/>
<rect x="1885.3" y="988.5" width="3.1" height="6.2"/>
<rect x="1886.8" y="988.5" width="3.1" height="8.6"/>
<rect x="1888.3" y="989.5" width="3.1" height="7.6"/>
<rect x="1889.9" y="986.8" width="3.1" height="6.1"/>
<rect x="1891.4" y="983.6" width="3.1" height="6.6"/>
<rect x="1892.9" y="981.4" width="3.1" height="5.6"/>
<rect x="1894.5" y="981.4" width="3.1" height="7.0"/>
<rect x="1896.0" y="985.0" width="3.1" height="6.7"/>
<rect x="1897.5" y="987.3" width="3.1" height="4.4"/>
<rect x="1899.0" y="976.0" width="3.1" height="14.7"/>
</g>
<rect x="9" y="74.6" width="2" height="295.4" fill="#e6e6e6"/>
<rect x="1906" y="74.6" width="2" height="295.4" fill="#e6e6e6"/>
<rect x="9" y="368" width="1899" height="2" fill="#e6e6e6"/>
<path d="M25.3,368.5 L27.2,366.2 L29.1,368.5 Z M108.1,368.5 L110.0,366.2 L111.9,368.5 Z M177.9,368.5 L179.8,366.2 L181.7,368.5 Z M201.9,368.5 L203.8,366.2 L205.7,368.5 Z M297.3,368.5 L299.2,366.2 L301.1,368.5 Z M391.1,368.5 L393.0,366.2 L394.9,368.5 Z M486.2,368.5 L488.1,366.2 L490.0,368.5 Z M581.6,368.5 L583.5,366.2 L585.4,368.5 Z M675.4,368.5 L677.3,366.2 L679.2,368.5 Z M761.4,368.5 L763.3,366.2 L765.2,368.5 Z M825.5,368.5 L827.4,366.2 L829.3,368.5 Z M920.9,368.5 L922.8,366.2 L924.7,368.5 Z M1013.0,368.5 L1014.9,366.2 L1016.8,368.5 Z M1102.0,368.5 L1103.9,366.2 L1105.8,368.5 Z M1186.4,368.5 L1188.3,366.2 L1190.2,368.5 Z M1280.2,368.5 L1282.1,366.2 L1284.0,368.5 Z M1375.6,368.5 L1377.5,366.2 L1379.4,368.5 Z M1469.4,368.5 L1471.3,366.2 L1473.2,368.5 Z M1561.3,368.5 L1563.2,366.2 L1565.1,368.5 Z M1650.6,368.5 L1652.5,366.2 L1654.4,368.5 Z M1733.4,368.5 L1735.3,366.2 L1737.2,368.5 Z M1789.6,368.5 L1791.5,366.2 L1793.4,368.5 Z M1841.2,368.5 L1843.1,366.2 L1845.0,368.5 Z M1896.1,368.5 L1898.0,366.2 L1899.9,368.5 Z " fill="#e6e6e6"/>
<path transform="translate(29.00,371.00) scale(1.2333,0.9571)" d="M1,2.6 Q1,0.5 3,0.5 Q5,0.5 5,2.6 V11.4 Q5,13.5 3,13.5 Q1,13.5 1,11.4 Z" fill="none" stroke="#c8c8c8" stroke-width="1.6" vector-effect="non-scaling-stroke" stroke-linejoin="round"/><path transform="translate(38.90,371.00) scale(1.2333,0.9571)" d="M3.9,13.5 V0.5 L0.6,9.6 H5.6" fill="none" stroke="#c8c8c8" stroke-width="1.6" vector-effect="non-scaling-stroke" stroke-linejoin="round"/>
<path transform="translate(112.30,371.00) scale(1.2333,0.9571)" d="M1,2.6 Q1,0.5 3,0.5 Q5,0.5 5,2.6 V11.4 Q5,13.5 3,13.5 Q1,13.5 1,11.4 Z" fill="none" stroke="#c8c8c8" stroke-width="1.6" vector-effect="non-scaling-stroke" stroke-linejoin="round"/><path transform="translate(122.20,371.00) scale(1.2333,0.9571)" d="M5,0.5 H1.3 L1.1,6.3 Q1.9,5.2 3,5.2 Q5.1,5.2 5.1,9.3 Q5.1,13.5 3,13.5 Q1.3,13.5 0.8,11.8" fill="none" stroke="#c8c8c8" stroke-width="1.6" vector-effect="non-scaling-stroke" stroke-linejoin="round"/>
<path transform="translate(156.30,371.00) scale(1.2333,0.9571)" d="M1,2.6 Q1,0.5 3,0.5 Q5,0.5 5,2.6 V11.4 Q5,13.5 3,13.5 Q1,13.5 1,11.4 Z" fill="none" stroke="#ffffff" stroke-width="2.3" vector-effect="non-scaling-stroke" stroke-linejoin="round"/><path transform="translate(166.20,371.00) scale(1.2333,0.9571)" d="M4.9,2.3 Q4.4,0.5 3,0.5 Q1,0.5 1,4 V10.6 Q1,13.5 3,13.5 Q5,13.5 5,10.2 Q5,6.6 3,6.6 Q1.6,6.6 1,8.4" fill="none" stroke="#ffffff" stroke-width="2.3" vector-effect="non-scaling-stroke" stroke-linejoin="round"/>
<path transform="translate(206.10,371.00) scale(1.2333,0.9571)" d="M1,2.6 Q1,0.5 3,0.5 Q5,0.5 5,2.6 V11.4 Q5,13.5 3,13.5 Q1,13.5 1,11.4 Z" fill="none" stroke="#c8c8c8" stroke-width="1.6" vector-effect="non-scaling-stroke" stroke-linejoin="round"/><path transform="translate(216.00,371.00) scale(1.2333,0.9571)" d="M1.1,11.7 Q1.6,13.5 3,13.5 Q5,13.5 5,10 V3.4 Q5,0.5 3,0.5 Q1,0.5 1,3.8 Q1,7.4 3,7.4 Q4.4,7.4 5,5.6" fill="none" stroke="#c8c8c8" stroke-width="1.6" vector-effect="non-scaling-stroke" stroke-linejoin="round"/>
<path transform="translate(303.30,371.00) scale(1.2333,0.9571)" d="M1.4,2.6 Q2.6,1.8 3.2,0.5 V13.5" fill="none" stroke="#c8c8c8" stroke-width="1.6" vector-effect="non-scaling-stroke" stroke-linejoin="round"/><path transform="translate(313.20,371.00) scale(1.2333,0.9571)" d="M1,2.6 Q1,0.5 3,0.5 Q5,0.5 5,2.6 V11.4 Q5,13.5 3,13.5 Q1,13.5 1,11.4 Z" fill="none" stroke="#c8c8c8" stroke-width="1.6" vector-effect="non-scaling-stroke" stroke-linejoin="round"/>
<path transform="translate(397.20,371.00) scale(1.2333,0.9571)" d="M1.4,2.6 Q2.6,1.8 3.2,0.5 V13.5" fill="none" stroke="#c8c8c8" stroke-width="1.6" vector-effect="non-scaling-stroke" stroke-linejoin="round"/><path transform="translate(407.10,371.00) scale(1.2333,0.9571)" d="M1.4,2.6 Q2.6,1.8 3.2,0.5 V13.5" fill="none" stroke="#c8c8c8" stroke-width="1.6" vector-effect="non-scaling-stroke" stroke-linejoin="round"/>
<path transform="translate(492.30,371.00) scale(1.2333,0.9571)" d="M1.4,2.6 Q2.6,1.8 3.2,0.5 V13.5" fill="none" stroke="#c8c8c8" stroke-width="1.6" vector-effect="non-scaling-stroke" stroke-linejoin="round"/><path transform="translate(502.20,371.00) scale(1.2333,0.9571)" d="M0.9,3 Q1.1,0.5 3,0.5 Q5.1,0.5 5.1,3.2 Q5.1,5.6 3.2,8 L0.9,13.3 H5.3" fill="none" stroke="#c8c8c8" stroke-width="1.6" vector-effect="non-scaling-stroke" stroke-linejoin="round"/>
<path transform="translate(587.70,371.00) scale(1.2333,0.9571)" d="M1.4,2.6 Q2.6,1.8 3.2,0.5 V13.5" fill="none" stroke="#c8c8c8" stroke-width="1.6" vector-effect="non-scaling-stroke" stroke-linejoin="round"/><path transform="translate(597.60,371.00) scale(1.2333,0.9571)" d="M0.9,2.2 Q1.4,0.5 3,0.5 Q5,0.5 5,3.4 Q5,6.6 2.4,6.8 Q5.1,7 5.1,10.3 Q5.1,13.5 3,13.5 Q1.2,13.5 0.8,11.6" fill="none" stroke="#c8c8c8" stroke-width="1.6" vector-effect="non-scaling-stroke" stroke-linejoin="round"/>
<path transform="translate(681.50,371.00) scale(1.2333,0.9571)" d="M1.4,2.6 Q2.6,1.8 3.2,0.5 V13.5" fill="none" stroke="#c8c8c8" stroke-width="1.6" vector-effect="non-scaling-stroke" stroke-linejoin="round"/><path transform="translate(691.40,371.00) scale(1.2333,0.9571)" d="M3.9,13.5 V0.5 L0.6,9.6 H5.6" fill="none" stroke="#c8c8c8" stroke-width="1.6" vector-effect="non-scaling-stroke" stroke-linejoin="round"/>
<path transform="translate(767.10,371.00) scale(1.2333,0.9571)" d="M1.4,2.6 Q2.6,1.8 3.2,0.5 V13.5" fill="none" stroke="#c8c8c8" stroke-width="1.6" vector-effect="non-scaling-stroke" stroke-linejoin="round"/><path transform="translate(777.00,371.00) scale(1.2333,0.9571)" d="M5,0.5 H1.3 L1.1,6.3 Q1.9,5.2 3,5.2 Q5.1,5.2 5.1,9.3 Q5.1,13.5 3,13.5 Q1.3,13.5 0.8,11.8" fill="none" stroke="#c8c8c8" stroke-width="1.6" vector-effect="non-scaling-stroke" stroke-linejoin="round"/>
<path transform="translate(831.60,371.00) scale(1.2333,0.9571)" d="M1.4,2.6 Q2.6,1.8 3.2,0.5 V13.5" fill="none" stroke="#c8c8c8" stroke-width="1.6" vector-effect="non-scaling-stroke" stroke-linejoin="round"/><path transform="translate(841.50,371.00) scale(1.2333,0.9571)" d="M0.8,0.5 H5.2 Q3.6,5 2.6,13.5" fill="none" stroke="#c8c8c8" stroke-width="1.6" vector-effect="non-scaling-stroke" stroke-linejoin="round"/>
<path transform="translate(927.00,371.00) scale(1.2333,0.9571)" d="M1.4,2.6 Q2.6,1.8 3.2,0.5 V13.5" fill="none" stroke="#c8c8c8" stroke-width="1.6" vector-effect="non-scaling-stroke" stroke-linejoin="round"/><path transform="translate(936.90,371.00) scale(1.2333,0.9571)" d="M3,6.8 Q1.1,6.8 1.1,3.7 Q1.1,0.5 3,0.5 Q4.9,0.5 4.9,3.7 Q4.9,6.8 3,6.8 Q0.9,6.8 0.9,10.2 Q0.9,13.5 3,13.5 Q5.1,13.5 5.1,10.2 Q5.1,6.8 3,6.8 Z" fill="none" stroke="#c8c8c8" stroke-width="1.6" vector-effect="non-scaling-stroke" stroke-linejoin="round"/>
<path transform="translate(1019.10,371.00) scale(1.2333,0.9571)" d="M1.4,2.6 Q2.6,1.8 3.2,0.5 V13.5" fill="none" stroke="#c8c8c8" stroke-width="1.6" vector-effect="non-scaling-stroke" stroke-linejoin="round"/><path transform="translate(1029.00,371.00) scale(1.2333,0.9571)" d="M1.1,11.7 Q1.6,13.5 3,13.5 Q5,13.5 5,10 V3.4 Q5,0.5 3,0.5 Q1,0.5 1,3.8 Q1,7.4 3,7.4 Q4.4,7.4 5,5.6" fill="none" stroke="#c8c8c8" stroke-width="1.6" vector-effect="non-scaling-stroke" stroke-linejoin="round"/>
<path transform="translate(1106.40,371.00) scale(1.2333,0.9571)" d="M0.9,3 Q1.1,0.5 3,0.5 Q5.1,0.5 5.1,3.2 Q5.1,5.6 3.2,8 L0.9,13.3 H5.3" fill="none" stroke="#c8c8c8" stroke-width="1.6" vector-effect="non-scaling-stroke" stroke-linejoin="round"/><path transform="translate(1116.30,371.00) scale(1.2333,0.9571)" d="M1,2.6 Q1,0.5 3,0.5 Q5,0.5 5,2.6 V11.4 Q5,13.5 3,13.5 Q1,13.5 1,11.4 Z" fill="none" stroke="#c8c8c8" stroke-width="1.6" vector-effect="non-scaling-stroke" stroke-linejoin="round"/>
<path transform="translate(1190.50,371.00) scale(1.2333,0.9571)" d="M0.9,3 Q1.1,0.5 3,0.5 Q5.1,0.5 5.1,3.2 Q5.1,5.6 3.2,8 L0.9,13.3 H5.3" fill="none" stroke="#c8c8c8" stroke-width="1.6" vector-effect="non-scaling-stroke" stroke-linejoin="round"/><path transform="translate(1200.40,371.00) scale(1.2333,0.9571)" d="M1.4,2.6 Q2.6,1.8 3.2,0.5 V13.5" fill="none" stroke="#c8c8c8" stroke-width="1.6" vector-effect="non-scaling-stroke" stroke-linejoin="round"/>
<path transform="translate(1284.20,371.00) scale(1.2333,0.9571)" d="M0.9,3 Q1.1,0.5 3,0.5 Q5.1,0.5 5.1,3.2 Q5.1,5.6 3.2,8 L0.9,13.3 H5.3" fill="none" stroke="#c8c8c8" stroke-width="1.6" vector-effect="non-scaling-stroke" stroke-linejoin="round"/><path transform="translate(1294.10,371.00) scale(1.2333,0.9571)" d="M0.9,3 Q1.1,0.5 3,0.5 Q5.1,0.5 5.1,3.2 Q5.1,5.6 3.2,8 L0.9,13.3 H5.3" fill="none" stroke="#c8c8c8" stroke-width="1.6" vector-effect="non-scaling-stroke" stroke-linejoin="round"/>
<path transform="translate(1379.70,371.00) scale(1.2333,0.9571)" d="M0.9,3 Q1.1,0.5 3,0.5 Q5.1,0.5 5.1,3.2 Q5.1,5.6 3.2,8 L0.9,13.3 H5.3" fill="none" stroke="#c8c8c8" stroke-width="1.6" vector-effect="non-scaling-stroke" stroke-linejoin="round"/><path transform="translate(1389.60,371.00) scale(1.2333,0.9571)" d="M0.9,2.2 Q1.4,0.5 3,0.5 Q5,0.5 5,3.4 Q5,6.6 2.4,6.8 Q5.1,7 5.1,10.3 Q5.1,13.5 3,13.5 Q1.2,13.5 0.8,11.6" fill="none" stroke="#c8c8c8" stroke-width="1.6" vector-effect="non-scaling-stroke" stroke-linejoin="round"/>
<path transform="translate(1473.20,371.00) scale(1.2333,0.9571)" d="M1,2.6 Q1,0.5 3,0.5 Q5,0.5 5,2.6 V11.4 Q5,13.5 3,13.5 Q1,13.5 1,11.4 Z" fill="none" stroke="#c8c8c8" stroke-width="1.6" vector-effect="non-scaling-stroke" stroke-linejoin="round"/><path transform="translate(1483.10,371.00) scale(1.2333,0.9571)" d="M1,2.6 Q1,0.5 3,0.5 Q5,0.5 5,2.6 V11.4 Q5,13.5 3,13.5 Q1,13.5 1,11.4 Z" fill="none" stroke="#c8c8c8" stroke-width="1.6" vector-effect="non-scaling-stroke" stroke-linejoin="round"/>
<path transform="translate(1565.40,371.00) scale(1.2333,0.9571)" d="M1,2.6 Q1,0.5 3,0.5 Q5,0.5 5,2.6 V11.4 Q5,13.5 3,13.5 Q1,13.5 1,11.4 Z" fill="none" stroke="#c8c8c8" stroke-width="1.6" vector-effect="non-scaling-stroke" stroke-linejoin="round"/><path transform="translate(1575.30,371.00) scale(1.2333,0.9571)" d="M1.4,2.6 Q2.6,1.8 3.2,0.5 V13.5" fill="none" stroke="#c8c8c8" stroke-width="1.6" vector-effect="non-scaling-stroke" stroke-linejoin="round"/>
<path transform="translate(1654.60,371.00) scale(1.2333,0.9571)" d="M1,2.6 Q1,0.5 3,0.5 Q5,0.5 5,2.6 V11.4 Q5,13.5 3,13.5 Q1,13.5 1,11.4 Z" fill="none" stroke="#c8c8c8" stroke-width="1.6" vector-effect="non-scaling-stroke" stroke-linejoin="round"/><path transform="translate(1664.50,371.00) scale(1.2333,0.9571)" d="M0.9,3 Q1.1,0.5 3,0.5 Q5.1,0.5 5.1,3.2 Q5.1,5.6 3.2,8 L0.9,13.3 H5.3" fill="none" stroke="#c8c8c8" stroke-width="1.6" vector-effect="non-scaling-stroke" stroke-linejoin="round"/>
<path transform="translate(1737.10,371.00) scale(1.2333,0.9571)" d="M1,2.6 Q1,0.5 3,0.5 Q5,0.5 5,2.6 V11.4 Q5,13.5 3,13.5 Q1,13.5 1,11.4 Z" fill="none" stroke="#c8c8c8" stroke-width="1.6" vector-effect="non-scaling-stroke" stroke-linejoin="round"/><path transform="translate(1747.00,371.00) scale(1.2333,0.9571)" d="M0.9,2.2 Q1.4,0.5 3,0.5 Q5,0.5 5,3.4 Q5,6.6 2.4,6.8 Q5.1,7 5.1,10.3 Q5.1,13.5 3,13.5 Q1.2,13.5 0.8,11.6" fill="none" stroke="#c8c8c8" stroke-width="1.6" vector-effect="non-scaling-stroke" stroke-linejoin="round"/>
<path transform="translate(1793.50,371.00) scale(1.2333,0.9571)" d="M1,2.6 Q1,0.5 3,0.5 Q5,0.5 5,2.6 V11.4 Q5,13.5 3,13.5 Q1,13.5 1,11.4 Z" fill="none" stroke="#c8c8c8" stroke-width="1.6" vector-effect="non-scaling-stroke" stroke-linejoin="round"/><path transform="translate(1803.40,371.00) scale(1.2333,0.9571)" d="M3.9,13.5 V0.5 L0.6,9.6 H5.6" fill="none" stroke="#c8c8c8" stroke-width="1.6" vector-effect="non-scaling-stroke" stroke-linejoin="round"/>
<path transform="translate(1845.40,371.00) scale(1.2333,0.9571)" d="M1,2.6 Q1,0.5 3,0.5 Q5,0.5 5,2.6 V11.4 Q5,13.5 3,13.5 Q1,13.5 1,11.4 Z" fill="none" stroke="#c8c8c8" stroke-width="1.6" vector-effect="non-scaling-stroke" stroke-linejoin="round"/><path transform="translate(1855.30,371.00) scale(1.2333,0.9571)" d="M5,0.5 H1.3 L1.1,6.3 Q1.9,5.2 3,5.2 Q5.1,5.2 5.1,9.3 Q5.1,13.5 3,13.5 Q1.3,13.5 0.8,11.8" fill="none" stroke="#c8c8c8" stroke-width="1.6" vector-effect="non-scaling-stroke" stroke-linejoin="round"/>
<path transform="translate(1875.10,371.00) scale(1.2333,0.9571)" d="M1,2.6 Q1,0.5 3,0.5 Q5,0.5 5,2.6 V11.4 Q5,13.5 3,13.5 Q1,13.5 1,11.4 Z" fill="none" stroke="#c8c8c8" stroke-width="1.6" vector-effect="non-scaling-stroke" stroke-linejoin="round"/><path transform="translate(1885.00,371.00) scale(1.2333,0.9571)" d="M4.9,2.3 Q4.4,0.5 3,0.5 Q1,0.5 1,4 V10.6 Q1,13.5 3,13.5 Q5,13.5 5,10.2 Q5,6.6 3,6.6 Q1.6,6.6 1,8.4" fill="none" stroke="#c8c8c8" stroke-width="1.6" vector-effect="non-scaling-stroke" stroke-linejoin="round"/>
<rect x="9" y="401" width="2" height="307" fill="#e6e6e6"/>
<rect x="1906" y="401" width="2" height="307" fill="#e6e6e6"/>
<rect x="9" y="706" width="1899" height="2" fill="#e6e6e6"/>
<rect x="9" y="401" width="1899" height="2" fill="#e6e6e6"/>
<path d="M25.3,706.5 L27.2,704.2 L29.1,706.5 Z M25.3,402.5 L27.2,400.2 L29.1,402.5 Z M108.1,706.5 L110.0,704.2 L111.9,706.5 Z M108.1,402.5 L110.0,400.2 L111.9,402.5 Z M177.9,706.5 L179.8,704.2 L181.7,706.5 Z M177.9,402.5 L179.8,400.2 L181.7,402.5 Z M201.9,706.5 L203.8,704.2 L205.7,706.5 Z M201.9,402.5 L203.8,400.2 L205.7,402.5 Z M297.3,706.5 L299.2,704.2 L301.1,706.5 Z M297.3,402.5 L299.2,400.2 L301.1,402.5 Z M391.1,706.5 L393.0,704.2 L394.9,706.5 Z M391.1,402.5 L393.0,400.2 L394.9,402.5 Z M486.2,706.5 L488.1,704.2 L490.0,706.5 Z M486.2,402.5 L488.1,400.2 L490.0,402.5 Z M581.6,706.5 L583.5,704.2 L585.4,706.5 Z M581.6,402.5 L583.5,400.2 L585.4,402.5 Z M675.4,706.5 L677.3,704.2 L679.2,706.5 Z M675.4,402.5 L677.3,400.2 L679.2,402.5 Z M761.4,706.5 L763.3,704.2 L765.2,706.5 Z M761.4,402.5 L763.3,400.2 L765.2,402.5 Z M825.5,706.5 L827.4,704.2 L829.3,706.5 Z M825.5,402.5 L827.4,400.2 L829.3,402.5 Z M920.9,706.5 L922.8,704.2 L924.7,706.5 Z M920.9,402.5 L922.8,400.2 L924.7,402.5 Z M1013.0,706.5 L1014.9,704.2 L1016.8,706.5 Z M1013.0,402.5 L1014.9,400.2 L1016.8,402.5 Z M1102.0,706.5 L1103.9,704.2 L1105.8,706.5 Z M1102.0,402.5 L1103.9,400.2 L1105.8,402.5 Z M1186.4,706.5 L1188.3,704.2 L1190.2,706.5 Z M1186.4,402.5 L1188.3,400.2 L1190.2,402.5 Z M1280.2,706.5 L1282.1,704.2 L1284.0,706.5 Z M1280.2,402.5 L1282.1,400.2 L1284.0,402.5 Z M1375.6,706.5 L1377.5,704.2 L1379.4,706.5 Z M1375.6,402.5 L1377.5,400.2 L1379.4,402.5 Z M1469.4,706.5 L1471.3,704.2 L1473.2,706.5 Z M1469.4,402.5 L1471.3,400.2 L1473.2,402.5 Z M1561.3,706.5 L1563.2,704.2 L1565.1,706.5 Z M1561.3,402.5 L1563.2,400.2 L1565.1,402.5 Z M1650.6,706.5 L1652.5,704.2 L1654.4,706.5 Z M1650.6,402.5 L1652.5,400.2 L1654.4,402.5 Z M1733.4,706.5 L1735.3,704.2 L1737.2,706.5 Z M1733.4,402.5 L1735.3,400.2 L1737.2,402.5 Z M1789.6,706.5 L1791.5,704.2 L1793.4,706.5 Z M1789.6,402.5 L1791.5,400.2 L1793.4,402.5 Z M1841.2,706.5 L1843.1,704.2 L1845.0,706.5 Z M1841.2,402.5 L1843.1,400.2 L1845.0,402.5 Z M1896.1,706.5 L1898.0,704.2 L1899.9,706.5 Z M1896.1,402.5 L1898.0,400.2 L1899.9,402.5 Z " fill="#e6e6e6"/>
<path transform="translate(29.00,709.00) scale(1.2333,0.9571)" d="M1,2.6 Q1,0.5 3,0.5 Q5,0.5 5,2.6 V11.4 Q5,13.5 3,13.5 Q1,13.5 1,11.4 Z" fill="none" stroke="#c8c8c8" stroke-width="1.6" vector-effect="non-scaling-stroke" stroke-linejoin="round"/><path transform="translate(38.90,709.00) scale(1.2333,0.9571)" d="M3.9,13.5 V0.5 L0.6,9.6 H5.6" fill="none" stroke="#c8c8c8" stroke-width="1.6" vector-effect="non-scaling-stroke" stroke-linejoin="round"/>
<path transform="translate(112.30,709.00) scale(1.2333,0.9571)" d="M1,2.6 Q1,0.5 3,0.5 Q5,0.5 5,2.6 V11.4 Q5,13.5 3,13.5 Q1,13.5 1,11.4 Z" fill="none" stroke="#c8c8c8" stroke-width="1.6" vector-effect="non-scaling-stroke" stroke-linejoin="round"/><path transform="translate(122.20,709.00) scale(1.2333,0.9571)" d="M5,0.5 H1.3 L1.1,6.3 Q1.9,5.2 3,5.2 Q5.1,5.2 5.1,9.3 Q5.1,13.5 3,13.5 Q1.3,13.5 0.8,11.8" fill="none" stroke="#c8c8c8" stroke-width="1.6" vector-effect="non-scaling-stroke" stroke-linejoin="round"/>
<path transform="translate(156.30,709.00) scale(1.2333,0.9571)" d="M1,2.6 Q1,0.5 3,0.5 Q5,0.5 5,2.6 V11.4 Q5,13.5 3,13.5 Q1,13.5 1,11.4 Z" fill="none" stroke="#ffffff" stroke-width="2.3" vector-effect="non-scaling-stroke" stroke-linejoin="round"/><path transform="translate(166.20,709.00) scale(1.2333,0.9571)" d="M4.9,2.3 Q4.4,0.5 3,0.5 Q1,0.5 1,4 V10.6 Q1,13.5 3,13.5 Q5,13.5 5,10.2 Q5,6.6 3,6.6 Q1.6,6.6 1,8.4" fill="none" stroke="#ffffff" stroke-width="2.3" vector-effect="non-scaling-stroke" stroke-linejoin="round"/>
<path transform="translate(206.10,709.00) scale(1.2333,0.9571)" d="M1,2.6 Q1,0.5 3,0.5 Q5,0.5 5,2.6 V11.4 Q5,13.5 3,13.5 Q1,13.5 1,11.4 Z" fill="none" stroke="#c8c8c8" stroke-width="1.6" vector-effect="non-scaling-stroke" stroke-linejoin="round"/><path transform="translate(216.00,709.00) scale(1.2333,0.9571)" d="M1.1,11.7 Q1.6,13.5 3,13.5 Q5,13.5 5,10 V3.4 Q5,0.5 3,0.5 Q1,0.5 1,3.8 Q1,7.4 3,7.4 Q4.4,7.4 5,5.6" fill="none" stroke="#c8c8c8" stroke-width="1.6" vector-effect="non-scaling-stroke" stroke-linejoin="round"/>
<path transform="translate(303.30,709.00) scale(1.2333,0.9571)" d="M1.4,2.6 Q2.6,1.8 3.2,0.5 V13.5" fill="none" stroke="#c8c8c8" stroke-width="1.6" vector-effect="non-scaling-stroke" stroke-linejoin="round"/><path transform="translate(313.20,709.00) scale(1.2333,0.9571)" d="M1,2.6 Q1,0.5 3,0.5 Q5,0.5 5,2.6 V11.4 Q5,13.5 3,13.5 Q1,13.5 1,11.4 Z" fill="none" stroke="#c8c8c8" stroke-width="1.6" vector-effect="non-scaling-stroke" stroke-linejoin="round"/>
<path transform="translate(397.20,709.00) scale(1.2333,0.9571)" d="M1.4,2.6 Q2.6,1.8 3.2,0.5 V13.5" fill="none" stroke="#c8c8c8" stroke-width="1.6" vector-effect="non-scaling-stroke" stroke-linejoin="round"/><path transform="translate(407.10,709.00) scale(1.2333,0.9571)" d="M1.4,2.6 Q2.6,1.8 3.2,0.5 V13.5" fill="none" stroke="#c8c8c8" stroke-width="1.6" vector-effect="non-scaling-stroke" stroke-linejoin="round"/>
<path transform="translate(492.30,709.00) scale(1.2333,0.9571)" d="M1.4,2.6 Q2.6,1.8 3.2,0.5 V13.5" fill="none" stroke="#c8c8c8" stroke-width="1.6" vector-effect="non-scaling-stroke" stroke-linejoin="round"/><path transform="translate(502.20,709.00) scale(1.2333,0.9571)" d="M0.9,3 Q1.1,0.5 3,0.5 Q5.1,0.5 5.1,3.2 Q5.1,5.6 3.2,8 L0.9,13.3 H5.3" fill="none" stroke="#c8c8c8" stroke-width="1.6" vector-effect="non-scaling-stroke" stroke-linejoin="round"/>
<path transform="translate(587.70,709.00) scale(1.2333,0.9571)" d="M1.4,2.6 Q2.6,1.8 3.2,0.5 V13.5" fill="none" stroke="#c8c8c8" stroke-width="1.6" vector-effect="non-scaling-stroke" stroke-linejoin="round"/><path transform="translate(597.60,709.00) scale(1.2333,0.9571)" d="M0.9,2.2 Q1.4,0.5 3,0.5 Q5,0.5 5,3.4 Q5,6.6 2.4,6.8 Q5.1,7 5.1,10.3 Q5.1,13.5 3,13.5 Q1.2,13.5 0.8,11.6" fill="none" stroke="#c8c8c8" stroke-width="1.6" vector-effect="non-scaling-stroke" stroke-linejoin="round"/>
<path transform="translate(681.50,709.00) scale(1.2333,0.9571)" d="M1.4,2.6 Q2.6,1.8 3.2,0.5 V13.5" fill="none" stroke="#c8c8c8" stroke-width="1.6" vector-effect="non-scaling-stroke" stroke-linejoin="round"/><path transform="translate(691.40,709.00) scale(1.2333,0.9571)" d="M3.9,13.5 V0.5 L0.6,9.6 H5.6" fill="none" stroke="#c8c8c8" stroke-width="1.6" vector-effect="non-scaling-stroke" stroke-linejoin="round"/>
<path transform="translate(767.10,709.00) scale(1.2333,0.9571)" d="M1.4,2.6 Q2.6,1.8 3.2,0.5 V13.5" fill="none" stroke="#c8c8c8" stroke-width="1.6" vector-effect="non-scaling-stroke" stroke-linejoin="round"/><path transform="translate(777.00,709.00) scale(1.2333,0.9571)" d="M5,0.5 H1.3 L1.1,6.3 Q1.9,5.2 3,5.2 Q5.1,5.2 5.1,9.3 Q5.1,13.5 3,13.5 Q1.3,13.5 0.8,11.8" fill="none" stroke="#c8c8c8" stroke-width="1.6" vector-effect="non-scaling-stroke" stroke-linejoin="round"/>
<path transform="translate(831.60,709.00) scale(1.2333,0.9571)" d="M1.4,2.6 Q2.6,1.8 3.2,0.5 V13.5" fill="none" stroke="#c8c8c8" stroke-width="1.6" vector-effect="non-scaling-stroke" stroke-linejoin="round"/><path transform="translate(841.50,709.00) scale(1.2333,0.9571)" d="M0.8,0.5 H5.2 Q3.6,5 2.6,13.5" fill="none" stroke="#c8c8c8" stroke-width="1.6" vector-effect="non-scaling-stroke" stroke-linejoin="round"/>
<path transform="translate(927.00,709.00) scale(1.2333,0.9571)" d="M1.4,2.6 Q2.6,1.8 3.2,0.5 V13.5" fill="none" stroke="#c8c8c8" stroke-width="1.6" vector-effect="non-scaling-stroke" stroke-linejoin="round"/><path transform="translate(936.90,709.00) scale(1.2333,0.9571)" d="M3,6.8 Q1.1,6.8 1.1,3.7 Q1.1,0.5 3,0.5 Q4.9,0.5 4.9,3.7 Q4.9,6.8 3,6.8 Q0.9,6.8 0.9,10.2 Q0.9,13.5 3,13.5 Q5.1,13.5 5.1,10.2 Q5.1,6.8 3,6.8 Z" fill="none" stroke="#c8c8c8" stroke-width="1.6" vector-effect="non-scaling-stroke" stroke-linejoin="round"/>
<path transform="translate(1019.10,709.00) scale(1.2333,0.9571)" d="M1.4,2.6 Q2.6,1.8 3.2,0.5 V13.5" fill="none" stroke="#c8c8c8" stroke-width="1.6" vector-effect="non-scaling-stroke" stroke-linejoin="round"/><path transform="translate(1029.00,709.00) scale(1.2333,0.9571)" d="M1.1,11.7 Q1.6,13.5 3,13.5 Q5,13.5 5,10 V3.4 Q5,0.5 3,0.5 Q1,0.5 1,3.8 Q1,7.4 3,7.4 Q4.4,7.4 5,5.6" fill="none" stroke="#c8c8c8" stroke-width="1.6" vector-effect="non-scaling-stroke" stroke-linejoin="round"/>
<path transform="translate(1106.40,709.00) scale(1.2333,0.9571)" d="M0.9,3 Q1.1,0.5 3,0.5 Q5.1,0.5 5.1,3.2 Q5.1,5.6 3.2,8 L0.9,13.3 H5.3" fill="none" stroke="#c8c8c8" stroke-width="1.6" vector-effect="non-scaling-stroke" stroke-linejoin="round"/><path transform="translate(1116.30,709.00) scale(1.2333,0.9571)" d="M1,2.6 Q1,0.5 3,0.5 Q5,0.5 5,2.6 V11.4 Q5,13.5 3,13.5 Q1,13.5 1,11.4 Z" fill="none" stroke="#c8c8c8" stroke-width="1.6" vector-effect="non-scaling-stroke" stroke-linejoin="round"/>
<path transform="translate(1190.50,709.00) scale(1.2333,0.9571)" d="M0.9,3 Q1.1,0.5 3,0.5 Q5.1,0.5 5.1,3.2 Q5.1,5.6 3.2,8 L0.9,13.3 H5.3" fill="none" stroke="#c8c8c8" stroke-width="1.6" vector-effect="non-scaling-stroke" stroke-linejoin="round"/><path transform="translate(1200.40,709.00) scale(1.2333,0.9571)" d="M1.4,2.6 Q2.6,1.8 3.2,0.5 V13.5" fill="none" stroke="#c8c8c8" stroke-width="1.6" vector-effect="non-scaling-stroke" stroke-linejoin="round"/>
<path transform="translate(1284.20,709.00) scale(1.2333,0.9571)" d="M0.9,3 Q1.1,0.5 3,0.5 Q5.1,0.5 5.1,3.2 Q5.1,5.6 3.2,8 L0.9,13.3 H5.3" fill="none" stroke="#c8c8c8" stroke-width="1.6" vector-effect="non-scaling-stroke" stroke-linejoin="round"/><path transform="translate(1294.10,709.00) scale(1.2333,0.9571)" d="M0.9,3 Q1.1,0.5 3,0.5 Q5.1,0.5 5.1,3.2 Q5.1,5.6 3.2,8 L0.9,13.3 H5.3" fill="none" stroke="#c8c8c8" stroke-width="1.6" vector-effect="non-scaling-stroke" stroke-linejoin="round"/>
<path transform="translate(1379.70,709.00) scale(1.2333,0.9571)" d="M0.9,3 Q1.1,0.5 3,0.5 Q5.1,0.5 5.1,3.2 Q5.1,5.6 3.2,8 L0.9,13.3 H5.3" fill="none" stroke="#c8c8c8" stroke-width="1.6" vector-effect="non-scaling-stroke" stroke-linejoin="round"/><path transform="translate(1389.60,709.00) scale(1.2333,0.9571)" d="M0.9,2.2 Q1.4,0.5 3,0.5 Q5,0.5 5,3.4 Q5,6.6 2.4,6.8 Q5.1,7 5.1,10.3 Q5.1,13.5 3,13.5 Q1.2,13.5 0.8,11.6" fill="none" stroke="#c8c8c8" stroke-width="1.6" vector-effect="non-scaling-stroke" stroke-linejoin="round"/>
<path transform="translate(1473.20,709.00) scale(1.2333,0.9571)" d="M1,2.6 Q1,0.5 3,0.5 Q5,0.5 5,2.6 V11.4 Q5,13.5 3,13.5 Q1,13.5 1,11.4 Z" fill="none" stroke="#c8c8c8" stroke-width="1.6" vector-effect="non-scaling-stroke" stroke-linejoin="round"/><path transform="translate(1483.10,709.00) scale(1.2333,0.9571)" d="M1,2.6 Q1,0.5 3,0.5 Q5,0.5 5,2.6 V11.4 Q5,13.5 3,13.5 Q1,13.5 1,11.4 Z" fill="none" stroke="#c8c8c8" stroke-width="1.6" vector-effect="non-scaling-stroke" stroke-linejoin="round"/>
<path transform="translate(1565.40,709.00) scale(1.2333,0.9571)" d="M1,2.6 Q1,0.5 3,0.5 Q5,0.5 5,2.6 V11.4 Q5,13.5 3,13.5 Q1,13.5 1,11.4 Z" fill="none" stroke="#c8c8c8" stroke-width="1.6" vector-effect="non-scaling-stroke" stroke-linejoin="round"/><path transform="translate(1575.30,709.00) scale(1.2333,0.9571)" d="M1.4,2.6 Q2.6,1.8 3.2,0.5 V13.5" fill="none" stroke="#c8c8c8" stroke-width="1.6" vector-effect="non-scaling-stroke" stroke-linejoin="round"/>
<path transform="translate(1654.60,709.00) scale(1.2333,0.9571)" d="M1,2.6 Q1,0.5 3,0.5 Q5,0.5 5,2.6 V11.4 Q5,13.5 3,13.5 Q1,13.5 1,11.4 Z" fill="none" stroke="#c8c8c8" stroke-width="1.6" vector-effect="non-scaling-stroke" stroke-linejoin="round"/><path transform="translate(1664.50,709.00) scale(1.2333,0.9571)" d="M0.9,3 Q1.1,0.5 3,0.5 Q5.1,0.5 5.1,3.2 Q5.1,5.6 3.2,8 L0.9,13.3 H5.3" fill="none" stroke="#c8c8c8" stroke-width="1.6" vector-effect="non-scaling-stroke" stroke-linejoin="round"/>
<path transform="translate(1737.10,709.00) scale(1.2333,0.9571)" d="M1,2.6 Q1,0.5 3,0.5 Q5,0.5 5,2.6 V11.4 Q5,13.5 3,13.5 Q1,13.5 1,11.4 Z" fill="none" stroke="#c8c8c8" stroke-width="1.6" vector-effect="non-scaling-stroke" stroke-linejoin="round"/><path transform="translate(1747.00,709.00) scale(1.2333,0.9571)" d="M0.9,2.2 Q1.4,0.5 3,0.5 Q5,0.5 5,3.4 Q5,6.6 2.4,6.8 Q5.1,7 5.1,10.3 Q5.1,13.5 3,13.5 Q1.2,13.5 0.8,11.6" fill="none" stroke="#c8c8c8" stroke-width="1.6" vector-effect="non-scaling-stroke" stroke-linejoin="round"/>
<path transform="translate(1793.50,709.00) scale(1.2333,0.9571)" d="M1,2.6 Q1,0.5 3,0.5 Q5,0.5 5,2.6 V11.4 Q5,13.5 3,13.5 Q1,13.5 1,11.4 Z" fill="none" stroke="#c8c8c8" stroke-width="1.6" vector-effect="non-scaling-stroke" stroke-linejoin="round"/><path transform="translate(1803.40,709.00) scale(1.2333,0.9571)" d="M3.9,13.5 V0.5 L0.6,9.6 H5.6" fill="none" stroke="#c8c8c8" stroke-width="1.6" vector-effect="non-scaling-stroke" stroke-linejoin="round"/>
<path transform="translate(1845.40,709.00) scale(1.2333,0.9571)" d="M1,2.6 Q1,0.5 3,0.5 Q5,0.5 5,2.6 V11.4 Q5,13.5 3,13.5 Q1,13.5 1,11.4 Z" fill="none" stroke="#c8c8c8" stroke-width="1.6" vector-effect="non-scaling-stroke" stroke-linejoin="round"/><path transform="translate(1855.30,709.00) scale(1.2333,0.9571)" d="M5,0.5 H1.3 L1.1,6.3 Q1.9,5.2 3,5.2 Q5.1,5.2 5.1,9.3 Q5.1,13.5 3,13.5 Q1.3,13.5 0.8,11.8" fill="none" stroke="#c8c8c8" stroke-width="1.6" vector-effect="non-scaling-stroke" stroke-linejoin="round"/>
<path transform="translate(1875.10,709.00) scale(1.2333,0.9571)" d="M1,2.6 Q1,0.5 3,0.5 Q5,0.5 5,2.6 V11.4 Q5,13.5 3,13.5 Q1,13.5 1,11.4 Z" fill="none" stroke="#c8c8c8" stroke-width="1.6" vector-effect="non-scaling-stroke" stroke-linejoin="round"/><path transform="translate(1885.00,709.00) scale(1.2333,0.9571)" d="M4.9,2.3 Q4.4,0.5 3,0.5 Q1,0.5 1,4 V10.6 Q1,13.5 3,13.5 Q5,13.5 5,10.2 Q5,6.6 3,6.6 Q1.6,6.6 1,8.4" fill="none" stroke="#c8c8c8" stroke-width="1.6" vector-effect="non-scaling-stroke" stroke-linejoin="round"/>
<rect x="9" y="739" width="2" height="310" fill="#e6e6e6"/>
<rect x="1906" y="739" width="2" height="310" fill="#e6e6e6"/>
<rect x="9" y="1047" width="1899" height="2" fill="#e6e6e6"/>
<rect x="9" y="739" width="1899" height="2" fill="#e6e6e6"/>
<path d="M25.3,1047.5 L27.2,1045.2 L29.1,1047.5 Z M25.3,740.5 L27.2,738.2 L29.1,740.5 Z M108.1,1047.5 L110.0,1045.2 L111.9,1047.5 Z M108.1,740.5 L110.0,738.2 L111.9,740.5 Z M177.9,1047.5 L179.8,1045.2 L181.7,1047.5 Z M177.9,740.5 L179.8,738.2 L181.7,740.5 Z M201.9,1047.5 L203.8,1045.2 L205.7,1047.5 Z M201.9,740.5 L203.8,738.2 L205.7,740.5 Z M297.3,1047.5 L299.2,1045.2 L301.1,1047.5 Z M297.3,740.5 L299.2,738.2 L301.1,740.5 Z M391.1,1047.5 L393.0,1045.2 L394.9,1047.5 Z M391.1,740.5 L393.0,738.2 L394.9,740.5 Z M486.2,1047.5 L488.1,1045.2 L490.0,1047.5 Z M486.2,740.5 L488.1,738.2 L490.0,740.5 Z M581.6,1047.5 L583.5,1045.2 L585.4,1047.5 Z M581.6,740.5 L583.5,738.2 L585.4,740.5 Z M675.4,1047.5 L677.3,1045.2 L679.2,1047.5 Z M675.4,740.5 L677.3,738.2 L679.2,740.5 Z M761.4,1047.5 L763.3,1045.2 L765.2,1047.5 Z M761.4,740.5 L763.3,738.2 L765.2,740.5 Z M825.5,1047.5 L827.4,1045.2 L829.3,1047.5 Z M825.5,740.5 L827.4,738.2 L829.3,740.5 Z M920.9,1047.5 L922.8,1045.2 L924.7,1047.5 Z M920.9,740.5 L922.8,738.2 L924.7,740.5 Z M1013.0,1047.5 L1014.9,1045.2 L1016.8,1047.5 Z M1013.0,740.5 L1014.9,738.2 L1016.8,740.5 Z M1102.0,1047.5 L1103.9,1045.2 L1105.8,1047.5 Z M1102.0,740.5 L1103.9,738.2 L1105.8,740.5 Z M1186.4,1047.5 L1188.3,1045.2 L1190.2,1047.5 Z M1186.4,740.5 L1188.3,738.2 L1190.2,740.5 Z M1280.2,1047.5 L1282.1,1045.2 L1284.0,1047.5 Z M1280.2,740.5 L1282.1,738.2 L1284.0,740.5 Z M1375.6,1047.5 L1377.5,1045.2 L1379.4,1047.5 Z M1375.6,740.5 L1377.5,738.2 L1379.4,740.5 Z M1469.4,1047.5 L1471.3,1045.2 L1473.2,1047.5 Z M1469.4,740.5 L1471.3,738.2 L1473.2,740.5 Z M1561.3,1047.5 L1563.2,1045.2 L1565.1,1047.5 Z M1561.3,740.5 L1563.2,738.2 L1565.1,740.5 Z M1650.6,1047.5 L1652.5,1045.2 L1654.4,1047.5 Z M1650.6,740.5 L1652.5,738.2 L1654.4,740.5 Z M1733.4,1047.5 L1735.3,1045.2 L1737.2,1047.5 Z M1733.4,740.5 L1735.3,738.2 L1737.2,740.5 Z M1789.6,1047.5 L1791.5,1045.2 L1793.4,1047.5 Z M1789.6,740.5 L1791.5,738.2 L1793.4,740.5 Z M1841.2,1047.5 L1843.1,1045.2 L1845.0,1047.5 Z M1841.2,740.5 L1843.1,738.2 L1845.0,740.5 Z M1896.1,1047.5 L1898.0,1045.2 L1899.9,1047.5 Z M1896.1,740.5 L1898.0,738.2 L1899.9,740.5 Z " fill="#e6e6e6"/>
<path transform="translate(29.00,1050.00) scale(1.2333,0.9571)" d="M1,2.6 Q1,0.5 3,0.5 Q5,0.5 5,2.6 V11.4 Q5,13.5 3,13.5 Q1,13.5 1,11.4 Z" fill="none" stroke="#c8c8c8" stroke-width="1.6" vector-effect="non-scaling-stroke" stroke-linejoin="round"/><path transform="translate(38.90,1050.00) scale(1.2333,0.9571)" d="M3.9,13.5 V0.5 L0.6,9.6 H5.6" fill="none" stroke="#c8c8c8" stroke-width="1.6" vector-effect="non-scaling-stroke" stroke-linejoin="round"/>
<path transform="translate(112.30,1050.00) scale(1.2333,0.9571)" d="M1,2.6 Q1,0.5 3,0.5 Q5,0.5 5,2.6 V11.4 Q5,13.5 3,13.5 Q1,13.5 1,11.4 Z" fill="none" stroke="#c8c8c8" stroke-width="1.6" vector-effect="non-scaling-stroke" stroke-linejoin="round"/><path transform="translate(122.20,1050.00) scale(1.2333,0.9571)" d="M5,0.5 H1.3 L1.1,6.3 Q1.9,5.2 3,5.2 Q5.1,5.2 5.1,9.3 Q5.1,13.5 3,13.5 Q1.3,13.5 0.8,11.8" fill="none" stroke="#c8c8c8" stroke-width="1.6" vector-effect="non-scaling-stroke" stroke-linejoin="round"/>
<path transform="translate(156.30,1050.00) scale(1.2333,0.9571)" d="M1,2.6 Q1,0.5 3,0.5 Q5,0.5 5,2.6 V11.4 Q5,13.5 3,13.5 Q1,13.5 1,11.4 Z" fill="none" stroke="#ffffff" stroke-width="2.3" vector-effect="non-scaling-stroke" stroke-linejoin="round"/><path transform="translate(166.20,1050.00) scale(1.2333,0.9571)" d="M4.9,2.3 Q4.4,0.5 3,0.5 Q1,0.5 1,4 V10.6 Q1,13.5 3,13.5 Q5,13.5 5,10.2 Q5,6.6 3,6.6 Q1.6,6.6 1,8.4" fill="none" stroke="#ffffff" stroke-width="2.3" vector-effect="non-scaling-stroke" stroke-linejoin="round"/>
<path transform="translate(206.10,1050.00) scale(1.2333,0.9571)" d="M1,2.6 Q1,0.5 3,0.5 Q5,0.5 5,2.6 V11.4 Q5,13.5 3,13.5 Q1,13.5 1,11.4 Z" fill="none" stroke="#c8c8c8" stroke-width="1.6" vector-effect="non-scaling-stroke" stroke-linejoin="round"/><path transform="translate(216.00,1050.00) scale(1.2333,0.9571)" d="M1.1,11.7 Q1.6,13.5 3,13.5 Q5,13.5 5,10 V3.4 Q5,0.5 3,0.5 Q1,0.5 1,3.8 Q1,7.4 3,7.4 Q4.4,7.4 5,5.6" fill="none" stroke="#c8c8c8" stroke-width="1.6" vector-effect="non-scaling-stroke" stroke-linejoin="round"/>
<path transform="translate(303.30,1050.00) scale(1.2333,0.9571)" d="M1.4,2.6 Q2.6,1.8 3.2,0.5 V13.5" fill="none" stroke="#c8c8c8" stroke-width="1.6" vector-effect="non-scaling-stroke" stroke-linejoin="round"/><path transform="translate(313.20,1050.00) scale(1.2333,0.9571)" d="M1,2.6 Q1,0.5 3,0.5 Q5,0.5 5,2.6 V11.4 Q5,13.5 3,13.5 Q1,13.5 1,11.4 Z" fill="none" stroke="#c8c8c8" stroke-width="1.6" vector-effect="non-scaling-stroke" stroke-linejoin="round"/>
<path transform="translate(397.20,1050.00) scale(1.2333,0.9571)" d="M1.4,2.6 Q2.6,1.8 3.2,0.5 V13.5" fill="none" stroke="#c8c8c8" stroke-width="1.6" vector-effect="non-scaling-stroke" stroke-linejoin="round"/><path transform="translate(407.10,1050.00) scale(1.2333,0.9571)" d="M1.4,2.6 Q2.6,1.8 3.2,0.5 V13.5" fill="none" stroke="#c8c8c8" stroke-width="1.6" vector-effect="non-scaling-stroke" stroke-linejoin="round"/>
<path transform="translate(492.30,1050.00) scale(1.2333,0.9571)" d="M1.4,2.6 Q2.6,1.8 3.2,0.5 V13.5" fill="none" stroke="#c8c8c8" stroke-width="1.6" vector-effect="non-scaling-stroke" stroke-linejoin="round"/><path transform="translate(502.20,1050.00) scale(1.2333,0.9571)" d="M0.9,3 Q1.1,0.5 3,0.5 Q5.1,0.5 5.1,3.2 Q5.1,5.6 3.2,8 L0.9,13.3 H5.3" fill="none" stroke="#c8c8c8" stroke-width="1.6" vector-effect="non-scaling-stroke" stroke-linejoin="round"/>
<path transform="translate(587.70,1050.00) scale(1.2333,0.9571)" d="M1.4,2.6 Q2.6,1.8 3.2,0.5 V13.5" fill="none" stroke="#c8c8c8" stroke-width="1.6" vector-effect="non-scaling-stroke" stroke-linejoin="round"/><path transform="translate(597.60,1050.00) scale(1.2333,0.9571)" d="M0.9,2.2 Q1.4,0.5 3,0.5 Q5,0.5 5,3.4 Q5,6.6 2.4,6.8 Q5.1,7 5.1,10.3 Q5.1,13.5 3,13.5 Q1.2,13.5 0.8,11.6" fill="none" stroke="#c8c8c8" stroke-width="1.6" vector-effect="non-scaling-stroke" stroke-linejoin="round"/>
<path transform="translate(681.50,1050.00) scale(1.2333,0.9571)" d="M1.4,2.6 Q2.6,1.8 3.2,0.5 V13.5" fill="none" stroke="#c8c8c8" stroke-width="1.6" vector-effect="non-scaling-stroke" stroke-linejoin="round"/><path transform="translate(691.40,1050.00) scale(1.2333,0.9571)" d="M3.9,13.5 V0.5 L0.6,9.6 H5.6" fill="none" stroke="#c8c8c8" stroke-width="1.6" vector-effect="non-scaling-stroke" stroke-linejoin="round"/>
<path transform="translate(767.10,1050.00) scale(1.2333,0.9571)" d="M1.4,2.6 Q2.6,1.8 3.2,0.5 V13.5" fill="none" stroke="#c8c8c8" stroke-width="1.6" vector-effect="non-scaling-stroke" stroke-linejoin="round"/><path transform="translate(777.00,1050.00) scale(1.2333,0.9571)" d="M5,0.5 H1.3 L1.1,6.3 Q1.9,5.2 3,5.2 Q5.1,5.2 5.1,9.3 Q5.1,13.5 3,13.5 Q1.3,13.5 0.8,11.8" fill="none" stroke="#c8c8c8" stroke-width="1.6" vector-effect="non-scaling-stroke" stroke-linejoin="round"/>
<path transform="translate(831.60,1050.00) scale(1.2333,0.9571)" d="M1.4,2.6 Q2.6,1.8 3.2,0.5 V13.5" fill="none" stroke="#c8c8c8" stroke-width="1.6" vector-effect="non-scaling-stroke" stroke-linejoin="round"/><path transform="translate(841.50,1050.00) scale(1.2333,0.9571)" d="M0.8,0.5 H5.2 Q3.6,5 2.6,13.5" fill="none" stroke="#c8c8c8" stroke-width="1.6" vector-effect="non-scaling-stroke" stroke-linejoin="round"/>
<path transform="translate(927.00,1050.00) scale(1.2333,0.9571)" d="M1.4,2.6 Q2.6,1.8 3.2,0.5 V13.5" fill="none" stroke="#c8c8c8" stroke-width="1.6" vector-effect="non-scaling-stroke" stroke-linejoin="round"/><path transform="translate(936.90,1050.00) scale(1.2333,0.9571)" d="M3,6.8 Q1.1,6.8 1.1,3.7 Q1.1,0.5 3,0.5 Q4.9,0.5 4.9,3.7 Q4.9,6.8 3,6.8 Q0.9,6.8 0.9,10.2 Q0.9,13.5 3,13.5 Q5.1,13.5 5.1,10.2 Q5.1,6.8 3,6.8 Z" fill="none" stroke="#c8c8c8" stroke-width="1.6" vector-effect="non-scaling-stroke" stroke-linejoin="round"/>
<path transform="translate(1019.10,1050.00) scale(1.2333,0.9571)" d="M1.4,2.6 Q2.6,1.8 3.2,0.5 V13.5" fill="none" stroke="#c8c8c8" stroke-width="1.6" vector-effect="non-scaling-stroke" stroke-linejoin="round"/><path transform="translate(1029.00,1050.00) scale(1.2333,0.9571)" d="M1.1,11.7 Q1.6,13.5 3,13.5 Q5,13.5 5,10 V3.4 Q5,0.5 3,0.5 Q1,0.5 1,3.8 Q1,7.4 3,7.4 Q4.4,7.4 5,5.6" fill="none" stroke="#c8c8c8" stroke-width="1.6" vector-effect="non-scaling-stroke" stroke-linejoin="round"/>
<path transform="translate(1106.40,1050.00) scale(1.2333,0.9571)" d="M0.9,3 Q1.1,0.5 3,0.5 Q5.1,0.5 5.1,3.2 Q5.1,5.6 3.2,8 L0.9,13.3 H5.3" fill="none" stroke="#c8c8c8" stroke-width="1.6" vector-effect="non-scaling-stroke" stroke-linejoin="round"/><path transform="translate(1116.30,1050.00) scale(1.2333,0.9571)" d="M1,2.6 Q1,0.5 3,0.5 Q5,0.5 5,2.6 V11.4 Q5,13.5 3,13.5 Q1,13.5 1,11.4 Z" fill="none" stroke="#c8c8c8" stroke-width="1.6" vector-effect="non-scaling-stroke" stroke-linejoin="round"/>
<path transform="translate(1190.50,1050.00) scale(1.2333,0.9571)" d="M0.9,3 Q1.1,0.5 3,0.5 Q5.1,0.5 5.1,3.2 Q5.1,5.6 3.2,8 L0.9,13.3 H5.3" fill="none" stroke="#c8c8c8" stroke-width="1.6" vector-effect="non-scaling-stroke" stroke-linejoin="round"/><path transform="translate(1200.40,1050.00) scale(1.2333,0.9571)" d="M1.4,2.6 Q2.6,1.8 3.2,0.5 V13.5" fill="none" stroke="#c8c8c8" stroke-width="1.6" vector-effect="non-scaling-stroke" stroke-linejoin="round"/>
<path transform="translate(1284.20,1050.00) scale(1.2333,0.9571)" d="M0.9,3 Q1.1,0.5 3,0.5 Q5.1,0.5 5.1,3.2 Q5.1,5.6 3.2,8 L0.9,13.3 H5.3" fill="none" stroke="#c8c8c8" stroke-width="1.6" vector-effect="non-scaling-stroke" stroke-linejoin="round"/><path transform="translate(1294.10,1050.00) scale(1.2333,0.9571)" d="M0.9,3 Q1.1,0.5 3,0.5 Q5.1,0.5 5.1,3.2 Q5.1,5.6 3.2,8 L0.9,13.3 H5.3" fill="none" stroke="#c8c8c8" stroke-width="1.6" vector-effect="non-scaling-stroke" stroke-linejoin="round"/>
<path transform="translate(1379.70,1050.00) scale(1.2333,0.9571)" d="M0.9,3 Q1.1,0.5 3,0.5 Q5.1,0.5 5.1,3.2 Q5.1,5.6 3.2,8 L0.9,13.3 H5.3" fill="none" stroke="#c8c8c8" stroke-width="1.6" vector-effect="non-scaling-stroke" stroke-linejoin="round"/><path transform="translate(1389.60,1050.00) scale(1.2333,0.9571)" d="M0.9,2.2 Q1.4,0.5 3,0.5 Q5,0.5 5,3.4 Q5,6.6 2.4,6.8 Q5.1,7 5.1,10.3 Q5.1,13.5 3,13.5 Q1.2,13.5 0.8,11.6" fill="none" stroke="#c8c8c8" stroke-width="1.6" vector-effect="non-scaling-stroke" stroke-linejoin="round"/>
<path transform="translate(1473.20,1050.00) scale(1.2333,0.9571)" d="M1,2.6 Q1,0.5 3,0.5 Q5,0.5 5,2.6 V11.4 Q5,13.5 3,13.5 Q1,13.5 1,11.4 Z" fill="none" stroke="#c8c8c8" stroke-width="1.6" vector-effect="non-scaling-stroke" stroke-linejoin="round"/><path transform="translate(1483.10,1050.00) scale(1.2333,0.9571)" d="M1,2.6 Q1,0.5 3,0.5 Q5,0.5 5,2.6 V11.4 Q5,13.5 3,13.5 Q1,13.5 1,11.4 Z" fill="none" stroke="#c8c8c8" stroke-width="1.6" vector-effect="non-scaling-stroke" stroke-linejoin="round"/>
<path transform="translate(1565.40,1050.00) scale(1.2333,0.9571)" d="M1,2.6 Q1,0.5 3,0.5 Q5,0.5 5,2.6 V11.4 Q5,13.5 3,13.5 Q1,13.5 1,11.4 Z" fill="none" stroke="#c8c8c8" stroke-width="1.6" vector-effect="non-scaling-stroke" stroke-linejoin="round"/><path transform="translate(1575.30,1050.00) scale(1.2333,0.9571)" d="M1.4,2.6 Q2.6,1.8 3.2,0.5 V13.5" fill="none" stroke="#c8c8c8" stroke-width="1.6" vector-effect="non-scaling-stroke" stroke-linejoin="round"/>
<path transform="translate(1654.60,1050.00) scale(1.2333,0.9571)" d="M1,2.6 Q1,0.5 3,0.5 Q5,0.5 5,2.6 V11.4 Q5,13.5 3,13.5 Q1,13.5 1,11.4 Z" fill="none" stroke="#c8c8c8" stroke-width="1.6" vector-effect="non-scaling-stroke" stroke-linejoin="round"/><path transform="translate(1664.50,1050.00) scale(1.2333,0.9571)" d="M0.9,3 Q1.1,0.5 3,0.5 Q5.1,0.5 5.1,3.2 Q5.1,5.6 3.2,8 L0.9,13.3 H5.3" fill="none" stroke="#c8c8c8" stroke-width="1.6" vector-effect="non-scaling-stroke" stroke-linejoin="round"/>
<path transform="translate(1737.10,1050.00) scale(1.2333,0.9571)" d="M1,2.6 Q1,0.5 3,0.5 Q5,0.5 5,2.6 V11.4 Q5,13.5 3,13.5 Q1,13.5 1,11.4 Z" fill="none" stroke="#c8c8c8" stroke-width="1.6" vector-effect="non-scaling-stroke" stroke-linejoin="round"/><path transform="translate(1747.00,1050.00) scale(1.2333,0.9571)" d="M0.9,2.2 Q1.4,0.5 3,0.5 Q5,0.5 5,3.4 Q5,6.6 2.4,6.8 Q5.1,7 5.1,10.3 Q5.1,13.5 3,13.5 Q1.2,13.5 0.8,11.6" fill="none" stroke="#c8c8c8" stroke-width="1.6" vector-effect="non-scaling-stroke" stroke-linejoin="round"/>
<path transform="translate(1793.50,1050.00) scale(1.2333,0.9571)" d="M1,2.6 Q1,0.5 3,0.5 Q5,0.5 5,2.6 V11.4 Q5,13.5 3,13.5 Q1,13.5 1,11.4 Z" fill="none" stroke="#c8c8c8" stroke-width="1.6" vector-effect="non-scaling-stroke" stroke-linejoin="round"/><path transform="translate(1803.40,1050.00) scale(1.2333,0.9571)" d="M3.9,13.5 V0.5 L0.6,9.6 H5.6" fill="none" stroke="#c8c8c8" stroke-width="1.6" vector-effect="non-scaling-stroke" stroke-linejoin="round"/>
<path transform="translate(1845.40,1050.00) scale(1.2333,0.9571)" d="M1,2.6 Q1,0.5 3,0.5 Q5,0.5 5,2.6 V11.4 Q5,13.5 3,13.5 Q1,13.5 1,11.4 Z" fill="none" stroke="#c8c8c8" stroke-width="1.6" vector-effect="non-scaling-stroke" stroke-linejoin="round"/><path transform="translate(1855.30,1050.00) scale(1.2333,0.9571)" d="M5,0.5 H1.3 L1.1,6.3 Q1.9,5.2 3,5.2 Q5.1,5.2 5.1,9.3 Q5.1,13.5 3,13.5 Q1.3,13.5 0.8,11.8" fill="none" stroke="#c8c8c8" stroke-width="1.6" vector-effect="non-scaling-stroke" stroke-linejoin="round"/>
<path transform="translate(1875.10,1050.00) scale(1.2333,0.9571)" d="M1,2.6 Q1,0.5 3,0.5 Q5,0.5 5,2.6 V11.4 Q5,13.5 3,13.5 Q1,13.5 1,11.4 Z" fill="none" stroke="#c8c8c8" stroke-width="1.6" vector-effect="non-scaling-stroke" stroke-linejoin="round"/><path transform="translate(1885.00,1050.00) scale(1.2333,0.9571)" d="M4.9,2.3 Q4.4,0.5 3,0.5 Q1,0.5 1,4 V10.6 Q1,13.5 3,13.5 Q5,13.5 5,10.2 Q5,6.6 3,6.6 Q1.6,6.6 1,8.4" fill="none" stroke="#c8c8c8" stroke-width="1.6" vector-effect="non-scaling-stroke" stroke-linejoin="round"/>
<rect x="9" y="393" width="1991" height="7.5" fill="#f8f8f8"/><rect x="9" y="393" width="1991" height="1" fill="#a4a4a4"/><rect x="9" y="399.0" width="1991" height="1.5" fill="#a8a8a8"/>
<rect x="9" y="731" width="1991" height="7.5" fill="#f8f8f8"/><rect x="9" y="731" width="1991" height="1" fill="#a4a4a4"/><rect x="9" y="737.0" width="1991" height="1.5" fill="#a8a8a8"/>
<path transform="translate(1911.00,106.40) scale(1.0833,0.9857)" d="M1.4,2.6 Q2.6,1.8 3.2,0.5 V13.5" fill="none" stroke="#c8c8c8" stroke-width="1.5" vector-effect="non-scaling-stroke" stroke-linejoin="round"/><path transform="translate(1920.30,106.40) scale(1.0833,0.9857)" d="M3.9,13.5 V0.5 L0.6,9.6 H5.6" fill="none" stroke="#c8c8c8" stroke-width="1.5" vector-effect="non-scaling-stroke" stroke-linejoin="round"/><path transform="translate(1929.60,106.40) scale(1.0833,0.9857)" d="M2.9,12 V13.8 L1.9,15.6" fill="none" stroke="#c8c8c8" stroke-width="1.5" vector-effect="non-scaling-stroke" stroke-linejoin="round"/><path transform="translate(1938.90,106.40) scale(1.0833,0.9857)" d="M0.9,2.2 Q1.4,0.5 3,0.5 Q5,0.5 5,3.4 Q5,6.6 2.4,6.8 Q5.1,7 5.1,10.3 Q5.1,13.5 3,13.5 Q1.2,13.5 0.8,11.6" fill="none" stroke="#c8c8c8" stroke-width="1.5" vector-effect="non-scaling-stroke" stroke-linejoin="round"/><path transform="translate(1948.20,106.40) scale(1.0833,0.9857)" d="M5,0.5 H1.3 L1.1,6.3 Q1.9,5.2 3,5.2 Q5.1,5.2 5.1,9.3 Q5.1,13.5 3,13.5 Q1.3,13.5 0.8,11.8" fill="none" stroke="#c8c8c8" stroke-width="1.5" vector-effect="non-scaling-stroke" stroke-linejoin="round"/><path transform="translate(1957.50,106.40) scale(1.0833,0.9857)" d="M1,2.6 Q1,0.5 3,0.5 Q5,0.5 5,2.6 V11.4 Q5,13.5 3,13.5 Q1,13.5 1,11.4 Z" fill="none" stroke="#c8c8c8" stroke-width="1.5" vector-effect="non-scaling-stroke" stroke-linejoin="round"/>
<path transform="translate(1911.00,186.20) scale(1.0833,0.9857)" d="M1.4,2.6 Q2.6,1.8 3.2,0.5 V13.5" fill="none" stroke="#c8c8c8" stroke-width="1.5" vector-effect="non-scaling-stroke" stroke-linejoin="round"/><path transform="translate(1920.30,186.20) scale(1.0833,0.9857)" d="M3.9,13.5 V0.5 L0.6,9.6 H5.6" fill="none" stroke="#c8c8c8" stroke-width="1.5" vector-effect="non-scaling-stroke" stroke-linejoin="round"/><path transform="translate(1929.60,186.20) scale(1.0833,0.9857)" d="M2.9,12 V13.8 L1.9,15.6" fill="none" stroke="#c8c8c8" stroke-width="1.5" vector-effect="non-scaling-stroke" stroke-linejoin="round"/><path transform="translate(1938.90,186.20) scale(1.0833,0.9857)" d="M0.9,2.2 Q1.4,0.5 3,0.5 Q5,0.5 5,3.4 Q5,6.6 2.4,6.8 Q5.1,7 5.1,10.3 Q5.1,13.5 3,13.5 Q1.2,13.5 0.8,11.6" fill="none" stroke="#c8c8c8" stroke-width="1.5" vector-effect="non-scaling-stroke" stroke-linejoin="round"/><path transform="translate(1948.20,186.20) scale(1.0833,0.9857)" d="M1,2.6 Q1,0.5 3,0.5 Q5,0.5 5,2.6 V11.4 Q5,13.5 3,13.5 Q1,13.5 1,11.4 Z" fill="none" stroke="#c8c8c8" stroke-width="1.5" vector-effect="non-scaling-stroke" stroke-linejoin="round"/><path transform="translate(1957.50,186.20) scale(1.0833,0.9857)" d="M1,2.6 Q1,0.5 3,0.5 Q5,0.5 5,2.6 V11.4 Q5,13.5 3,13.5 Q1,13.5 1,11.4 Z" fill="none" stroke="#c8c8c8" stroke-width="1.5" vector-effect="non-scaling-stroke" stroke-linejoin="round"/>
<path transform="translate(1911.00,266.00) scale(1.0833,0.9857)" d="M1.4,2.6 Q2.6,1.8 3.2,0.5 V13.5" fill="none" stroke="#c8c8c8" stroke-width="1.5" vector-effect="non-scaling-stroke" stroke-linejoin="round"/><path transform="translate(1920.30,266.00) scale(1.0833,0.9857)" d="M3.9,13.5 V0.5 L0.6,9.6 H5.6" fill="none" stroke="#c8c8c8" stroke-width="1.5" vector-effect="non-scaling-stroke" stroke-linejoin="round"/><path transform="translate(1929.60,266.00) scale(1.0833,0.9857)" d="M2.9,12 V13.8 L1.9,15.6" fill="none" stroke="#c8c8c8" stroke-width="1.5" vector-effect="non-scaling-stroke" stroke-linejoin="round"/><path transform="translate(1938.90,266.00) scale(1.0833,0.9857)" d="M0.9,3 Q1.1,0.5 3,0.5 Q5.1,0.5 5.1,3.2 Q5.1,5.6 3.2,8 L0.9,13.3 H5.3" fill="none" stroke="#c8c8c8" stroke-width="1.5" vector-effect="non-scaling-stroke" stroke-linejoin="round"/><path transform="translate(1948.20,266.00) scale(1.0833,0.9857)" d="M5,0.5 H1.3 L1.1,6.3 Q1.9,5.2 3,5.2 Q5.1,5.2 5.1,9.3 Q5.1,13.5 3,13.5 Q1.3,13.5 0.8,11.8" fill="none" stroke="#c8c8c8" stroke-width="1.5" vector-effect="non-scaling-stroke" stroke-linejoin="round"/><path transform="translate(1957.50,266.00) scale(1.0833,0.9857)" d="M1,2.6 Q1,0.5 3,0.5 Q5,0.5 5,2.6 V11.4 Q5,13.5 3,13.5 Q1,13.5 1,11.4 Z" fill="none" stroke="#c8c8c8" stroke-width="1.5" vector-effect="non-scaling-stroke" stroke-linejoin="round"/>
<path transform="translate(1911.00,345.50) scale(1.0833,0.9857)" d="M1.4,2.6 Q2.6,1.8 3.2,0.5 V13.5" fill="none" stroke="#c8c8c8" stroke-width="1.5" vector-effect="non-scaling-stroke" stroke-linejoin="round"/><path transform="translate(1920.30,345.50) scale(1.0833,0.9857)" d="M3.9,13.5 V0.5 L0.6,9.6 H5.6" fill="none" stroke="#c8c8c8" stroke-width="1.5" vector-effect="non-scaling-stroke" stroke-linejoin="round"/><path transform="translate(1929.60,345.50) scale(1.0833,0.9857)" d="M2.9,12 V13.8 L1.9,15.6" fill="none" stroke="#c8c8c8" stroke-width="1.5" vector-effect="non-scaling-stroke" stroke-linejoin="round"/><path transform="translate(1938.90,345.50) scale(1.0833,0.9857)" d="M0.9,3 Q1.1,0.5 3,0.5 Q5.1,0.5 5.1,3.2 Q5.1,5.6 3.2,8 L0.9,13.3 H5.3" fill="none" stroke="#c8c8c8" stroke-width="1.5" vector-effect="non-scaling-stroke" stroke-linejoin="round"/><path transform="translate(1948.20,345.50) scale(1.0833,0.9857)" d="M1,2.6 Q1,0.5 3,0.5 Q5,0.5 5,2.6 V11.4 Q5,13.5 3,13.5 Q1,13.5 1,11.4 Z" fill="none" stroke="#c8c8c8" stroke-width="1.5" vector-effect="non-scaling-stroke" stroke-linejoin="round"/><path transform="translate(1957.50,345.50) scale(1.0833,0.9857)" d="M1,2.6 Q1,0.5 3,0.5 Q5,0.5 5,2.6 V11.4 Q5,13.5 3,13.5 Q1,13.5 1,11.4 Z" fill="none" stroke="#c8c8c8" stroke-width="1.5" vector-effect="non-scaling-stroke" stroke-linejoin="round"/>
<path transform="translate(1909.50,453.20) scale(1.0833,0.9857)" d="M3.9,13.5 V0.5 L0.6,9.6 H5.6" fill="none" stroke="#c8c8c8" stroke-width="1.5" vector-effect="non-scaling-stroke" stroke-linejoin="round"/><path transform="translate(1918.80,453.20) scale(1.0833,0.9857)" d="M2.9,12 V13.8 L1.9,15.6" fill="none" stroke="#c8c8c8" stroke-width="1.5" vector-effect="non-scaling-stroke" stroke-linejoin="round"/><path transform="translate(1928.10,453.20) scale(1.0833,0.9857)" d="M4.9,2.3 Q4.4,0.5 3,0.5 Q1,0.5 1,4 V10.6 Q1,13.5 3,13.5 Q5,13.5 5,10.2 Q5,6.6 3,6.6 Q1.6,6.6 1,8.4" fill="none" stroke="#c8c8c8" stroke-width="1.5" vector-effect="non-scaling-stroke" stroke-linejoin="round"/><path transform="translate(1937.40,453.20) scale(1.0833,0.9857)" d="M3,6.8 Q1.1,6.8 1.1,3.7 Q1.1,0.5 3,0.5 Q4.9,0.5 4.9,3.7 Q4.9,6.8 3,6.8 Q0.9,6.8 0.9,10.2 Q0.9,13.5 3,13.5 Q5.1,13.5 5.1,10.2 Q5.1,6.8 3,6.8 Z" fill="none" stroke="#c8c8c8" stroke-width="1.5" vector-effect="non-scaling-stroke" stroke-linejoin="round"/><path transform="translate(1946.70,453.20) scale(1.0833,0.9857)" d="M1,2.6 Q1,0.5 3,0.5 Q5,0.5 5,2.6 V11.4 Q5,13.5 3,13.5 Q1,13.5 1,11.4 Z" fill="none" stroke="#c8c8c8" stroke-width="1.5" vector-effect="non-scaling-stroke" stroke-linejoin="round"/>
<path transform="translate(1909.50,545.70) scale(1.0833,0.9857)" d="M3.9,13.5 V0.5 L0.6,9.6 H5.6" fill="none" stroke="#c8c8c8" stroke-width="1.5" vector-effect="non-scaling-stroke" stroke-linejoin="round"/><path transform="translate(1918.80,545.70) scale(1.0833,0.9857)" d="M2.9,12 V13.8 L1.9,15.6" fill="none" stroke="#c8c8c8" stroke-width="1.5" vector-effect="non-scaling-stroke" stroke-linejoin="round"/><path transform="translate(1928.10,545.70) scale(1.0833,0.9857)" d="M4.9,2.3 Q4.4,0.5 3,0.5 Q1,0.5 1,4 V10.6 Q1,13.5 3,13.5 Q5,13.5 5,10.2 Q5,6.6 3,6.6 Q1.6,6.6 1,8.4" fill="none" stroke="#c8c8c8" stroke-width="1.5" vector-effect="non-scaling-stroke" stroke-linejoin="round"/><path transform="translate(1937.40,545.70) scale(1.0833,0.9857)" d="M0.8,0.5 H5.2 Q3.6,5 2.6,13.5" fill="none" stroke="#c8c8c8" stroke-width="1.5" vector-effect="non-scaling-stroke" stroke-linejoin="round"/><path transform="translate(1946.70,545.70) scale(1.0833,0.9857)" d="M1,2.6 Q1,0.5 3,0.5 Q5,0.5 5,2.6 V11.4 Q5,13.5 3,13.5 Q1,13.5 1,11.4 Z" fill="none" stroke="#c8c8c8" stroke-width="1.5" vector-effect="non-scaling-stroke" stroke-linejoin="round"/>
<path transform="translate(1909.50,638.00) scale(1.0833,0.9857)" d="M3.9,13.5 V0.5 L0.6,9.6 H5.6" fill="none" stroke="#c8c8c8" stroke-width="1.5" vector-effect="non-scaling-stroke" stroke-linejoin="round"/><path transform="translate(1918.80,638.00) scale(1.0833,0.9857)" d="M2.9,12 V13.8 L1.9,15.6" fill="none" stroke="#c8c8c8" stroke-width="1.5" vector-effect="non-scaling-stroke" stroke-linejoin="round"/><path transform="translate(1928.10,638.00) scale(1.0833,0.9857)" d="M4.9,2.3 Q4.4,0.5 3,0.5 Q1,0.5 1,4 V10.6 Q1,13.5 3,13.5 Q5,13.5 5,10.2 Q5,6.6 3,6.6 Q1.6,6.6 1,8.4" fill="none" stroke="#c8c8c8" stroke-width="1.5" vector-effect="non-scaling-stroke" stroke-linejoin="round"/><path transform="translate(1937.40,638.00) scale(1.0833,0.9857)" d="M4.9,2.3 Q4.4,0.5 3,0.5 Q1,0.5 1,4 V10.6 Q1,13.5 3,13.5 Q5,13.5 5,10.2 Q5,6.6 3,6.6 Q1.6,6.6 1,8.4" fill="none" stroke="#c8c8c8" stroke-width="1.5" vector-effect="non-scaling-stroke" stroke-linejoin="round"/><path transform="translate(1946.70,638.00) scale(1.0833,0.9857)" d="M1,2.6 Q1,0.5 3,0.5 Q5,0.5 5,2.6 V11.4 Q5,13.5 3,13.5 Q1,13.5 1,11.4 Z" fill="none" stroke="#c8c8c8" stroke-width="1.5" vector-effect="non-scaling-stroke" stroke-linejoin="round"/>
<path transform="translate(1909.50,730.20) scale(1.0833,0.9857)" d="M3.9,13.5 V0.5 L0.6,9.6 H5.6" fill="none" stroke="#c8c8c8" stroke-width="1.5" vector-effect="non-scaling-stroke" stroke-linejoin="round"/><path transform="translate(1918.80,730.20) scale(1.0833,0.9857)" d="M2.9,12 V13.8 L1.9,15.6" fill="none" stroke="#c8c8c8" stroke-width="1.5" vector-effect="non-scaling-stroke" stroke-linejoin="round"/><path transform="translate(1928.10,730.20) scale(1.0833,0.9857)" d="M4.9,2.3 Q4.4,0.5 3,0.5 Q1,0.5 1,4 V10.6 Q1,13.5 3,13.5 Q5,13.5 5,10.2 Q5,6.6 3,6.6 Q1.6,6.6 1,8.4" fill="none" stroke="#c8c8c8" stroke-width="1.5" vector-effect="non-scaling-stroke" stroke-linejoin="round"/><path transform="translate(1937.40,730.20) scale(1.0833,0.9857)" d="M5,0.5 H1.3 L1.1,6.3 Q1.9,5.2 3,5.2 Q5.1,5.2 5.1,9.3 Q5.1,13.5 3,13.5 Q1.3,13.5 0.8,11.8" fill="none" stroke="#c8c8c8" stroke-width="1.5" vector-effect="non-scaling-stroke" stroke-linejoin="round"/><path transform="translate(1946.70,730.20) scale(1.0833,0.9857)" d="M1,2.6 Q1,0.5 3,0.5 Q5,0.5 5,2.6 V11.4 Q5,13.5 3,13.5 Q1,13.5 1,11.4 Z" fill="none" stroke="#c8c8c8" stroke-width="1.5" vector-effect="non-scaling-stroke" stroke-linejoin="round"/>
<path transform="translate(1909.50,733.40) scale(1.0833,0.9857)" d="M1.1,11.7 Q1.6,13.5 3,13.5 Q5,13.5 5,10 V3.4 Q5,0.5 3,0.5 Q1,0.5 1,3.8 Q1,7.4 3,7.4 Q4.4,7.4 5,5.6" fill="none" stroke="#c8c8c8" stroke-width="1.5" vector-effect="non-scaling-stroke" stroke-linejoin="round"/><path transform="translate(1918.80,733.40) scale(1.0833,0.9857)" d="M2.9,12 V13.8 L1.9,15.6" fill="none" stroke="#c8c8c8" stroke-width="1.5" vector-effect="non-scaling-stroke" stroke-linejoin="round"/><path transform="translate(1928.10,733.40) scale(1.0833,0.9857)" d="M0.8,0.5 H5.2 Q3.6,5 2.6,13.5" fill="none" stroke="#c8c8c8" stroke-width="1.5" vector-effect="non-scaling-stroke" stroke-linejoin="round"/><path transform="translate(1937.40,733.40) scale(1.0833,0.9857)" d="M1,2.6 Q1,0.5 3,0.5 Q5,0.5 5,2.6 V11.4 Q5,13.5 3,13.5 Q1,13.5 1,11.4 Z" fill="none" stroke="#c8c8c8" stroke-width="1.5" vector-effect="non-scaling-stroke" stroke-linejoin="round"/><path transform="translate(1946.70,733.40) scale(1.0833,0.9857)" d="M1,2.6 Q1,0.5 3,0.5 Q5,0.5 5,2.6 V11.4 Q5,13.5 3,13.5 Q1,13.5 1,11.4 Z" fill="none" stroke="#c8c8c8" stroke-width="1.5" vector-effect="non-scaling-stroke" stroke-linejoin="round"/>
<path transform="translate(1909.50,819.80) scale(1.0833,0.9857)" d="M1.1,11.7 Q1.6,13.5 3,13.5 Q5,13.5 5,10 V3.4 Q5,0.5 3,0.5 Q1,0.5 1,3.8 Q1,7.4 3,7.4 Q4.4,7.4 5,5.6" fill="none" stroke="#c8c8c8" stroke-width="1.5" vector-effect="non-scaling-stroke" stroke-linejoin="round"/><path transform="translate(1918.80,819.80) scale(1.0833,0.9857)" d="M2.9,12 V13.8 L1.9,15.6" fill="none" stroke="#c8c8c8" stroke-width="1.5" vector-effect="non-scaling-stroke" stroke-linejoin="round"/><path transform="translate(1928.10,819.80) scale(1.0833,0.9857)" d="M4.9,2.3 Q4.4,0.5 3,0.5 Q1,0.5 1,4 V10.6 Q1,13.5 3,13.5 Q5,13.5 5,10.2 Q5,6.6 3,6.6 Q1.6,6.6 1,8.4" fill="none" stroke="#c8c8c8" stroke-width="1.5" vector-effect="non-scaling-stroke" stroke-linejoin="round"/><path transform="translate(1937.40,819.80) scale(1.0833,0.9857)" d="M5,0.5 H1.3 L1.1,6.3 Q1.9,5.2 3,5.2 Q5.1,5.2 5.1,9.3 Q5.1,13.5 3,13.5 Q1.3,13.5 0.8,11.8" fill="none" stroke="#c8c8c8" stroke-width="1.5" vector-effect="non-scaling-stroke" stroke-linejoin="round"/><path transform="translate(1946.70,819.80) scale(1.0833,0.9857)" d="M1,2.6 Q1,0.5 3,0.5 Q5,0.5 5,2.6 V11.4 Q5,13.5 3,13.5 Q1,13.5 1,11.4 Z" fill="none" stroke="#c8c8c8" stroke-width="1.5" vector-effect="non-scaling-stroke" stroke-linejoin="round"/>
<path transform="translate(1909.50,907.40) scale(1.0833,0.9857)" d="M1.1,11.7 Q1.6,13.5 3,13.5 Q5,13.5 5,10 V3.4 Q5,0.5 3,0.5 Q1,0.5 1,3.8 Q1,7.4 3,7.4 Q4.4,7.4 5,5.6" fill="none" stroke="#c8c8c8" stroke-width="1.5" vector-effect="non-scaling-stroke" stroke-linejoin="round"/><path transform="translate(1918.80,907.40) scale(1.0833,0.9857)" d="M2.9,12 V13.8 L1.9,15.6" fill="none" stroke="#c8c8c8" stroke-width="1.5" vector-effect="non-scaling-stroke" stroke-linejoin="round"/><path transform="translate(1928.10,907.40) scale(1.0833,0.9857)" d="M4.9,2.3 Q4.4,0.5 3,0.5 Q1,0.5 1,4 V10.6 Q1,13.5 3,13.5 Q5,13.5 5,10.2 Q5,6.6 3,6.6 Q1.6,6.6 1,8.4" fill="none" stroke="#c8c8c8" stroke-width="1.5" vector-effect="non-scaling-stroke" stroke-linejoin="round"/><path transform="translate(1937.40,907.40) scale(1.0833,0.9857)" d="M1,2.6 Q1,0.5 3,0.5 Q5,0.5 5,2.6 V11.4 Q5,13.5 3,13.5 Q1,13.5 1,11.4 Z" fill="none" stroke="#c8c8c8" stroke-width="1.5" vector-effect="non-scaling-stroke" stroke-linejoin="round"/><path transform="translate(1946.70,907.40) scale(1.0833,0.9857)" d="M1,2.6 Q1,0.5 3,0.5 Q5,0.5 5,2.6 V11.4 Q5,13.5 3,13.5 Q1,13.5 1,11.4 Z" fill="none" stroke="#c8c8c8" stroke-width="1.5" vector-effect="non-scaling-stroke" stroke-linejoin="round"/>
<path transform="translate(1909.50,997.20) scale(1.0833,0.9857)" d="M1.1,11.7 Q1.6,13.5 3,13.5 Q5,13.5 5,10 V3.4 Q5,0.5 3,0.5 Q1,0.5 1,3.8 Q1,7.4 3,7.4 Q4.4,7.4 5,5.6" fill="none" stroke="#c8c8c8" stroke-width="1.5" vector-effect="non-scaling-stroke" stroke-linejoin="round"/><path transform="translate(1918.80,997.20) scale(1.0833,0.9857)" d="M2.9,12 V13.8 L1.9,15.6" fill="none" stroke="#c8c8c8" stroke-width="1.5" vector-effect="non-scaling-stroke" stroke-linejoin="round"/><path transform="translate(1928.10,997.20) scale(1.0833,0.9857)" d="M5,0.5 H1.3 L1.1,6.3 Q1.9,5.2 3,5.2 Q5.1,5.2 5.1,9.3 Q5.1,13.5 3,13.5 Q1.3,13.5 0.8,11.8" fill="none" stroke="#c8c8c8" stroke-width="1.5" vector-effect="non-scaling-stroke" stroke-linejoin="round"/><path transform="translate(1937.40,997.20) scale(1.0833,0.9857)" d="M5,0.5 H1.3 L1.1,6.3 Q1.9,5.2 3,5.2 Q5.1,5.2 5.1,9.3 Q5.1,13.5 3,13.5 Q1.3,13.5 0.8,11.8" fill="none" stroke="#c8c8c8" stroke-width="1.5" vector-effect="non-scaling-stroke" stroke-linejoin="round"/><path transform="translate(1946.70,997.20) scale(1.0833,0.9857)" d="M1,2.6 Q1,0.5 3,0.5 Q5,0.5 5,2.6 V11.4 Q5,13.5 3,13.5 Q1,13.5 1,11.4 Z" fill="none" stroke="#c8c8c8" stroke-width="1.5" vector-effect="non-scaling-stroke" stroke-linejoin="round"/>
<rect x="9" y="731" width="1991" height="7.5" fill="#f8f8f8"/><rect x="9" y="731" width="1991" height="1" fill="#a4a4a4"/><rect x="9" y="737.0" width="1991" height="1.5" fill="#a8a8a8"/>
<rect x="1907" y="273.9" width="93.2" height="34.400000000000034" fill="#d3d3d3"/><rect x="1907" y="273.9" width="93.2" height="1" fill="#bdbdbd"/><path transform="translate(1922.30,280.30) scale(1.2500,1.0571)" d="M1.4,2.6 Q2.6,1.8 3.2,0.5 V13.5" fill="none" stroke="#000" stroke-width="2.7" vector-effect="non-scaling-stroke" stroke-linejoin="round"/><path transform="translate(1932.50,280.30) scale(1.2500,1.0571)" d="M3.9,13.5 V0.5 L0.6,9.6 H5.6" fill="none" stroke="#000" stroke-width="2.7" vector-effect="non-scaling-stroke" stroke-linejoin="round"/><path transform="translate(1942.70,280.30) scale(1.2500,1.0571)" d="M2.9,12 V13.8 L1.9,15.6" fill="none" stroke="#000" stroke-width="2.7" vector-effect="non-scaling-stroke" stroke-linejoin="round"/><path transform="translate(1952.90,280.30) scale(1.2500,1.0571)" d="M0.9,3 Q1.1,0.5 3,0.5 Q5.1,0.5 5.1,3.2 Q5.1,5.6 3.2,8 L0.9,13.3 H5.3" fill="none" stroke="#000" stroke-width="2.7" vector-effect="non-scaling-stroke" stroke-linejoin="round"/><path transform="translate(1963.10,280.30) scale(1.2500,1.0571)" d="M3.9,13.5 V0.5 L0.6,9.6 H5.6" fill="none" stroke="#000" stroke-width="2.7" vector-effect="non-scaling-stroke" stroke-linejoin="round"/><path transform="translate(1973.30,280.30) scale(1.2500,1.0571)" d="M4.9,2.3 Q4.4,0.5 3,0.5 Q1,0.5 1,4 V10.6 Q1,13.5 3,13.5 Q5,13.5 5,10.2 Q5,6.6 3,6.6 Q1.6,6.6 1,8.4" fill="none" stroke="#000" stroke-width="2.7" vector-effect="non-scaling-stroke" stroke-linejoin="round"/>
<rect x="1907" y="538.6" width="93.2" height="31.600000000000023" fill="#d3d3d3"/><rect x="1907" y="538.6" width="93.2" height="1" fill="#bdbdbd"/><path transform="translate(1926.10,545.00) scale(1.2500,1.0571)" d="M3.9,13.5 V0.5 L0.6,9.6 H5.6" fill="none" stroke="#000" stroke-width="2.7" vector-effect="non-scaling-stroke" stroke-linejoin="round"/><path transform="translate(1936.30,545.00) scale(1.2500,1.0571)" d="M2.9,12 V13.8 L1.9,15.6" fill="none" stroke="#000" stroke-width="2.7" vector-effect="non-scaling-stroke" stroke-linejoin="round"/><path transform="translate(1946.50,545.00) scale(1.2500,1.0571)" d="M4.9,2.3 Q4.4,0.5 3,0.5 Q1,0.5 1,4 V10.6 Q1,13.5 3,13.5 Q5,13.5 5,10.2 Q5,6.6 3,6.6 Q1.6,6.6 1,8.4" fill="none" stroke="#000" stroke-width="2.7" vector-effect="non-scaling-stroke" stroke-linejoin="round"/><path transform="translate(1956.70,545.00) scale(1.2500,1.0571)" d="M0.8,0.5 H5.2 Q3.6,5 2.6,13.5" fill="none" stroke="#000" stroke-width="2.7" vector-effect="non-scaling-stroke" stroke-linejoin="round"/><path transform="translate(1966.90,545.00) scale(1.2500,1.0571)" d="M1.4,2.6 Q2.6,1.8 3.2,0.5 V13.5" fill="none" stroke="#000" stroke-width="2.7" vector-effect="non-scaling-stroke" stroke-linejoin="round"/>
<rect x="1907" y="954.3" width="93.2" height="33.700000000000045" fill="#d3d3d3"/><rect x="1907" y="954.3" width="93.2" height="1" fill="#bdbdbd"/><path transform="translate(1926.10,960.70) scale(1.2500,1.0571)" d="M1.1,11.7 Q1.6,13.5 3,13.5 Q5,13.5 5,10 V3.4 Q5,0.5 3,0.5 Q1,0.5 1,3.8 Q1,7.4 3,7.4 Q4.4,7.4 5,5.6" fill="none" stroke="#000" stroke-width="2.7" vector-effect="non-scaling-stroke" stroke-linejoin="round"/><path transform="translate(1936.30,960.70) scale(1.2500,1.0571)" d="M2.9,12 V13.8 L1.9,15.6" fill="none" stroke="#000" stroke-width="2.7" vector-effect="non-scaling-stroke" stroke-linejoin="round"/><path transform="translate(1946.50,960.70) scale(1.2500,1.0571)" d="M5,0.5 H1.3 L1.1,6.3 Q1.9,5.2 3,5.2 Q5.1,5.2 5.1,9.3 Q5.1,13.5 3,13.5 Q1.3,13.5 0.8,11.8" fill="none" stroke="#000" stroke-width="2.7" vector-effect="non-scaling-stroke" stroke-linejoin="round"/><path transform="translate(1956.70,960.70) scale(1.2500,1.0571)" d="M0.8,0.5 H5.2 Q3.6,5 2.6,13.5" fill="none" stroke="#000" stroke-width="2.7" vector-effect="non-scaling-stroke" stroke-linejoin="round"/><path transform="translate(1966.90,960.70) scale(1.2500,1.0571)" d="M5,0.5 H1.3 L1.1,6.3 Q1.9,5.2 3,5.2 Q5.1,5.2 5.1,9.3 Q5.1,13.5 3,13.5 Q1.3,13.5 0.8,11.8" fill="none" stroke="#000" stroke-width="2.7" vector-effect="non-scaling-stroke" stroke-linejoin="round"/>
<path transform="translate(1472.60,347.30) scale(1.0333,0.9429)" d="M0.9,3 Q1.1,0.5 3,0.5 Q5.1,0.5 5.1,3.2 Q5.1,5.6 3.2,8 L0.9,13.3 H5.3" fill="none" stroke="#c8c8c8" stroke-width="1.4" vector-effect="non-scaling-stroke" stroke-linejoin="round"/><path transform="translate(1482.20,347.30) scale(1.0333,0.9429)" d="M1.4,2.6 Q2.6,1.8 3.2,0.5 V13.5" fill="none" stroke="#c8c8c8" stroke-width="1.4" vector-effect="non-scaling-stroke" stroke-linejoin="round"/>
<path transform="translate(1472.60,684.80) scale(1.0333,0.9429)" d="M0.9,3 Q1.1,0.5 3,0.5 Q5.1,0.5 5.1,3.2 Q5.1,5.6 3.2,8 L0.9,13.3 H5.3" fill="none" stroke="#c8c8c8" stroke-width="1.4" vector-effect="non-scaling-stroke" stroke-linejoin="round"/><path transform="translate(1482.20,684.80) scale(1.0333,0.9429)" d="M1.4,2.6 Q2.6,1.8 3.2,0.5 V13.5" fill="none" stroke="#c8c8c8" stroke-width="1.4" vector-effect="non-scaling-stroke" stroke-linejoin="round"/>
<path transform="translate(1472.60,1025.40) scale(1.0333,0.9429)" d="M0.9,3 Q1.1,0.5 3,0.5 Q5.1,0.5 5.1,3.2 Q5.1,5.6 3.2,8 L0.9,13.3 H5.3" fill="none" stroke="#c8c8c8" stroke-width="1.4" vector-effect="non-scaling-stroke" stroke-linejoin="round"/><path transform="translate(1482.20,1025.40) scale(1.0333,0.9429)" d="M1.4,2.6 Q2.6,1.8 3.2,0.5 V13.5" fill="none" stroke="#c8c8c8" stroke-width="1.4" vector-effect="non-scaling-stroke" stroke-linejoin="round"/>
</svg></body></html>
